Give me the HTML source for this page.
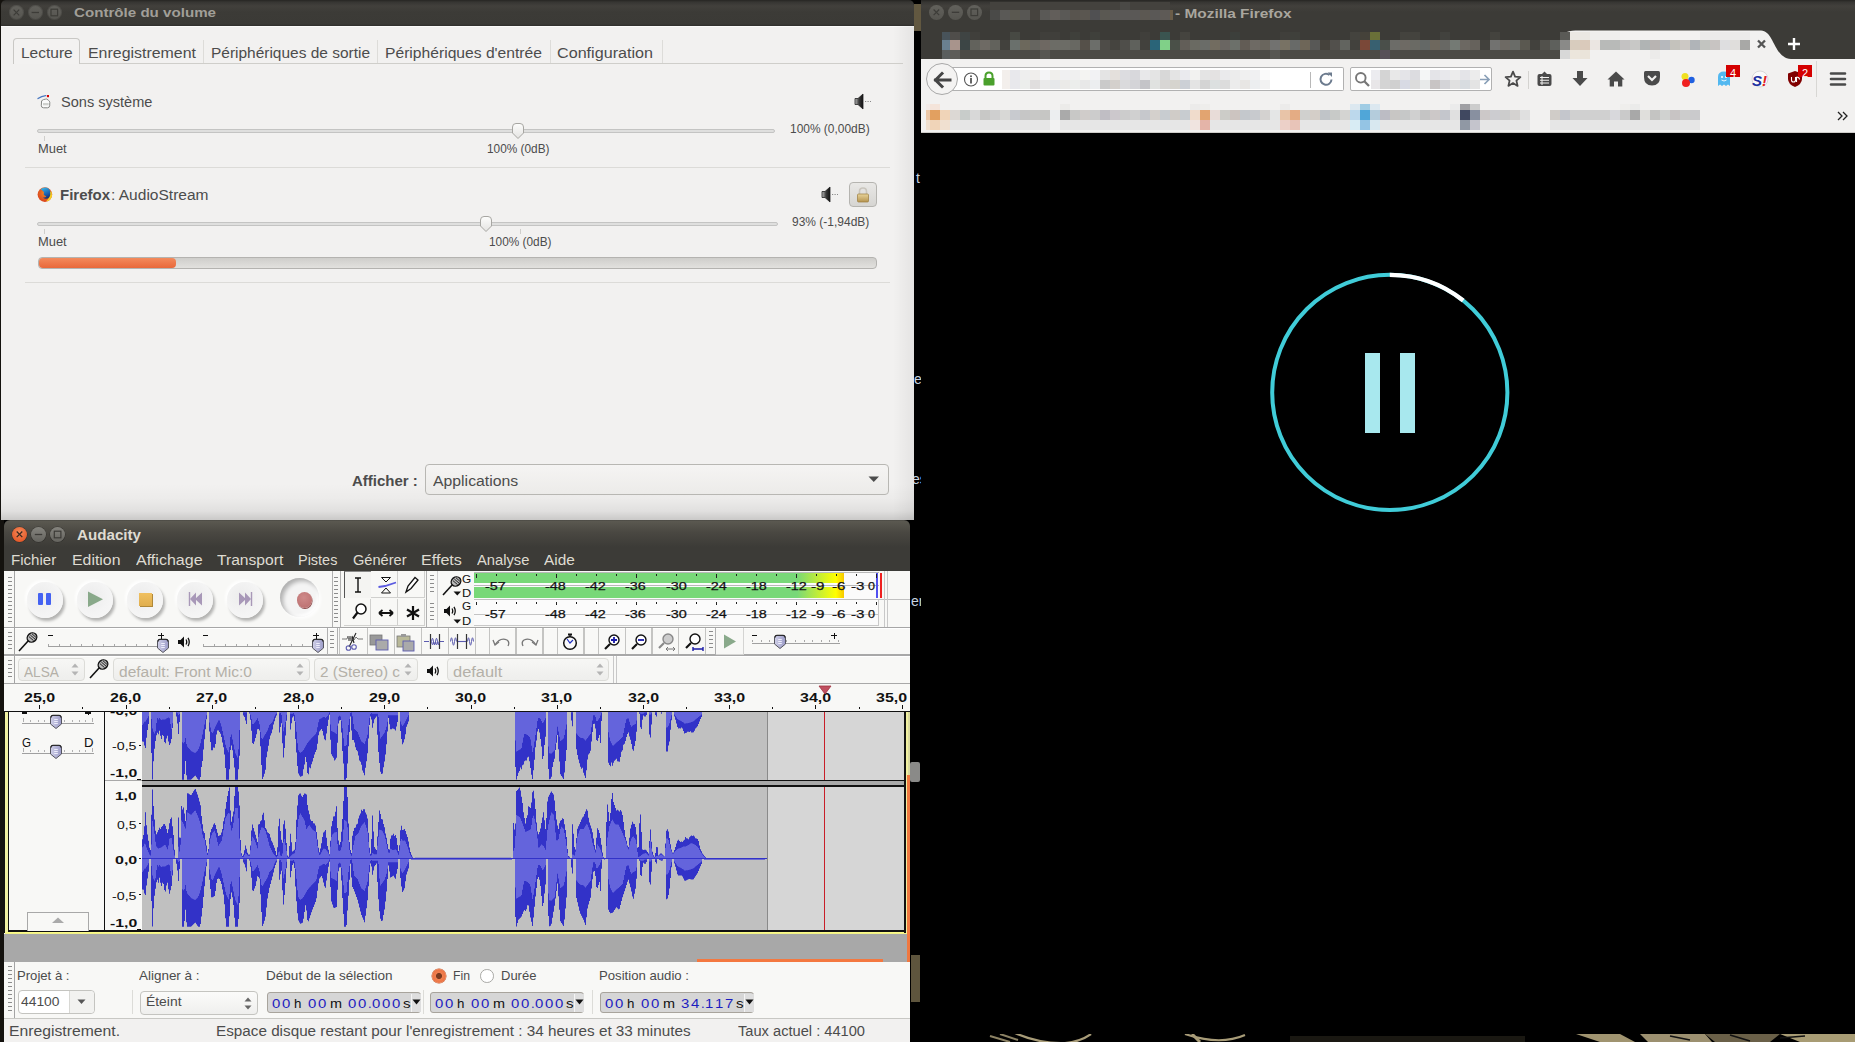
<!DOCTYPE html><html><head><meta charset="utf-8"><style>html,body{margin:0;padding:0;width:1855px;height:1042px;overflow:hidden;background:#000}.r{position:absolute}.t{position:absolute;white-space:pre}#root{position:relative;width:1855px;height:1042px;overflow:hidden;font-family:"Liberation Sans",sans-serif}</style></head><body><div id="root">
<div class="r" style="left:0px;top:0px;width:1855px;height:1042px;background:#000"></div>
<svg class="r" style="left:900px;top:1034px" width="955" height="8" viewBox="0 1034 955 8"><path d="M115,1033 Q140,1044 165,1043 Q180,1042 191,1034" stroke="#a89c78" stroke-width="2.2" fill="none"/><path d="M90,1036 L110,1042 M100,1034 L118,1040" stroke="#8c8264" stroke-width="2" fill="none"/><path d="M285,1034 Q320,1046 345,1035" stroke="#a89c78" stroke-width="2.2" fill="none"/><path d="M292,1034 L300,1042" stroke="#a89c78" stroke-width="3" fill="none"/><rect x="390" y="1036" width="235" height="6" fill="#1a1812"/><path d="M676,1034 L720,1034 L735,1042 L700,1042Z" fill="#a09470"/><path d="M740,1034 L805,1034 L812,1042 L748,1042Z" fill="#9c9070"/><path d="M805,1034 L880,1034 L870,1042 L815,1042Z" fill="#6a6048"/><path d="M880,1034 L955,1034 L955,1042 L900,1042Z" fill="#a89c74"/><path d="M770,1036 L790,1040 M830,1035 L850,1041 M880,1038 L905,1036" stroke="#111" stroke-width="1.6"/></svg>
<div class="r" style="left:914px;top:4px;width:7px;height:27px;background:#7a6e50;opacity:0.8"></div>
<div class="r" style="left:911px;top:955px;width:9px;height:47px;background:#6e6448;opacity:0.85"></div>
<div class="t" style="left:916.0px;top:171.33px;font-size:14px;line-height:15.64px;color:#c8d4e0;font-weight:400;font-family:'Liberation Sans', sans-serif;">t</div>
<div class="t" style="left:914.0px;top:372.33px;font-size:14px;line-height:15.64px;color:#c8d4e0;font-weight:400;font-family:'Liberation Sans', sans-serif;">e</div>
<div class="t" style="left:912.0px;top:472.33px;font-size:14px;line-height:15.64px;color:#c8d4e0;font-weight:400;font-family:'Liberation Sans', sans-serif;">es</div>
<div class="t" style="left:911.0px;top:594.33px;font-size:14px;line-height:15.64px;color:#c8d4e0;font-weight:400;font-family:'Liberation Sans', sans-serif;">er</div>
<div class="r" style="left:0px;top:0px;width:4px;height:1042px;background:#14120e"></div>
<div class="r" style="left:921px;top:0px;width:934px;height:59px;background:linear-gradient(#262523 0,#363532 2px,#42403c 6px,#3c3b37 12px,#3c3b37 100%)"></div>
<div class="r" style="left:928.9px;top:5px;width:15px;height:15px;border-radius:50%;background:linear-gradient(#62615c,#55544f)"></div>
<div class="r" style="left:948.0px;top:5px;width:15px;height:15px;border-radius:50%;background:linear-gradient(#62615c,#55544f)"></div>
<div class="r" style="left:966.9px;top:5px;width:15px;height:15px;border-radius:50%;background:linear-gradient(#62615c,#55544f)"></div>
<svg class="r" style="left:921px;top:0" width="70" height="26"><path d="M12.6,9.5 L18.2,15.1 M18.2,9.5 L12.6,15.1" stroke="#3d3c38" stroke-width="1.2"/><line x1="30.8" y1="12.3" x2="38.2" y2="12.3" stroke="#3d3c38" stroke-width="1.3"/><rect x="50" y="9" width="6.6" height="6.6" fill="none" stroke="#3d3c38" stroke-width="1.2"/></svg>
<div class="r" style="left:990px;top:2px;width:10px;height:8px;background:#44423e"></div><div class="r" style="left:1000px;top:2px;width:10px;height:8px;background:#44423e"></div><div class="r" style="left:1010px;top:2px;width:10px;height:8px;background:#44423e"></div><div class="r" style="left:1020px;top:2px;width:10px;height:8px;background:#44423e"></div><div class="r" style="left:1030px;top:2px;width:10px;height:8px;background:#44423e"></div><div class="r" style="left:1040px;top:2px;width:10px;height:8px;background:#44423e"></div><div class="r" style="left:1050px;top:2px;width:10px;height:8px;background:#44423e"></div><div class="r" style="left:1060px;top:2px;width:10px;height:8px;background:#44423e"></div><div class="r" style="left:1070px;top:2px;width:10px;height:8px;background:#44423e"></div><div class="r" style="left:1080px;top:2px;width:10px;height:8px;background:#44423e"></div><div class="r" style="left:1090px;top:2px;width:10px;height:8px;background:#44423e"></div><div class="r" style="left:1100px;top:2px;width:10px;height:8px;background:#44423e"></div><div class="r" style="left:1110px;top:2px;width:10px;height:8px;background:#44423e"></div><div class="r" style="left:1120px;top:2px;width:10px;height:8px;background:#4a4946"></div><div class="r" style="left:1130px;top:2px;width:10px;height:8px;background:#44423e"></div><div class="r" style="left:1140px;top:2px;width:10px;height:8px;background:#44423e"></div><div class="r" style="left:1150px;top:2px;width:10px;height:8px;background:#44423e"></div><div class="r" style="left:1160px;top:2px;width:10px;height:8px;background:#44423e"></div><div class="r" style="left:990px;top:10px;width:10px;height:10px;background:#4a4a48"></div><div class="r" style="left:1000px;top:10px;width:10px;height:10px;background:#5a5956"></div><div class="r" style="left:1010px;top:10px;width:10px;height:10px;background:#5a5850"></div><div class="r" style="left:1020px;top:10px;width:10px;height:10px;background:#585754"></div><div class="r" style="left:1030px;top:10px;width:10px;height:10px;background:#46433e"></div><div class="r" style="left:1040px;top:10px;width:10px;height:10px;background:#5a5956"></div><div class="r" style="left:1050px;top:10px;width:10px;height:10px;background:#625e5a"></div><div class="r" style="left:1060px;top:10px;width:10px;height:10px;background:#5a5956"></div><div class="r" style="left:1070px;top:10px;width:10px;height:10px;background:#58544e"></div><div class="r" style="left:1080px;top:10px;width:10px;height:10px;background:#5a5650"></div><div class="r" style="left:1090px;top:10px;width:10px;height:10px;background:#505052"></div><div class="r" style="left:1100px;top:10px;width:10px;height:10px;background:#5a5852"></div><div class="r" style="left:1110px;top:10px;width:10px;height:10px;background:#5a5856"></div><div class="r" style="left:1120px;top:10px;width:10px;height:10px;background:#5a5856"></div><div class="r" style="left:1130px;top:10px;width:10px;height:10px;background:#5a5856"></div><div class="r" style="left:1140px;top:10px;width:10px;height:10px;background:#5c5852"></div><div class="r" style="left:1150px;top:10px;width:10px;height:10px;background:#5a5856"></div><div class="r" style="left:1160px;top:10px;width:10px;height:10px;background:#5e5a56"></div><div class="r" style="left:1170px;top:10px;width:3px;height:10px;background:#6a5c48"></div>
<div class="t" style="left:1175.0px;top:6.73px;font-size:13px;line-height:14.52px;color:#a9a69e;font-weight:700;font-family:'Liberation Sans', sans-serif;transform:scaleX(1.1860);transform-origin:0 0;">- Mozilla Firefox</div>
<div class="r" style="left:942px;top:32px;width:8px;height:8px;background:#48535a"></div><div class="r" style="left:950px;top:32px;width:10px;height:8px;background:#4f4d4a"></div><div class="r" style="left:960px;top:32px;width:10px;height:8px;background:#3f4443"></div><div class="r" style="left:970px;top:32px;width:10px;height:8px;background:#403f3b"></div><div class="r" style="left:1010px;top:32px;width:10px;height:8px;background:#474943"></div><div class="r" style="left:1040px;top:32px;width:10px;height:8px;background:#403f3b"></div><div class="r" style="left:1050px;top:32px;width:10px;height:8px;background:#403f3b"></div><div class="r" style="left:1070px;top:32px;width:10px;height:8px;background:#3f403b"></div><div class="r" style="left:1090px;top:32px;width:10px;height:8px;background:#3f403b"></div><div class="r" style="left:1140px;top:32px;width:10px;height:8px;background:#403f3b"></div><div class="r" style="left:1160px;top:32px;width:10px;height:8px;background:#3a5450"></div><div class="r" style="left:1180px;top:32px;width:10px;height:8px;background:#45443f"></div><div class="r" style="left:1230px;top:32px;width:10px;height:8px;background:#3c3f3b"></div><div class="r" style="left:1280px;top:32px;width:10px;height:8px;background:#403f3b"></div><div class="r" style="left:1290px;top:32px;width:10px;height:8px;background:#3f403b"></div><div class="r" style="left:1350px;top:32px;width:10px;height:8px;background:#44433e"></div><div class="r" style="left:1360px;top:32px;width:10px;height:8px;background:#45423a"></div><div class="r" style="left:1370px;top:32px;width:10px;height:8px;background:#6a7038"></div><div class="r" style="left:1400px;top:32px;width:10px;height:8px;background:#44433e"></div><div class="r" style="left:1410px;top:32px;width:10px;height:8px;background:#44433e"></div><div class="r" style="left:1440px;top:32px;width:10px;height:8px;background:#42423e"></div><div class="r" style="left:1490px;top:32px;width:10px;height:8px;background:#44433e"></div><div class="r" style="left:1560px;top:32px;width:10px;height:8px;background:#5a5a56"></div><div class="r" style="left:942px;top:40px;width:8px;height:10px;background:#6a8090"></div><div class="r" style="left:950px;top:40px;width:10px;height:10px;background:#a8948c"></div><div class="r" style="left:960px;top:40px;width:10px;height:10px;background:#3c4545"></div><div class="r" style="left:970px;top:40px;width:10px;height:10px;background:#62625c"></div><div class="r" style="left:980px;top:40px;width:10px;height:10px;background:#6e6a64"></div><div class="r" style="left:990px;top:40px;width:10px;height:10px;background:#62625c"></div><div class="r" style="left:1000px;top:40px;width:10px;height:10px;background:#42413d"></div><div class="r" style="left:1010px;top:40px;width:10px;height:10px;background:#6a706c"></div><div class="r" style="left:1020px;top:40px;width:10px;height:10px;background:#6c685c"></div><div class="r" style="left:1030px;top:40px;width:10px;height:10px;background:#666560"></div><div class="r" style="left:1040px;top:40px;width:10px;height:10px;background:#6e6862"></div><div class="r" style="left:1050px;top:40px;width:10px;height:10px;background:#6c6c66"></div><div class="r" style="left:1060px;top:40px;width:10px;height:10px;background:#6c6c66"></div><div class="r" style="left:1070px;top:40px;width:10px;height:10px;background:#686862"></div><div class="r" style="left:1080px;top:40px;width:10px;height:10px;background:#555049"></div><div class="r" style="left:1090px;top:40px;width:10px;height:10px;background:#6c6e6a"></div><div class="r" style="left:1100px;top:40px;width:10px;height:10px;background:#4e4c48"></div><div class="r" style="left:1110px;top:40px;width:10px;height:10px;background:#45443f"></div><div class="r" style="left:1120px;top:40px;width:10px;height:10px;background:#4f4e4a"></div><div class="r" style="left:1130px;top:40px;width:10px;height:10px;background:#5f615c"></div><div class="r" style="left:1140px;top:40px;width:10px;height:10px;background:#42413d"></div><div class="r" style="left:1150px;top:40px;width:10px;height:10px;background:#2a6478"></div><div class="r" style="left:1160px;top:40px;width:10px;height:10px;background:#80d088"></div><div class="r" style="left:1170px;top:40px;width:10px;height:10px;background:#4a5048"></div><div class="r" style="left:1180px;top:40px;width:10px;height:10px;background:#625e58"></div><div class="r" style="left:1190px;top:40px;width:10px;height:10px;background:#6a6a62"></div><div class="r" style="left:1200px;top:40px;width:10px;height:10px;background:#6a6c68"></div><div class="r" style="left:1210px;top:40px;width:10px;height:10px;background:#726c60"></div><div class="r" style="left:1220px;top:40px;width:10px;height:10px;background:#6a6662"></div><div class="r" style="left:1230px;top:40px;width:10px;height:10px;background:#6c706a"></div><div class="r" style="left:1240px;top:40px;width:10px;height:10px;background:#625c55"></div><div class="r" style="left:1250px;top:40px;width:10px;height:10px;background:#6e6a64"></div><div class="r" style="left:1260px;top:40px;width:10px;height:10px;background:#6a665e"></div><div class="r" style="left:1270px;top:40px;width:10px;height:10px;background:#727270"></div><div class="r" style="left:1280px;top:40px;width:10px;height:10px;background:#787264"></div><div class="r" style="left:1290px;top:40px;width:10px;height:10px;background:#686a68"></div><div class="r" style="left:1300px;top:40px;width:10px;height:10px;background:#6e6658"></div><div class="r" style="left:1310px;top:40px;width:10px;height:10px;background:#585856"></div><div class="r" style="left:1320px;top:40px;width:10px;height:10px;background:#45423c"></div><div class="r" style="left:1330px;top:40px;width:10px;height:10px;background:#52504c"></div><div class="r" style="left:1340px;top:40px;width:10px;height:10px;background:#62645f"></div><div class="r" style="left:1350px;top:40px;width:10px;height:10px;background:#42413d"></div><div class="r" style="left:1360px;top:40px;width:10px;height:10px;background:#7a4838"></div><div class="r" style="left:1370px;top:40px;width:10px;height:10px;background:#386070"></div><div class="r" style="left:1380px;top:40px;width:10px;height:10px;background:#4a4f4a"></div><div class="r" style="left:1390px;top:40px;width:10px;height:10px;background:#6c6c68"></div><div class="r" style="left:1400px;top:40px;width:10px;height:10px;background:#6e6a64"></div><div class="r" style="left:1410px;top:40px;width:10px;height:10px;background:#6a6a64"></div><div class="r" style="left:1420px;top:40px;width:10px;height:10px;background:#646866"></div><div class="r" style="left:1430px;top:40px;width:10px;height:10px;background:#6e685e"></div><div class="r" style="left:1440px;top:40px;width:10px;height:10px;background:#686864"></div><div class="r" style="left:1450px;top:40px;width:10px;height:10px;background:#747a74"></div><div class="r" style="left:1460px;top:40px;width:10px;height:10px;background:#6c6862"></div><div class="r" style="left:1470px;top:40px;width:10px;height:10px;background:#66625c"></div><div class="r" style="left:1480px;top:40px;width:10px;height:10px;background:#42413d"></div><div class="r" style="left:1490px;top:40px;width:10px;height:10px;background:#727270"></div><div class="r" style="left:1500px;top:40px;width:10px;height:10px;background:#6e6a64"></div><div class="r" style="left:1510px;top:40px;width:10px;height:10px;background:#6a6c68"></div><div class="r" style="left:1520px;top:40px;width:10px;height:10px;background:#5a5850"></div><div class="r" style="left:1530px;top:40px;width:10px;height:10px;background:#42413d"></div><div class="r" style="left:1540px;top:40px;width:10px;height:10px;background:#52514c"></div><div class="r" style="left:1550px;top:40px;width:10px;height:10px;background:#5e605c"></div><div class="r" style="left:1560px;top:40px;width:10px;height:10px;background:#8a8a88"></div><div class="r" style="left:942px;top:50px;width:8px;height:9px;background:#5a5e5e"></div><div class="r" style="left:950px;top:50px;width:10px;height:9px;background:#5e5c58"></div><div class="r" style="left:960px;top:50px;width:10px;height:9px;background:#4c4b46"></div><div class="r" style="left:970px;top:50px;width:10px;height:9px;background:#4c4b46"></div><div class="r" style="left:980px;top:50px;width:10px;height:9px;background:#4c4b46"></div><div class="r" style="left:990px;top:50px;width:10px;height:9px;background:#4c4b46"></div><div class="r" style="left:1000px;top:50px;width:10px;height:9px;background:#4c4b46"></div><div class="r" style="left:1010px;top:50px;width:10px;height:9px;background:#4c4b46"></div><div class="r" style="left:1020px;top:50px;width:10px;height:9px;background:#4c4b46"></div><div class="r" style="left:1030px;top:50px;width:10px;height:9px;background:#4c4b46"></div><div class="r" style="left:1040px;top:50px;width:10px;height:9px;background:#585752"></div><div class="r" style="left:1050px;top:50px;width:10px;height:9px;background:#4c4b46"></div><div class="r" style="left:1060px;top:50px;width:10px;height:9px;background:#4c4b46"></div><div class="r" style="left:1070px;top:50px;width:10px;height:9px;background:#4c4b46"></div><div class="r" style="left:1080px;top:50px;width:10px;height:9px;background:#4c4b46"></div><div class="r" style="left:1090px;top:50px;width:10px;height:9px;background:#4c4b46"></div><div class="r" style="left:1100px;top:50px;width:10px;height:9px;background:#4c4b46"></div><div class="r" style="left:1110px;top:50px;width:10px;height:9px;background:#4c4b46"></div><div class="r" style="left:1120px;top:50px;width:10px;height:9px;background:#4c4b46"></div><div class="r" style="left:1130px;top:50px;width:10px;height:9px;background:#4c4b46"></div><div class="r" style="left:1140px;top:50px;width:10px;height:9px;background:#4c4b46"></div><div class="r" style="left:1150px;top:50px;width:10px;height:9px;background:#4c4b46"></div><div class="r" style="left:1160px;top:50px;width:10px;height:9px;background:#4c4b46"></div><div class="r" style="left:1170px;top:50px;width:10px;height:9px;background:#4c4b46"></div><div class="r" style="left:1180px;top:50px;width:10px;height:9px;background:#4c4b46"></div><div class="r" style="left:1190px;top:50px;width:10px;height:9px;background:#4c4b46"></div><div class="r" style="left:1200px;top:50px;width:10px;height:9px;background:#4c4b46"></div><div class="r" style="left:1210px;top:50px;width:10px;height:9px;background:#4c4b46"></div><div class="r" style="left:1220px;top:50px;width:10px;height:9px;background:#4c4b46"></div><div class="r" style="left:1230px;top:50px;width:10px;height:9px;background:#4c4b46"></div><div class="r" style="left:1240px;top:50px;width:10px;height:9px;background:#4c4b46"></div><div class="r" style="left:1250px;top:50px;width:10px;height:9px;background:#4c4b46"></div><div class="r" style="left:1260px;top:50px;width:10px;height:9px;background:#4c4b46"></div><div class="r" style="left:1270px;top:50px;width:10px;height:9px;background:#585752"></div><div class="r" style="left:1280px;top:50px;width:10px;height:9px;background:#4c4b46"></div><div class="r" style="left:1290px;top:50px;width:10px;height:9px;background:#4c4b46"></div><div class="r" style="left:1300px;top:50px;width:10px;height:9px;background:#4c4b46"></div><div class="r" style="left:1310px;top:50px;width:10px;height:9px;background:#4c4b46"></div><div class="r" style="left:1320px;top:50px;width:10px;height:9px;background:#4c4b46"></div><div class="r" style="left:1330px;top:50px;width:10px;height:9px;background:#4c4b46"></div><div class="r" style="left:1340px;top:50px;width:10px;height:9px;background:#4c4b46"></div><div class="r" style="left:1350px;top:50px;width:10px;height:9px;background:#4c4b46"></div><div class="r" style="left:1360px;top:50px;width:10px;height:9px;background:#4c4b46"></div><div class="r" style="left:1370px;top:50px;width:10px;height:9px;background:#4c4b46"></div><div class="r" style="left:1380px;top:50px;width:10px;height:9px;background:#585058"></div><div class="r" style="left:1390px;top:50px;width:10px;height:9px;background:#4c4b46"></div><div class="r" style="left:1400px;top:50px;width:10px;height:9px;background:#4c4b46"></div><div class="r" style="left:1410px;top:50px;width:10px;height:9px;background:#4c4b46"></div><div class="r" style="left:1420px;top:50px;width:10px;height:9px;background:#4c4b46"></div><div class="r" style="left:1430px;top:50px;width:10px;height:9px;background:#4c4b46"></div><div class="r" style="left:1440px;top:50px;width:10px;height:9px;background:#4c4b46"></div><div class="r" style="left:1450px;top:50px;width:10px;height:9px;background:#4c4b46"></div><div class="r" style="left:1460px;top:50px;width:10px;height:9px;background:#4c4b46"></div><div class="r" style="left:1470px;top:50px;width:10px;height:9px;background:#4c4b46"></div><div class="r" style="left:1480px;top:50px;width:10px;height:9px;background:#4c4b46"></div><div class="r" style="left:1490px;top:50px;width:10px;height:9px;background:#4c4b46"></div><div class="r" style="left:1500px;top:50px;width:10px;height:9px;background:#4c4b46"></div><div class="r" style="left:1510px;top:50px;width:10px;height:9px;background:#4c4b46"></div><div class="r" style="left:1520px;top:50px;width:10px;height:9px;background:#4c4b46"></div><div class="r" style="left:1530px;top:50px;width:10px;height:9px;background:#4c4b46"></div><div class="r" style="left:1540px;top:50px;width:10px;height:9px;background:#4c4b46"></div><div class="r" style="left:1550px;top:50px;width:10px;height:9px;background:#4c4b46"></div><div class="r" style="left:1560px;top:50px;width:10px;height:9px;background:#4c4b46"></div><div class="r" style="left:1570px;top:50px;width:10px;height:9px;background:#d8d8d8"></div>
<svg class="r" style="left:1555px;top:28px" width="240" height="32"><path d="M5,32 L5,12 C8,3 14,2.5 24,2.5 L206,2.5 C219,2.5 219,30.5 236,31 L236,32 Z" fill="#f2f1f0"/></svg>
<div class="r" style="left:1560px;top:32px;width:10px;height:8px;background:#5a5a56"></div><div class="r" style="left:1570px;top:32px;width:20px;height:8px;background:#ebe8e3"></div><div class="r" style="left:1590px;top:32px;width:30px;height:8px;background:#efeeed"></div><div class="r" style="left:1700px;top:32px;width:50px;height:8px;background:#ecebea"></div><div class="r" style="left:1560px;top:40px;width:10px;height:10px;background:#8a8a88"></div><div class="r" style="left:1570px;top:40px;width:10px;height:10px;background:#d8ccbe"></div><div class="r" style="left:1580px;top:40px;width:10px;height:10px;background:#dacabb"></div><div class="r" style="left:1590px;top:40px;width:10px;height:10px;background:#ebe6e2"></div><div class="r" style="left:1600px;top:40px;width:20px;height:10px;background:#b8bab8"></div><div class="r" style="left:1620px;top:40px;width:10px;height:10px;background:#c4c2c2"></div><div class="r" style="left:1630px;top:40px;width:10px;height:10px;background:#c8c8c6"></div><div class="r" style="left:1640px;top:40px;width:10px;height:10px;background:#b0b4b4"></div><div class="r" style="left:1650px;top:40px;width:10px;height:10px;background:#b8b4b2"></div><div class="r" style="left:1660px;top:40px;width:10px;height:10px;background:#b6b8bc"></div><div class="r" style="left:1670px;top:40px;width:10px;height:10px;background:#c4c2bc"></div><div class="r" style="left:1680px;top:40px;width:10px;height:10px;background:#ccc8c4"></div><div class="r" style="left:1690px;top:40px;width:10px;height:10px;background:#b0b4b8"></div><div class="r" style="left:1700px;top:40px;width:10px;height:10px;background:#c2c4c0"></div><div class="r" style="left:1710px;top:40px;width:10px;height:10px;background:#c8c4c2"></div><div class="r" style="left:1720px;top:40px;width:10px;height:10px;background:#dedee0"></div><div class="r" style="left:1730px;top:40px;width:10px;height:10px;background:#e0dedc"></div><div class="r" style="left:1740px;top:40px;width:10px;height:10px;background:#a8a8a6"></div><div class="r" style="left:1560px;top:50px;width:10px;height:9px;background:#d8d8d8"></div><div class="r" style="left:1570px;top:50px;width:10px;height:9px;background:#ece6dc"></div><div class="r" style="left:1580px;top:50px;width:10px;height:9px;background:#eae4da"></div><div class="r" style="left:1650px;top:50px;width:10px;height:9px;background:#ecebea"></div>
<svg class="r" style="left:1756px;top:39px" width="11" height="10"><path d="M2,1.5 L9,8.5 M9,1.5 L2,8.5" stroke="#555" stroke-width="2.3"/></svg>
<svg class="r" style="left:1787px;top:37px" width="14" height="14"><path d="M7,1 V13 M1,7 H13" stroke="#fff" stroke-width="2.4"/></svg>
<div class="r" style="left:921px;top:59px;width:934px;height:74px;background:#f2f1f0"></div>
<div class="r" style="left:921px;top:132px;width:934px;height:1px;background:#cfcdca"></div>
<div class="r" style="left:945px;top:67px;width:399px;height:24px;box-sizing:border-box;border:1px solid #b1b1b1;border-left:none;border-radius:0 2px 2px 0;background:#fff"></div>
<div class="r" style="left:926px;top:63px;width:32px;height:32px;box-sizing:border-box;border-radius:50%;border:1px solid #a8a8a8;background:#f4f3f2"></div>
<svg class="r" style="left:932px;top:69px" width="22" height="22"><path d="M3.5,11 L10,4.5 M3.5,11 L10,17.5 M3.5,11 H18" stroke="#454545" stroke-width="3" fill="none" stroke-linecap="square" stroke-linejoin="miter"/></svg>
<svg class="r" style="left:963px;top:72px" width="16" height="16"><circle cx="8" cy="7.5" r="6.5" fill="none" stroke="#555" stroke-width="1.1"/><rect x="7.1" y="6" width="1.8" height="5.5" fill="#555"/><circle cx="8" cy="4.2" r="1" fill="#555"/></svg>
<svg class="r" style="left:982px;top:71px" width="14" height="16"><path d="M3.5,7 V5 Q3.5,1.5 7,1.5 Q10.5,1.5 10.5,5 V7" fill="none" stroke="#4aa02c" stroke-width="2"/><rect x="1.5" y="7" width="11" height="7.5" rx="1" fill="#4aa02c"/></svg>
<div class="r" style="left:1002px;top:70px;width:8px;height:10px;background:#f3efec"></div><div class="r" style="left:1010px;top:70px;width:10px;height:10px;background:#e8e8ec"></div><div class="r" style="left:1020px;top:70px;width:10px;height:10px;background:#eeeeee"></div><div class="r" style="left:1030px;top:70px;width:10px;height:10px;background:#f0eeec"></div><div class="r" style="left:1040px;top:70px;width:10px;height:10px;background:#f4f4f6"></div><div class="r" style="left:1050px;top:70px;width:10px;height:10px;background:#f0efec"></div><div class="r" style="left:1060px;top:70px;width:10px;height:10px;background:#f0f0f2"></div><div class="r" style="left:1070px;top:70px;width:10px;height:10px;background:#f0f0f0"></div><div class="r" style="left:1080px;top:70px;width:10px;height:10px;background:#f4f4f2"></div><div class="r" style="left:1090px;top:70px;width:10px;height:10px;background:#f2f2f4"></div><div class="r" style="left:1100px;top:70px;width:10px;height:10px;background:#e4e4e4"></div><div class="r" style="left:1110px;top:70px;width:10px;height:10px;background:#e4e0dc"></div><div class="r" style="left:1120px;top:70px;width:10px;height:10px;background:#dcdce0"></div><div class="r" style="left:1130px;top:70px;width:10px;height:10px;background:#d8d8dc"></div><div class="r" style="left:1140px;top:70px;width:10px;height:10px;background:#e8e8ea"></div><div class="r" style="left:1150px;top:70px;width:10px;height:10px;background:#e4e4e4"></div><div class="r" style="left:1160px;top:70px;width:10px;height:10px;background:#d8d8d8"></div><div class="r" style="left:1170px;top:70px;width:10px;height:10px;background:#e4e4e4"></div><div class="r" style="left:1180px;top:70px;width:10px;height:10px;background:#eaeaee"></div><div class="r" style="left:1190px;top:70px;width:10px;height:10px;background:#f2f2f0"></div><div class="r" style="left:1200px;top:70px;width:10px;height:10px;background:#e4e4e4"></div><div class="r" style="left:1210px;top:70px;width:10px;height:10px;background:#e4e2e2"></div><div class="r" style="left:1220px;top:70px;width:10px;height:10px;background:#eaeaec"></div><div class="r" style="left:1230px;top:70px;width:10px;height:10px;background:#ececec"></div><div class="r" style="left:1240px;top:70px;width:10px;height:10px;background:#f0f0f0"></div><div class="r" style="left:1250px;top:70px;width:10px;height:10px;background:#f0f0f2"></div><div class="r" style="left:1260px;top:70px;width:10px;height:10px;background:#fafafa"></div><div class="r" style="left:1002px;top:80px;width:8px;height:9px;background:#f3efec"></div><div class="r" style="left:1010px;top:80px;width:10px;height:9px;background:#e8e8ec"></div><div class="r" style="left:1020px;top:80px;width:10px;height:9px;background:#eceeec"></div><div class="r" style="left:1030px;top:80px;width:10px;height:9px;background:#e0dede"></div><div class="r" style="left:1040px;top:80px;width:10px;height:9px;background:#eaeaea"></div><div class="r" style="left:1050px;top:80px;width:10px;height:9px;background:#e6e8ea"></div><div class="r" style="left:1060px;top:80px;width:10px;height:9px;background:#ebeae8"></div><div class="r" style="left:1070px;top:80px;width:10px;height:9px;background:#eceeec"></div><div class="r" style="left:1080px;top:80px;width:10px;height:9px;background:#e8e8e8"></div><div class="r" style="left:1090px;top:80px;width:10px;height:9px;background:#eceef0"></div><div class="r" style="left:1100px;top:80px;width:10px;height:9px;background:#cacaca"></div><div class="r" style="left:1110px;top:80px;width:10px;height:9px;background:#d4d0cc"></div><div class="r" style="left:1120px;top:80px;width:10px;height:9px;background:#dadadc"></div><div class="r" style="left:1130px;top:80px;width:10px;height:9px;background:#d4d4d8"></div><div class="r" style="left:1140px;top:80px;width:10px;height:9px;background:#c4c4c8"></div><div class="r" style="left:1150px;top:80px;width:10px;height:9px;background:#e0e2e0"></div><div class="r" style="left:1160px;top:80px;width:10px;height:9px;background:#d8d6d4"></div><div class="r" style="left:1170px;top:80px;width:10px;height:9px;background:#d6d4ce"></div><div class="r" style="left:1180px;top:80px;width:10px;height:9px;background:#ccd0d6"></div><div class="r" style="left:1190px;top:80px;width:10px;height:9px;background:#e4e4e4"></div><div class="r" style="left:1200px;top:80px;width:10px;height:9px;background:#d4d4d4"></div><div class="r" style="left:1210px;top:80px;width:10px;height:9px;background:#dce0e0"></div><div class="r" style="left:1220px;top:80px;width:10px;height:9px;background:#dcdcdc"></div><div class="r" style="left:1230px;top:80px;width:10px;height:9px;background:#ececec"></div><div class="r" style="left:1240px;top:80px;width:10px;height:9px;background:#e8e6e4"></div><div class="r" style="left:1250px;top:80px;width:10px;height:9px;background:#eceef0"></div><div class="r" style="left:1260px;top:80px;width:10px;height:9px;background:#f2f2f2"></div>
<div class="r" style="left:1310px;top:72px;width:1px;height:16px;background:#b8b8b8"></div>
<svg class="r" style="left:1318px;top:71px" width="17" height="17"><path d="M13.5,8.5 A5.5,5.5 0 1 1 11.5,4" fill="none" stroke="#6c7b8e" stroke-width="2"/><path d="M9.5,1.5 L14,1.5 L14,6 Z" fill="#6c7b8e"/></svg>
<div class="r" style="left:1350px;top:67px;width:142px;height:24px;box-sizing:border-box;border:1px solid #b1b1b1;border-radius:2px;background:#fff"></div>
<svg class="r" style="left:1354px;top:71px" width="17" height="17"><circle cx="6.8" cy="6.8" r="4.8" fill="none" stroke="#777" stroke-width="1.9"/><line x1="10.3" y1="10.3" x2="15" y2="15" stroke="#777" stroke-width="2.3"/></svg>
<div class="r" style="left:1371px;top:70px;width:9px;height:10px;background:#ececf0"></div><div class="r" style="left:1380px;top:70px;width:10px;height:10px;background:#d4d4d4"></div><div class="r" style="left:1390px;top:70px;width:10px;height:10px;background:#e8e8e8"></div><div class="r" style="left:1400px;top:70px;width:10px;height:10px;background:#e4e4e8"></div><div class="r" style="left:1410px;top:70px;width:10px;height:10px;background:#dcdce0"></div><div class="r" style="left:1420px;top:70px;width:10px;height:10px;background:#f4f6f6"></div><div class="r" style="left:1430px;top:70px;width:10px;height:10px;background:#e4e4e8"></div><div class="r" style="left:1440px;top:70px;width:10px;height:10px;background:#e8e8ec"></div><div class="r" style="left:1450px;top:70px;width:10px;height:10px;background:#ececec"></div><div class="r" style="left:1460px;top:70px;width:10px;height:10px;background:#e4e4e8"></div><div class="r" style="left:1470px;top:70px;width:10px;height:10px;background:#ececec"></div><div class="r" style="left:1371px;top:80px;width:9px;height:9px;background:#e8e6e8"></div><div class="r" style="left:1380px;top:80px;width:10px;height:9px;background:#d4d4d4"></div><div class="r" style="left:1390px;top:80px;width:10px;height:9px;background:#d0d0d0"></div><div class="r" style="left:1400px;top:80px;width:10px;height:9px;background:#d8dae4"></div><div class="r" style="left:1410px;top:80px;width:10px;height:9px;background:#dcdcdc"></div><div class="r" style="left:1420px;top:80px;width:10px;height:9px;background:#e8eaea"></div><div class="r" style="left:1430px;top:80px;width:10px;height:9px;background:#c8c4c4"></div><div class="r" style="left:1440px;top:80px;width:10px;height:9px;background:#d4d4d8"></div><div class="r" style="left:1450px;top:80px;width:10px;height:9px;background:#e0e0e0"></div><div class="r" style="left:1460px;top:80px;width:10px;height:9px;background:#d8dce0"></div><div class="r" style="left:1470px;top:80px;width:10px;height:9px;background:#e4e4e4"></div>
<svg class="r" style="left:1479px;top:73px" width="12" height="13"><path d="M1,6.5 H10 M5.5,2 L10,6.5 L5.5,11" fill="none" stroke="#8aa0b8" stroke-width="1.7"/></svg>
<svg class="r" style="left:1504px;top:70px" width="18" height="18" viewBox="0 0 18 18"><path d="M9,1.6 L11.1,6.6 L16.4,7.1 L12.4,10.6 L13.6,15.9 L9,13.1 L4.4,15.9 L5.6,10.6 L1.6,7.1 L6.9,6.6 Z" fill="none" stroke="#4a4a4a" stroke-width="1.8" stroke-linejoin="round"/></svg>
<div class="r" style="left:1528px;top:71px;width:1px;height:18px;background:#d4d3d0"></div>
<svg class="r" style="left:1536px;top:70px" width="18" height="18"><rect x="1.5" y="4" width="14" height="12" rx="2" fill="#4a4a4a"/><path d="M6,4 L8.5,1.5 L11,4" fill="#4a4a4a"/><path d="M4,7.5 H13 M4,10.3 H13 M4,13 H13" stroke="#f2f1f0" stroke-width="1.1"/><path d="M6,6 V15" stroke="#f2f1f0" stroke-width="1"/></svg>
<svg class="r" style="left:1571px;top:70px" width="18" height="18"><path d="M6,1 H12 V8 H16.5 L9,16 L1.5,8 H6 Z" fill="#4a4a4a"/></svg>
<svg class="r" style="left:1606px;top:70px" width="20" height="18"><path d="M10,1.5 L18.5,9.5 L16.3,9.5 L16.3,16.5 L12,16.5 L12,11.5 L8,11.5 L8,16.5 L3.7,16.5 L3.7,9.5 L1.5,9.5 Z" fill="#4a4a4a"/></svg>
<svg class="r" style="left:1643px;top:70px" width="18" height="17"><path d="M1,2.5 Q1,1 2.5,1 H15.5 Q17,1 17,2.5 V7 Q17,15.5 9,15.5 Q1,15.5 1,7 Z" fill="#4a4a4a"/><path d="M5,6 L9,10 L13,6" fill="none" stroke="#f2f1f0" stroke-width="2.2"/></svg>
<svg class="r" style="left:1679px;top:72px" width="19" height="16"><circle cx="6" cy="4.5" r="3.5" fill="#f0e020"/><circle cx="12.5" cy="8" r="3.2" fill="#2060e0"/><circle cx="7" cy="11" r="4" fill="#f02020"/></svg>
<svg class="r" style="left:1716px;top:70px" width="16" height="18"><path d="M2,16 V7 Q2,1.5 8,1.5 Q14,1.5 14,7 V16 L12,14.5 L10,16 L8,14.5 L6,16 L4,14.5 Z" fill="#52b8f0"/><circle cx="6" cy="7" r="1" fill="#fff"/><circle cx="10" cy="7" r="1" fill="#fff"/><path d="M5.5,10 Q8,12 10.5,10" stroke="#fff" stroke-width="0.9" fill="none"/></svg>
<div class="r" style="left:1726px;top:65px;width:14px;height:12px;background:#d40000"></div>
<div class="t" style="left:1729.9px;top:67.05px;font-size:11px;line-height:12.29px;color:#fff;font-weight:400;font-family:'Liberation Sans', sans-serif;">4</div>
<svg class="r" style="left:1751px;top:70px" width="18" height="18"><circle cx="9" cy="9" r="8" fill="#fafafa" stroke="#ccc" stroke-width="0.7"/></svg>
<div class="t" style="left:1752.0px;top:73.42px;font-size:15px;line-height:16.75px;color:#2030a0;font-weight:700;font-family:'Liberation Sans', sans-serif;font-style:italic;">S</div>
<div class="t" style="left:1762.0px;top:74.33px;font-size:14px;line-height:15.64px;color:#e02020;font-weight:700;font-family:'Liberation Sans', sans-serif;transform:scaleX(1.0724);transform-origin:0 0;font-style:italic;">!</div>
<svg class="r" style="left:1786px;top:70px" width="18" height="18"><path d="M9,1 L16,3.5 V9 Q16,14 9,17 Q2,14 2,9 V3.5 Z" fill="#800000"/><path d="M5.5,7 V10 Q5.5,12 7.5,12 Q9.5,12 9.5,10 V7 M10.5,12 V7 M10.5,7 Q13.5,7 13.5,9.5" stroke="#fff" stroke-width="1.1" fill="none"/></svg>
<div class="r" style="left:1798px;top:65px;width:14px;height:12px;background:#d40000"></div>
<div class="t" style="left:1801.9px;top:67.05px;font-size:11px;line-height:12.29px;color:#fff;font-weight:400;font-family:'Liberation Sans', sans-serif;">2</div>
<div class="r" style="left:1816px;top:61px;width:1px;height:36px;background:#d8d7d4"></div>
<svg class="r" style="left:1829px;top:71px" width="18" height="16"><path d="M2,2.5 H16 M2,8 H16 M2,13.5 H16" stroke="#4a4a4a" stroke-width="2.6" stroke-linecap="round"/></svg>
<div class="r" style="left:926px;top:104px;width:4px;height:6px;background:#f3ebe8"></div><div class="r" style="left:930px;top:104px;width:10px;height:6px;background:#f4e4da"></div><div class="r" style="left:1060px;top:104px;width:10px;height:6px;background:#ecebe9"></div><div class="r" style="left:1190px;top:104px;width:10px;height:6px;background:#ecebea"></div><div class="r" style="left:1200px;top:104px;width:10px;height:6px;background:#eeedeb"></div><div class="r" style="left:1280px;top:104px;width:10px;height:6px;background:#ecebea"></div><div class="r" style="left:1350px;top:104px;width:10px;height:6px;background:#dce8f0"></div><div class="r" style="left:1360px;top:104px;width:10px;height:6px;background:#a0cce4"></div><div class="r" style="left:1370px;top:104px;width:10px;height:6px;background:#dce8f0"></div><div class="r" style="left:1450px;top:104px;width:10px;height:6px;background:#ebebeb"></div><div class="r" style="left:1460px;top:104px;width:10px;height:6px;background:#a0a0a4"></div><div class="r" style="left:1470px;top:104px;width:10px;height:6px;background:#cccccc"></div><div class="r" style="left:1620px;top:104px;width:10px;height:6px;background:#efeeec"></div><div class="r" style="left:1630px;top:104px;width:10px;height:6px;background:#ebebea"></div><div class="r" style="left:926px;top:110px;width:4px;height:10px;background:#ecc8a8"></div><div class="r" style="left:930px;top:110px;width:10px;height:10px;background:#e2a060"></div><div class="r" style="left:940px;top:110px;width:10px;height:10px;background:#f0d4b8"></div><div class="r" style="left:950px;top:110px;width:10px;height:10px;background:#dcd8d4"></div><div class="r" style="left:960px;top:110px;width:10px;height:10px;background:#c8ccca"></div><div class="r" style="left:970px;top:110px;width:10px;height:10px;background:#d8d8d8"></div><div class="r" style="left:980px;top:110px;width:10px;height:10px;background:#c8c8c6"></div><div class="r" style="left:990px;top:110px;width:10px;height:10px;background:#cfcfcf"></div><div class="r" style="left:1000px;top:110px;width:10px;height:10px;background:#d8d8d6"></div><div class="r" style="left:1010px;top:110px;width:10px;height:10px;background:#c8cacf"></div><div class="r" style="left:1020px;top:110px;width:10px;height:10px;background:#c6c6c6"></div><div class="r" style="left:1030px;top:110px;width:10px;height:10px;background:#c8c8c6"></div><div class="r" style="left:1040px;top:110px;width:10px;height:10px;background:#c6c6c4"></div><div class="r" style="left:1050px;top:110px;width:10px;height:10px;background:#eceef0"></div><div class="r" style="left:1060px;top:110px;width:10px;height:10px;background:#aaaaaa"></div><div class="r" style="left:1070px;top:110px;width:10px;height:10px;background:#c8c8c6"></div><div class="r" style="left:1080px;top:110px;width:10px;height:10px;background:#d0ccca"></div><div class="r" style="left:1090px;top:110px;width:10px;height:10px;background:#cccccc"></div><div class="r" style="left:1100px;top:110px;width:10px;height:10px;background:#c0bec4"></div><div class="r" style="left:1110px;top:110px;width:10px;height:10px;background:#ccc8cc"></div><div class="r" style="left:1120px;top:110px;width:10px;height:10px;background:#cccccc"></div><div class="r" style="left:1130px;top:110px;width:10px;height:10px;background:#d0d0d0"></div><div class="r" style="left:1140px;top:110px;width:10px;height:10px;background:#c6c8cc"></div><div class="r" style="left:1150px;top:110px;width:10px;height:10px;background:#d4d0cc"></div><div class="r" style="left:1160px;top:110px;width:10px;height:10px;background:#c8ccd0"></div><div class="r" style="left:1170px;top:110px;width:10px;height:10px;background:#d0ccc8"></div><div class="r" style="left:1180px;top:110px;width:10px;height:10px;background:#c8ccd0"></div><div class="r" style="left:1190px;top:110px;width:10px;height:10px;background:#f0dccc"></div><div class="r" style="left:1200px;top:110px;width:10px;height:10px;background:#e2a470"></div><div class="r" style="left:1210px;top:110px;width:10px;height:10px;background:#e8dcd8"></div><div class="r" style="left:1220px;top:110px;width:10px;height:10px;background:#ccccc8"></div><div class="r" style="left:1230px;top:110px;width:10px;height:10px;background:#ccc4c0"></div><div class="r" style="left:1240px;top:110px;width:10px;height:10px;background:#c4c8cc"></div><div class="r" style="left:1250px;top:110px;width:10px;height:10px;background:#c8cace"></div><div class="r" style="left:1260px;top:110px;width:10px;height:10px;background:#d4d2d0"></div><div class="r" style="left:1270px;top:110px;width:10px;height:10px;background:#e4e6e6"></div><div class="r" style="left:1280px;top:110px;width:10px;height:10px;background:#e8c4a8"></div><div class="r" style="left:1290px;top:110px;width:10px;height:10px;background:#e4ac84"></div><div class="r" style="left:1300px;top:110px;width:10px;height:10px;background:#d0d0ce"></div><div class="r" style="left:1310px;top:110px;width:10px;height:10px;background:#d4cec8"></div><div class="r" style="left:1320px;top:110px;width:10px;height:10px;background:#c0c4c8"></div><div class="r" style="left:1330px;top:110px;width:10px;height:10px;background:#c8cac8"></div><div class="r" style="left:1340px;top:110px;width:10px;height:10px;background:#d4d4d2"></div><div class="r" style="left:1350px;top:110px;width:10px;height:10px;background:#bcd8ec"></div><div class="r" style="left:1360px;top:110px;width:10px;height:10px;background:#50a6d8"></div><div class="r" style="left:1370px;top:110px;width:10px;height:10px;background:#b4ccdc"></div><div class="r" style="left:1380px;top:110px;width:10px;height:10px;background:#bcbcc4"></div><div class="r" style="left:1390px;top:110px;width:10px;height:10px;background:#c8c6c4"></div><div class="r" style="left:1400px;top:110px;width:10px;height:10px;background:#c6c8c8"></div><div class="r" style="left:1410px;top:110px;width:10px;height:10px;background:#d0d0d0"></div><div class="r" style="left:1420px;top:110px;width:10px;height:10px;background:#c4c4c4"></div><div class="r" style="left:1430px;top:110px;width:10px;height:10px;background:#ccc8c8"></div><div class="r" style="left:1440px;top:110px;width:10px;height:10px;background:#c4c6cc"></div><div class="r" style="left:1450px;top:110px;width:10px;height:10px;background:#e0e0e0"></div><div class="r" style="left:1460px;top:110px;width:10px;height:10px;background:#404860"></div><div class="r" style="left:1470px;top:110px;width:10px;height:10px;background:#8890a0"></div><div class="r" style="left:1480px;top:110px;width:10px;height:10px;background:#ccc8c8"></div><div class="r" style="left:1490px;top:110px;width:10px;height:10px;background:#ccccd0"></div><div class="r" style="left:1500px;top:110px;width:10px;height:10px;background:#cccccc"></div><div class="r" style="left:1510px;top:110px;width:10px;height:10px;background:#d4d2d0"></div><div class="r" style="left:1520px;top:110px;width:10px;height:10px;background:#e0e0e0"></div><div class="r" style="left:1550px;top:110px;width:10px;height:10px;background:#d0ccc8"></div><div class="r" style="left:1560px;top:110px;width:10px;height:10px;background:#c4c6cc"></div><div class="r" style="left:1570px;top:110px;width:10px;height:10px;background:#d0d0d0"></div><div class="r" style="left:1580px;top:110px;width:10px;height:10px;background:#d0d0d0"></div><div class="r" style="left:1590px;top:110px;width:10px;height:10px;background:#d0d0d0"></div><div class="r" style="left:1600px;top:110px;width:10px;height:10px;background:#d0d0d0"></div><div class="r" style="left:1610px;top:110px;width:10px;height:10px;background:#d8d8dc"></div><div class="r" style="left:1620px;top:110px;width:10px;height:10px;background:#cacaca"></div><div class="r" style="left:1630px;top:110px;width:10px;height:10px;background:#a8a8a8"></div><div class="r" style="left:1640px;top:110px;width:10px;height:10px;background:#e0dfdc"></div><div class="r" style="left:1650px;top:110px;width:10px;height:10px;background:#c4c4c2"></div><div class="r" style="left:1660px;top:110px;width:10px;height:10px;background:#d0d2d0"></div><div class="r" style="left:1670px;top:110px;width:10px;height:10px;background:#c8c4c4"></div><div class="r" style="left:1680px;top:110px;width:10px;height:10px;background:#cccccc"></div><div class="r" style="left:1690px;top:110px;width:10px;height:10px;background:#cacacc"></div><div class="r" style="left:926px;top:120px;width:4px;height:10px;background:#f0e0d0"></div><div class="r" style="left:930px;top:120px;width:10px;height:10px;background:#f0d4b8"></div><div class="r" style="left:940px;top:120px;width:10px;height:10px;background:#f0e0d0"></div><div class="r" style="left:950px;top:120px;width:10px;height:10px;background:#e6e6e6"></div><div class="r" style="left:960px;top:120px;width:10px;height:10px;background:#e6e6e6"></div><div class="r" style="left:970px;top:120px;width:10px;height:10px;background:#e6e6e6"></div><div class="r" style="left:980px;top:120px;width:10px;height:10px;background:#e6e6e6"></div><div class="r" style="left:990px;top:120px;width:10px;height:10px;background:#e6e6e6"></div><div class="r" style="left:1000px;top:120px;width:10px;height:10px;background:#e6e6e6"></div><div class="r" style="left:1010px;top:120px;width:10px;height:10px;background:#e6e6e6"></div><div class="r" style="left:1020px;top:120px;width:10px;height:10px;background:#e6e6e6"></div><div class="r" style="left:1030px;top:120px;width:10px;height:10px;background:#e6e6e6"></div><div class="r" style="left:1040px;top:120px;width:10px;height:10px;background:#e6e6e6"></div><div class="r" style="left:1050px;top:120px;width:10px;height:10px;background:#f2f2f2"></div><div class="r" style="left:1060px;top:120px;width:10px;height:10px;background:#e6e6e6"></div><div class="r" style="left:1070px;top:120px;width:10px;height:10px;background:#e6e6e6"></div><div class="r" style="left:1080px;top:120px;width:10px;height:10px;background:#e6e6e6"></div><div class="r" style="left:1090px;top:120px;width:10px;height:10px;background:#e6e6e6"></div><div class="r" style="left:1100px;top:120px;width:10px;height:10px;background:#e6e6e6"></div><div class="r" style="left:1110px;top:120px;width:10px;height:10px;background:#e6e6e6"></div><div class="r" style="left:1120px;top:120px;width:10px;height:10px;background:#e6e6e6"></div><div class="r" style="left:1130px;top:120px;width:10px;height:10px;background:#e6e6e6"></div><div class="r" style="left:1140px;top:120px;width:10px;height:10px;background:#e6e6e6"></div><div class="r" style="left:1150px;top:120px;width:10px;height:10px;background:#e6e6e6"></div><div class="r" style="left:1160px;top:120px;width:10px;height:10px;background:#e6e6e6"></div><div class="r" style="left:1170px;top:120px;width:10px;height:10px;background:#e6e6e6"></div><div class="r" style="left:1180px;top:120px;width:10px;height:10px;background:#e6e6e6"></div><div class="r" style="left:1190px;top:120px;width:10px;height:10px;background:#f0e4e0"></div><div class="r" style="left:1200px;top:120px;width:10px;height:10px;background:#e4b4a8"></div><div class="r" style="left:1210px;top:120px;width:10px;height:10px;background:#e6e6e6"></div><div class="r" style="left:1220px;top:120px;width:10px;height:10px;background:#e6e6e6"></div><div class="r" style="left:1230px;top:120px;width:10px;height:10px;background:#e6e6e6"></div><div class="r" style="left:1240px;top:120px;width:10px;height:10px;background:#e6e6e6"></div><div class="r" style="left:1250px;top:120px;width:10px;height:10px;background:#e6e6e6"></div><div class="r" style="left:1260px;top:120px;width:10px;height:10px;background:#e6e6e6"></div><div class="r" style="left:1270px;top:120px;width:10px;height:10px;background:#e6e6e6"></div><div class="r" style="left:1280px;top:120px;width:10px;height:10px;background:#ecd0c8"></div><div class="r" style="left:1290px;top:120px;width:10px;height:10px;background:#e8c4b8"></div><div class="r" style="left:1300px;top:120px;width:10px;height:10px;background:#e6e6e6"></div><div class="r" style="left:1310px;top:120px;width:10px;height:10px;background:#e6e6e6"></div><div class="r" style="left:1320px;top:120px;width:10px;height:10px;background:#e6e6e6"></div><div class="r" style="left:1330px;top:120px;width:10px;height:10px;background:#e6e6e6"></div><div class="r" style="left:1340px;top:120px;width:10px;height:10px;background:#e6e6e6"></div><div class="r" style="left:1350px;top:120px;width:10px;height:10px;background:#d8ecf4"></div><div class="r" style="left:1360px;top:120px;width:10px;height:10px;background:#94c4e4"></div><div class="r" style="left:1370px;top:120px;width:10px;height:10px;background:#d8e8f0"></div><div class="r" style="left:1380px;top:120px;width:10px;height:10px;background:#e6e6e6"></div><div class="r" style="left:1390px;top:120px;width:10px;height:10px;background:#e6e6e6"></div><div class="r" style="left:1400px;top:120px;width:10px;height:10px;background:#e6e6e6"></div><div class="r" style="left:1410px;top:120px;width:10px;height:10px;background:#e6e6e6"></div><div class="r" style="left:1420px;top:120px;width:10px;height:10px;background:#e6e6e6"></div><div class="r" style="left:1430px;top:120px;width:10px;height:10px;background:#e6e6e6"></div><div class="r" style="left:1440px;top:120px;width:10px;height:10px;background:#e6e6e6"></div><div class="r" style="left:1450px;top:120px;width:10px;height:10px;background:#e6e6e6"></div><div class="r" style="left:1460px;top:120px;width:10px;height:10px;background:#9098a4"></div><div class="r" style="left:1470px;top:120px;width:10px;height:10px;background:#c4c4cc"></div><div class="r" style="left:1480px;top:120px;width:10px;height:10px;background:#e6e6e6"></div><div class="r" style="left:1490px;top:120px;width:10px;height:10px;background:#e6e6e6"></div><div class="r" style="left:1500px;top:120px;width:10px;height:10px;background:#e6e6e6"></div><div class="r" style="left:1510px;top:120px;width:10px;height:10px;background:#e6e6e6"></div><div class="r" style="left:1520px;top:120px;width:10px;height:10px;background:#e6e6e6"></div><div class="r" style="left:1550px;top:120px;width:10px;height:10px;background:#e6e6e6"></div><div class="r" style="left:1560px;top:120px;width:10px;height:10px;background:#e6e6e6"></div><div class="r" style="left:1570px;top:120px;width:10px;height:10px;background:#e6e6e6"></div><div class="r" style="left:1580px;top:120px;width:10px;height:10px;background:#e6e6e6"></div><div class="r" style="left:1590px;top:120px;width:10px;height:10px;background:#e6e6e6"></div><div class="r" style="left:1600px;top:120px;width:10px;height:10px;background:#e6e6e6"></div><div class="r" style="left:1610px;top:120px;width:10px;height:10px;background:#e6e6e6"></div><div class="r" style="left:1620px;top:120px;width:10px;height:10px;background:#e6e6e6"></div><div class="r" style="left:1630px;top:120px;width:10px;height:10px;background:#e6e6e6"></div><div class="r" style="left:1640px;top:120px;width:10px;height:10px;background:#e6e6e6"></div><div class="r" style="left:1650px;top:120px;width:10px;height:10px;background:#e6e6e6"></div><div class="r" style="left:1660px;top:120px;width:10px;height:10px;background:#e6e6e6"></div><div class="r" style="left:1670px;top:120px;width:10px;height:10px;background:#e6e6e6"></div><div class="r" style="left:1680px;top:120px;width:10px;height:10px;background:#e6e6e6"></div><div class="r" style="left:1690px;top:120px;width:10px;height:10px;background:#e6e6e6"></div>
<svg class="r" style="left:1837px;top:111px" width="12" height="10"><path d="M1,1 L5,5 L1,9 M6,1 L10,5 L6,9" fill="none" stroke="#222" stroke-width="1.3"/></svg>
<div class="r" style="left:921px;top:133px;width:934px;height:899px;background:#000"></div>
<svg class="r" style="left:1260px;top:262px" width="260" height="260" viewBox="0 0 260 260"><circle cx="129.8" cy="130.4" r="117.6" fill="none" stroke="#40ccd8" stroke-width="4"/><path d="M129.8,12.8 A117.6,117.6 0 0 1 203.2,38.5" fill="none" stroke="#ffffff" stroke-width="4.2"/><rect x="105" y="91" width="15" height="80" fill="#a8e8ee"/><rect x="140" y="91" width="15" height="80" fill="#a8e8ee"/></svg>
<div class="r" style="left:1px;top:0px;width:913px;height:26px;background:linear-gradient(#262523 0px,#363532 2px,#42403c 6px,#3c3b37 12px,#3b3a36 24px,#2f2e2b 26px);border-radius:5px 5px 0 0"></div>
<div class="r" style="left:8.9px;top:5px;width:15px;height:15px;border-radius:50%;background:linear-gradient(#62615c,#55544f);box-shadow:inset 0 0 0 1px rgba(0,0,0,0.15)"></div>
<div class="r" style="left:27.8px;top:5px;width:15px;height:15px;border-radius:50%;background:linear-gradient(#62615c,#55544f);box-shadow:inset 0 0 0 1px rgba(0,0,0,0.15)"></div>
<div class="r" style="left:46.8px;top:5px;width:15px;height:15px;border-radius:50%;background:linear-gradient(#62615c,#55544f);box-shadow:inset 0 0 0 1px rgba(0,0,0,0.15)"></div>
<svg class="r" style="left:0;top:0" width="70" height="26"><path d="M13.6,9.7 L19.2,15.3 M19.2,9.7 L13.6,15.3" stroke="#3d3c38" stroke-width="1.2"/><line x1="31.6" y1="12.5" x2="39" y2="12.5" stroke="#3d3c38" stroke-width="1.3"/><rect x="51" y="9.2" width="6.6" height="6.6" fill="none" stroke="#3d3c38" stroke-width="1.2"/></svg>
<div class="t" style="left:74.4px;top:6.23px;font-size:13px;line-height:14.52px;color:#a19f98;font-weight:700;font-family:'Liberation Sans', sans-serif;transform:scaleX(1.1634);transform-origin:0 0;">Contrôle du volume</div>
<div class="r" style="left:1px;top:26px;width:913px;height:494px;background:#f2f1f0"></div>
<div class="r" style="left:1px;top:26px;width:913px;height:1px;background:#fbfbfa"></div>
<div class="r" style="left:893px;top:26px;width:21px;height:494px;background:linear-gradient(90deg,rgba(0,0,0,0) 0,rgba(0,0,0,0.055) 100%)"></div>
<div class="r" style="left:1px;top:484px;width:913px;height:36px;background:linear-gradient(rgba(0,0,0,0) 0,rgba(0,0,0,0.025) 40%,rgba(0,0,0,0.07) 75%,rgba(0,0,0,0.17) 100%)"></div>
<div class="r" style="left:13px;top:38px;width:67px;height:26px;box-sizing:border-box;border:1px solid #c9c8c5;border-bottom:none;border-radius:4px 4px 0 0;background:#f3f2f1"></div>
<div class="r" style="left:80px;top:63px;width:823px;height:1px;background:#cfceca"></div>
<div class="r" style="left:203px;top:40px;width:1px;height:23px;background:#dddcd9"></div>
<div class="r" style="left:377px;top:40px;width:1px;height:23px;background:#dddcd9"></div>
<div class="r" style="left:550px;top:40px;width:1px;height:23px;background:#dddcd9"></div>
<div class="r" style="left:662px;top:40px;width:1px;height:23px;background:#dddcd9"></div>
<div class="t" style="left:21.3px;top:45.53px;font-size:14px;line-height:15.64px;color:#4c4c4c;font-weight:400;font-family:'Liberation Sans', sans-serif;transform:scaleX(1.1071);transform-origin:0 0;">Lecture</div>
<div class="t" style="left:87.8px;top:45.53px;font-size:14px;line-height:15.64px;color:#4c4c4c;font-weight:400;font-family:'Liberation Sans', sans-serif;transform:scaleX(1.1376);transform-origin:0 0;">Enregistrement</div>
<div class="t" style="left:210.8px;top:45.53px;font-size:14px;line-height:15.64px;color:#4c4c4c;font-weight:400;font-family:'Liberation Sans', sans-serif;transform:scaleX(1.1043);transform-origin:0 0;">Périphériques de sortie</div>
<div class="t" style="left:384.9px;top:45.53px;font-size:14px;line-height:15.64px;color:#4c4c4c;font-weight:400;font-family:'Liberation Sans', sans-serif;transform:scaleX(1.1179);transform-origin:0 0;">Périphériques d&#x27;entrée</div>
<div class="t" style="left:557.3px;top:45.53px;font-size:14px;line-height:15.64px;color:#4c4c4c;font-weight:400;font-family:'Liberation Sans', sans-serif;transform:scaleX(1.1528);transform-origin:0 0;">Configuration</div>
<svg class="r" style="left:33px;top:88px" width="25" height="25" viewBox="0 0 25 25"><path d="M5,10.6 Q8.5,8 12.7,7.6" stroke="#4a78c0" stroke-width="1.3" fill="none" stroke-linecap="round"/><rect x="13.9" y="7" width="2.1" height="2.2" fill="#d40000"/><path d="M8.6,12.8 Q10.5,11.2 12.3,11.2 Q13.7,10.3 15.3,12.2 Q16.8,13 16.8,14.5 L16.7,17.8 Q16.6,19.6 14.5,19.8 L10.5,19.8 Q8.3,19.6 8.3,17.8 Z" fill="#fafafa" stroke="#858784" stroke-width="1"/><rect x="10" y="15" width="5.6" height="2.3" fill="#cfd1ce"/></svg>
<div class="t" style="left:61.2px;top:95.33px;font-size:14px;line-height:15.64px;color:#4c4c4c;font-weight:400;font-family:'Liberation Sans', sans-serif;transform:scaleX(1.0395);transform-origin:0 0;">Sons système</div>
<svg class="r" style="left:854px;top:93px" width="18" height="17" viewBox="0 0 18 17"><defs><linearGradient id="sp" x1="0" x2="1"><stop offset="0" stop-color="#bdbdbd"/><stop offset="0.5" stop-color="#3a3a3a"/><stop offset="1" stop-color="#111"/></linearGradient></defs><path d="M1,5.5 L4,5.5 L9,1 L9,16 L4,11.5 L1,11.5 Z" fill="url(#sp)" stroke="#222" stroke-width="0.8"/><line x1="11" y1="8.5" x2="17" y2="8.5" stroke="#888" stroke-width="1" stroke-dasharray="1.2,1.3"/></svg>
<div class="r" style="left:37px;top:129px;width:738px;height:4px;box-sizing:border-box;border-radius:3px;background:#dfdfde;border:1px solid #c4c4c3"></div>
<div class="r" style="left:44px;top:136px;width:1px;height:5px;background:#cfcecb"></div>
<svg class="r" style="left:511.0px;top:122px" width="14" height="18" viewBox="-1 -1 14 18"><defs><linearGradient id="tg" x1="0" y1="0" x2="0" y2="1"><stop offset="0" stop-color="#fdfdfc"/><stop offset="1" stop-color="#e4e3e1"/></linearGradient></defs><path d="M0.5,4 Q0.5,0.5 4,0.5 L8,0.5 Q11.5,0.5 11.5,4 L11.5,10 L6.0,15.5 L0.5,10 Z" fill="url(#tg)" stroke="#a7a6a2" stroke-width="1"/></svg>
<div class="t" style="left:37.5px;top:142.44px;font-size:13px;line-height:14.52px;color:#4c4c4c;font-weight:400;font-family:'Liberation Sans', sans-serif;transform:scaleX(0.9930);transform-origin:0 0;">Muet</div>
<div class="t" style="left:486.8px;top:142.24px;font-size:13px;line-height:14.52px;color:#4c4c4c;font-weight:400;font-family:'Liberation Sans', sans-serif;transform:scaleX(0.9104);transform-origin:0 0;">100% (0dB)</div>
<div class="t" style="left:789.7px;top:122.04px;font-size:13px;line-height:14.52px;color:#4c4c4c;font-weight:400;font-family:'Liberation Sans', sans-serif;transform:scaleX(0.9179);transform-origin:0 0;">100% (0,00dB)</div>
<div class="r" style="left:25px;top:167px;width:865px;height:1px;background:#dcdbd8"></div>
<svg class="r" style="left:33px;top:182px" width="25" height="25" viewBox="0 0 25 25"><defs><radialGradient id="ffo" cx="0.5" cy="0.4" r="0.6"><stop offset="0" stop-color="#f08a28"/><stop offset="1" stop-color="#d8401c"/></radialGradient><linearGradient id="ffb" x1="0.3" y1="0" x2="0.7" y2="1"><stop offset="0" stop-color="#38b4e8"/><stop offset="0.6" stop-color="#1a60b0"/><stop offset="1" stop-color="#1a2a68"/></linearGradient></defs><circle cx="11.9" cy="12.6" r="7.3" fill="url(#ffo)"/><path d="M18.6,10 Q19.8,14 17.8,17 Q16,19 13,19.6 L15.5,16.5 Q17.6,13.5 17,9.5Z" fill="#f8d020"/><path d="M7.5,7.2 Q10,5.3 13,5.5 Q16.5,6 17.2,9.5 Q17.8,13 16.3,15.2 Q14.5,17.2 12.3,16.8 Q10.5,16.6 10,15.5 Q12.5,15.8 13.3,14.3 Q11.3,13.5 10.6,12.2 Q11.6,10.8 10.4,9.5 Q9.2,8.3 7.5,7.2Z" fill="url(#ffb)"/></svg>
<div class="t" style="left:59.6px;top:188.03px;font-size:14px;line-height:15.64px;color:#4c4c4c;font-weight:700;font-family:'Liberation Sans', sans-serif;transform:scaleX(1.0712);transform-origin:0 0;">Firefox</div>
<div class="t" style="left:111.0px;top:188.03px;font-size:14px;line-height:15.64px;color:#4c4c4c;font-weight:400;font-family:'Liberation Sans', sans-serif;transform:scaleX(1.1087);transform-origin:0 0;">: AudioStream</div>
<svg class="r" style="left:821px;top:186px" width="18" height="17" viewBox="0 0 18 17"><defs><linearGradient id="sp" x1="0" x2="1"><stop offset="0" stop-color="#bdbdbd"/><stop offset="0.5" stop-color="#3a3a3a"/><stop offset="1" stop-color="#111"/></linearGradient></defs><path d="M1,5.5 L4,5.5 L9,1 L9,16 L4,11.5 L1,11.5 Z" fill="url(#sp)" stroke="#222" stroke-width="0.8"/><line x1="11" y1="8.5" x2="17" y2="8.5" stroke="#888" stroke-width="1" stroke-dasharray="1.2,1.3"/></svg>
<div class="r" style="left:849px;top:182px;width:28px;height:25px;box-sizing:border-box;border:1px solid #b5b4b0;border-radius:4px;background:linear-gradient(#e9e8e6,#d6d5d2)"></div>
<svg class="r" style="left:855px;top:186px" width="16" height="17" viewBox="0 0 16 17"><path d="M4.5,8 L4.5,5.5 Q4.5,2 8,2 Q11.5,2 11.5,5.5 L11.5,8" fill="none" stroke="#c9c5bd" stroke-width="1.6"/><defs><linearGradient id="lk" x1="0" y1="0" x2="0" y2="1"><stop offset="0" stop-color="#e8d39a"/><stop offset="1" stop-color="#b59450"/></linearGradient></defs><rect x="2.5" y="8" width="11" height="8" rx="1" fill="url(#lk)" stroke="#9b7d3e" stroke-width="0.7"/></svg>
<div class="r" style="left:37px;top:222px;width:741px;height:4px;box-sizing:border-box;border-radius:3px;background:#dfdfde;border:1px solid #c4c4c3"></div>
<div class="r" style="left:44px;top:229px;width:1px;height:5px;background:#cfcecb"></div>
<div class="r" style="left:520px;top:229px;width:1px;height:5px;background:#cfcecb"></div>
<svg class="r" style="left:479.0px;top:215px" width="14" height="18" viewBox="-1 -1 14 18"><defs><linearGradient id="tg" x1="0" y1="0" x2="0" y2="1"><stop offset="0" stop-color="#fdfdfc"/><stop offset="1" stop-color="#e4e3e1"/></linearGradient></defs><path d="M0.5,4 Q0.5,0.5 4,0.5 L8,0.5 Q11.5,0.5 11.5,4 L11.5,10 L6.0,15.5 L0.5,10 Z" fill="url(#tg)" stroke="#a7a6a2" stroke-width="1"/></svg>
<div class="t" style="left:37.5px;top:235.24px;font-size:13px;line-height:14.52px;color:#4c4c4c;font-weight:400;font-family:'Liberation Sans', sans-serif;transform:scaleX(0.9930);transform-origin:0 0;">Muet</div>
<div class="t" style="left:488.8px;top:234.74px;font-size:13px;line-height:14.52px;color:#4c4c4c;font-weight:400;font-family:'Liberation Sans', sans-serif;transform:scaleX(0.9104);transform-origin:0 0;">100% (0dB)</div>
<div class="t" style="left:792.0px;top:215.04px;font-size:13px;line-height:14.52px;color:#4c4c4c;font-weight:400;font-family:'Liberation Sans', sans-serif;transform:scaleX(0.9222);transform-origin:0 0;">93% (-1,94dB)</div>
<div class="r" style="left:38px;top:257px;width:839px;height:12px;box-sizing:border-box;border:1px solid #b4b3b0;border-radius:4px;background:linear-gradient(#cfcecb,#e2e1de)"></div>
<div class="r" style="left:39px;top:258px;width:137px;height:10px;border-radius:4px;background:linear-gradient(#f38a5c,#e9683a)"></div>
<div class="r" style="left:25px;top:282px;width:865px;height:1px;background:#dcdbd8"></div>
<div class="t" style="left:351.5px;top:473.83px;font-size:14px;line-height:15.64px;color:#4c4c4c;font-weight:700;font-family:'Liberation Sans', sans-serif;transform:scaleX(1.0708);transform-origin:0 0;">Afficher :</div>
<div class="r" style="left:425px;top:464px;width:464px;height:31px;box-sizing:border-box;border:1px solid #b8b7b3;border-radius:4px;background:linear-gradient(#f5f4f3,#ecebe9)"></div>
<div class="t" style="left:433.3px;top:473.83px;font-size:14px;line-height:15.64px;color:#4c4c4c;font-weight:400;font-family:'Liberation Sans', sans-serif;transform:scaleX(1.1286);transform-origin:0 0;">Applications</div>
<svg class="r" style="left:868px;top:476px" width="12" height="7"><path d="M0.5,0.5 L11,0.5 L5.75,6Z" fill="#4c4c4c"/></svg>
<div class="r" style="left:4px;top:520px;width:906px;height:51px;background:linear-gradient(#4a4943 0,#5a5850 1.5px,#4a4842 12px,#3c3b37 27px,#3c3b37 100%);border-radius:6px 6px 0 0"></div>
<div class="r" style="left:12px;top:527px;width:15px;height:15px;border-radius:50%;background:radial-gradient(circle at 50% 35%,#f58a5a,#df4a1a);box-shadow:0 0 0 0.5px rgba(0,0,0,0.3)"></div>
<div class="r" style="left:31.0px;top:527px;width:15px;height:15px;border-radius:50%;background:linear-gradient(#85847e,#64635e);box-shadow:0 0 0 0.5px rgba(0,0,0,0.3)"></div>
<div class="r" style="left:50.0px;top:527px;width:15px;height:15px;border-radius:50%;background:linear-gradient(#85847e,#64635e);box-shadow:0 0 0 0.5px rgba(0,0,0,0.3)"></div>
<svg class="r" style="left:0;top:520px" width="70" height="27"><path d="M16.7,11.5 L22.3,17.1 M22.3,11.5 L16.7,17.1" stroke="#3c2a20" stroke-width="1.3"/><line x1="34.8" y1="14.5" x2="42.2" y2="14.5" stroke="#3c3b37" stroke-width="1.3"/><rect x="54.3" y="11.2" width="6.6" height="6.6" fill="none" stroke="#3c3b37" stroke-width="1.2"/></svg>
<div class="t" style="left:77.2px;top:527.83px;font-size:14px;line-height:15.64px;color:#dfdbd2;font-weight:700;font-family:'Liberation Sans', sans-serif;transform:scaleX(1.0824);transform-origin:0 0;">Audacity</div>
<div class="t" style="left:11.3px;top:553.03px;font-size:14px;line-height:15.64px;color:#dfdbd2;font-weight:400;font-family:'Liberation Sans', sans-serif;transform:scaleX(1.0783);transform-origin:0 0;">Fichier</div>
<div class="t" style="left:71.5px;top:553.03px;font-size:14px;line-height:15.64px;color:#dfdbd2;font-weight:400;font-family:'Liberation Sans', sans-serif;transform:scaleX(1.1330);transform-origin:0 0;">Edition</div>
<div class="t" style="left:135.5px;top:553.03px;font-size:14px;line-height:15.64px;color:#dfdbd2;font-weight:400;font-family:'Liberation Sans', sans-serif;transform:scaleX(1.1459);transform-origin:0 0;">Affichage</div>
<div class="t" style="left:216.7px;top:553.03px;font-size:14px;line-height:15.64px;color:#dfdbd2;font-weight:400;font-family:'Liberation Sans', sans-serif;transform:scaleX(1.1163);transform-origin:0 0;">Transport</div>
<div class="t" style="left:297.8px;top:553.03px;font-size:14px;line-height:15.64px;color:#dfdbd2;font-weight:400;font-family:'Liberation Sans', sans-serif;transform:scaleX(1.0334);transform-origin:0 0;">Pistes</div>
<div class="t" style="left:352.8px;top:553.03px;font-size:14px;line-height:15.64px;color:#dfdbd2;font-weight:400;font-family:'Liberation Sans', sans-serif;transform:scaleX(1.0436);transform-origin:0 0;">Générer</div>
<div class="t" style="left:421.3px;top:553.03px;font-size:14px;line-height:15.64px;color:#dfdbd2;font-weight:400;font-family:'Liberation Sans', sans-serif;transform:scaleX(1.1508);transform-origin:0 0;">Effets</div>
<div class="t" style="left:477.3px;top:553.03px;font-size:14px;line-height:15.64px;color:#dfdbd2;font-weight:400;font-family:'Liberation Sans', sans-serif;transform:scaleX(1.0520);transform-origin:0 0;">Analyse</div>
<div class="t" style="left:544.2px;top:553.03px;font-size:14px;line-height:15.64px;color:#dfdbd2;font-weight:400;font-family:'Liberation Sans', sans-serif;transform:scaleX(1.0991);transform-origin:0 0;">Aide</div>
<div class="r" style="left:4px;top:571px;width:906px;height:391px;background:#f8f8f6"></div>
<div class="r" style="left:4px;top:627px;width:906px;height:1.2px;background:#a6a6a6"></div>
<div class="r" style="left:4px;top:628.2px;width:906px;height:1px;background:#ffffff"></div>
<div class="r" style="left:4px;top:654.3px;width:906px;height:1.6px;background:#a8a8a8"></div>
<div class="r" style="left:4px;top:655.9px;width:906px;height:1px;background:#ffffff"></div>
<div class="r" style="left:4px;top:682.6px;width:906px;height:1.4px;background:#a8a8a8"></div>
<div class="r" style="left:4px;top:684px;width:906px;height:1px;background:#ffffff"></div>
<div class="r" style="left:8px;top:577px;width:4px;height:1px;background:#8c8c8c"></div><div class="r" style="left:8px;top:581px;width:4px;height:1px;background:#8c8c8c"></div><div class="r" style="left:8px;top:585px;width:4px;height:1px;background:#8c8c8c"></div><div class="r" style="left:8px;top:589px;width:4px;height:1px;background:#8c8c8c"></div><div class="r" style="left:8px;top:593px;width:4px;height:1px;background:#8c8c8c"></div><div class="r" style="left:8px;top:597px;width:4px;height:1px;background:#8c8c8c"></div><div class="r" style="left:8px;top:601px;width:4px;height:1px;background:#8c8c8c"></div><div class="r" style="left:8px;top:605px;width:4px;height:1px;background:#8c8c8c"></div><div class="r" style="left:8px;top:609px;width:4px;height:1px;background:#8c8c8c"></div><div class="r" style="left:8px;top:613px;width:4px;height:1px;background:#8c8c8c"></div><div class="r" style="left:8px;top:617px;width:4px;height:1px;background:#8c8c8c"></div><div class="r" style="left:8px;top:621px;width:4px;height:1px;background:#8c8c8c"></div>
<div class="r" style="left:14px;top:571px;width:1px;height:56px;background:#a4a4a4"></div>
<div class="r" style="left:27.299999999999997px;top:582px;width:36px;height:36px;border-radius:50%;background:radial-gradient(circle at 40% 40%,#ececec 0,#f4f4f4 55%,#f8f8f8 100%);box-shadow:2px 3px 3px rgba(0,0,0,0.28),-2px -2px 3px rgba(255,255,255,0.9)"></div>
<div class="r" style="left:77.3px;top:582px;width:36px;height:36px;border-radius:50%;background:radial-gradient(circle at 40% 40%,#ececec 0,#f4f4f4 55%,#f8f8f8 100%);box-shadow:2px 3px 3px rgba(0,0,0,0.28),-2px -2px 3px rgba(255,255,255,0.9)"></div>
<div class="r" style="left:127.30000000000001px;top:582px;width:36px;height:36px;border-radius:50%;background:radial-gradient(circle at 40% 40%,#ececec 0,#f4f4f4 55%,#f8f8f8 100%);box-shadow:2px 3px 3px rgba(0,0,0,0.28),-2px -2px 3px rgba(255,255,255,0.9)"></div>
<div class="r" style="left:177.3px;top:582px;width:36px;height:36px;border-radius:50%;background:radial-gradient(circle at 40% 40%,#ececec 0,#f4f4f4 55%,#f8f8f8 100%);box-shadow:2px 3px 3px rgba(0,0,0,0.28),-2px -2px 3px rgba(255,255,255,0.9)"></div>
<div class="r" style="left:227.3px;top:582px;width:36px;height:36px;border-radius:50%;background:radial-gradient(circle at 40% 40%,#ececec 0,#f4f4f4 55%,#f8f8f8 100%);box-shadow:2px 3px 3px rgba(0,0,0,0.28),-2px -2px 3px rgba(255,255,255,0.9)"></div>
<div class="r" style="left:280.0px;top:577.5px;width:39px;height:39px;border-radius:50%;background:#f4f4f4;box-shadow:inset 3px 3px 4px rgba(0,0,0,0.28),inset -2px -2px 3px rgba(255,255,255,0.9),2px 2px 3px rgba(255,255,255,0.8)"></div>
<div class="r" style="left:38px;top:593px;width:5px;height:12px;background:#4462f2;border-radius:1px"></div>
<div class="r" style="left:46px;top:593px;width:5px;height:12px;background:#4462f2;border-radius:1px"></div>
<svg class="r" style="left:86px;top:590px" width="20" height="19"><path d="M2,1.5 L17,9.25 L2,17Z" fill="#89a98a"/></svg>
<div class="r" style="left:139px;top:593px;width:13px;height:13px;background:linear-gradient(#f0c060,#e0ae4e);box-shadow:1px 1px 0 #b08838"></div>
<svg class="r" style="left:186px;top:590px" width="20" height="19"><rect x="2.8" y="2" width="1.4" height="14" fill="#a898b8"/><path d="M4,9 L10,2.5 L10,15.5Z M9,9 L16,2.5 L16,15.5Z" fill="#a898b8"/></svg>
<svg class="r" style="left:237px;top:590px" width="20" height="19"><rect x="13.8" y="2" width="1.4" height="14" fill="#a898b8"/><path d="M2,2.5 L9,9 L2,15.5Z M8,2.5 L14,9 L8,15.5Z" fill="#a898b8"/></svg>
<div class="r" style="left:296.5px;top:592px;width:15.5px;height:15.5px;border-radius:50%;background:radial-gradient(circle at 45% 35%,#cf8a8a,#b86c6c);box-shadow:0.5px 1px 0 #8c4c4c"></div>
<div class="r" style="left:332px;top:571px;width:1px;height:56px;background:#b0b0b0"></div>
<div class="r" style="left:334px;top:577px;width:4px;height:1px;background:#8c8c8c"></div><div class="r" style="left:334px;top:581px;width:4px;height:1px;background:#8c8c8c"></div><div class="r" style="left:334px;top:585px;width:4px;height:1px;background:#8c8c8c"></div><div class="r" style="left:334px;top:589px;width:4px;height:1px;background:#8c8c8c"></div><div class="r" style="left:334px;top:593px;width:4px;height:1px;background:#8c8c8c"></div><div class="r" style="left:334px;top:597px;width:4px;height:1px;background:#8c8c8c"></div><div class="r" style="left:334px;top:601px;width:4px;height:1px;background:#8c8c8c"></div><div class="r" style="left:334px;top:605px;width:4px;height:1px;background:#8c8c8c"></div><div class="r" style="left:334px;top:609px;width:4px;height:1px;background:#8c8c8c"></div><div class="r" style="left:334px;top:613px;width:4px;height:1px;background:#8c8c8c"></div><div class="r" style="left:334px;top:617px;width:4px;height:1px;background:#8c8c8c"></div><div class="r" style="left:334px;top:621px;width:4px;height:1px;background:#8c8c8c"></div>
<div class="r" style="left:340px;top:571px;width:1px;height:56px;background:#b0b0b0"></div>
<div class="r" style="left:344px;top:571px;width:27px;height:27px;box-sizing:border-box;border-right:1px solid #d0d0ce;border-bottom:1px solid #d0d0ce"></div>
<div class="r" style="left:371px;top:571px;width:27px;height:27px;box-sizing:border-box;border-right:1px solid #d0d0ce;border-bottom:1px solid #d0d0ce"></div>
<div class="r" style="left:398px;top:571px;width:27px;height:27px;box-sizing:border-box;border-right:1px solid #d0d0ce;border-bottom:1px solid #d0d0ce"></div>
<div class="r" style="left:344px;top:599px;width:27px;height:27px;box-sizing:border-box;border-right:1px solid #d0d0ce;border-bottom:1px solid #d0d0ce"></div>
<div class="r" style="left:371px;top:599px;width:27px;height:27px;box-sizing:border-box;border-right:1px solid #d0d0ce;border-bottom:1px solid #d0d0ce"></div>
<div class="r" style="left:398px;top:599px;width:27px;height:27px;box-sizing:border-box;border-right:1px solid #d0d0ce;border-bottom:1px solid #d0d0ce"></div>
<div class="r" style="left:344px;top:571px;width:27px;height:27px;box-sizing:border-box;border-left:1.5px solid #555;border-top:1px solid #888;background:#f4f4f2"></div>
<svg class="r" style="left:344px;top:571px" width="84" height="56"><path d="M11,7 H17 M14,7 V21 M11,21 H17" stroke="#111" stroke-width="1.4" fill="none"/><path d="M37.5,6.5 H46.5 L42,11Z M37.5,22 H46.5 L42,17Z" fill="none" stroke="#111" stroke-width="1"/><path d="M34.5,16 L41,15 L52,11.5" stroke="#5a5ae0" stroke-width="1.8" fill="none"/><path d="M62,21 L64,15 L71,6.5 L74,9 L67,17.5 Z" fill="#fff" stroke="#111" stroke-width="1.3"/><circle cx="17" cy="38" r="5" fill="#fff" stroke="#111" stroke-width="1.5"/><line x1="13.5" y1="41.5" x2="9" y2="47.5" stroke="#111" stroke-width="2.2"/><path d="M35,42 H49 M35,42 L38.5,39 M35,42 L38.5,45 M49,42 L45.5,39 M49,42 L45.5,45" stroke="#111" stroke-width="1.8" fill="none"/><path d="M69,35 V49 M63,38.5 L75,45.5 M75,38.5 L63,45.5" stroke="#111" stroke-width="2.2"/></svg>
<div class="r" style="left:426px;top:571px;width:1px;height:56px;background:#b0b0b0"></div>
<div class="r" style="left:430px;top:575px;width:4px;height:1px;background:#8c8c8c"></div><div class="r" style="left:430px;top:579px;width:4px;height:1px;background:#8c8c8c"></div><div class="r" style="left:430px;top:583px;width:4px;height:1px;background:#8c8c8c"></div><div class="r" style="left:430px;top:587px;width:4px;height:1px;background:#8c8c8c"></div><div class="r" style="left:430px;top:591px;width:4px;height:1px;background:#8c8c8c"></div>
<div class="r" style="left:430px;top:603px;width:4px;height:1px;background:#8c8c8c"></div><div class="r" style="left:430px;top:607px;width:4px;height:1px;background:#8c8c8c"></div><div class="r" style="left:430px;top:611px;width:4px;height:1px;background:#8c8c8c"></div><div class="r" style="left:430px;top:615px;width:4px;height:1px;background:#8c8c8c"></div><div class="r" style="left:430px;top:619px;width:4px;height:1px;background:#8c8c8c"></div>
<div class="r" style="left:437px;top:571px;width:1px;height:56px;background:#d0d0d0"></div>
<svg class="r" style="left:441.5px;top:575.5px" width="20" height="20" viewBox="0 0 20 20"><line x1="1" y1="19" x2="11" y2="8" stroke="#111" stroke-width="1.6"/><ellipse cx="14" cy="5.5" rx="5" ry="4.4" transform="rotate(-40 14 5.5)" fill="#bbb" stroke="#111" stroke-width="1.4"/><path d="M10.8,4.5 L15.5,8.6 M12.3,3 L17,7.1 M14,1.8 L18,5.4" stroke="#222" stroke-width="1"/></svg>
<svg class="r" style="left:452.5px;top:591px" width="9" height="5"><path d="M0.5,0.5 H8 L4.25,4.5Z" fill="#111"/></svg>
<svg class="r" style="left:443px;top:603.5px" width="14" height="14" viewBox="0 0 14 14"><path d="M1,5 L3.5,5 L7,1.5 L7,12.5 L3.5,9 L1,9Z" fill="#111"/><path d="M9,4.5 Q10.5,7 9,9.5 M11,2.8 Q13.5,7 11,11.2" stroke="#111" stroke-width="1.3" fill="none"/></svg>
<svg class="r" style="left:452.5px;top:619px" width="9" height="5"><path d="M0.5,0.5 H8 L4.25,4.5Z" fill="#111"/></svg>
<div class="t" style="left:462.3px;top:573.80px;font-size:10.5px;line-height:11.73px;color:#111;font-weight:400;font-family:'Liberation Sans', sans-serif;transform:scaleX(1.1265);transform-origin:0 0;">G</div>
<div class="t" style="left:462.3px;top:588.30px;font-size:10.5px;line-height:11.73px;color:#111;font-weight:400;font-family:'Liberation Sans', sans-serif;transform:scaleX(1.2132);transform-origin:0 0;">D</div>
<div class="t" style="left:462.3px;top:601.30px;font-size:10.5px;line-height:11.73px;color:#111;font-weight:400;font-family:'Liberation Sans', sans-serif;transform:scaleX(1.1265);transform-origin:0 0;">G</div>
<div class="t" style="left:462.3px;top:615.80px;font-size:10.5px;line-height:11.73px;color:#111;font-weight:400;font-family:'Liberation Sans', sans-serif;transform:scaleX(1.2132);transform-origin:0 0;">D</div>
<div class="r" style="left:474px;top:572px;width:405px;height:27px;background:#fbfbfb"></div>
<div class="r" style="left:474px;top:572px;width:405px;height:1px;background:#b8b8b8"></div>
<div class="r" style="left:474px;top:573px;width:370px;height:10.3px;background:linear-gradient(90deg,#78d878 0,#78d878 87.3%,#ffff00 97.8%,#f8c800 100%)"></div>
<div class="r" style="left:474px;top:586.8px;width:370px;height:10.8px;background:linear-gradient(90deg,#78d878 0,#78d878 87.3%,#ffff00 97.8%,#f8c800 100%)"></div>
<div class="r" style="left:474px;top:585.3px;width:405px;height:1.2px;background:#b8b8b8"></div>
<div class="r" style="left:474px;top:598.5px;width:436px;height:1.6px;background:#c0c0c0"></div>
<div class="r" style="left:876px;top:573px;width:1.5px;height:25px;background:#5050f0"></div>
<div class="r" style="left:880px;top:573px;width:2px;height:25px;background:#ee2020"></div>
<div class="r" style="left:474px;top:600px;width:405px;height:26px;background:#fbfbfb"></div>
<div class="r" style="left:474px;top:614px;width:405px;height:1.3px;background:#c4c4c4"></div>
<div class="r" style="left:474px;top:625px;width:405px;height:1px;background:#c8c8c8"></div>
<div class="r" style="left:878px;top:600px;width:1px;height:26px;background:#c8c8c8"></div>
<div class="r" style="left:884px;top:571px;width:1px;height:56px;background:#c8c8c8"></div>
<div class="r" style="left:887px;top:571px;width:1px;height:56px;background:#c8c8c8"></div>
<div class="t" style="left:484.6px;top:580.02px;font-size:11.8px;line-height:13.18px;color:#111;font-weight:400;font-family:'Liberation Sans', sans-serif;transform:scaleX(1.2195);transform-origin:0 0;-webkit-text-stroke:0.25px #111;">-57</div>
<div class="t" style="left:484.6px;top:608.02px;font-size:11.8px;line-height:13.18px;color:#111;font-weight:400;font-family:'Liberation Sans', sans-serif;transform:scaleX(1.2195);transform-origin:0 0;-webkit-text-stroke:0.25px #111;">-57</div>
<div class="t" style="left:544.8px;top:580.02px;font-size:11.8px;line-height:13.18px;color:#111;font-weight:400;font-family:'Liberation Sans', sans-serif;transform:scaleX(1.2195);transform-origin:0 0;-webkit-text-stroke:0.25px #111;">-48</div>
<div class="t" style="left:544.8px;top:608.02px;font-size:11.8px;line-height:13.18px;color:#111;font-weight:400;font-family:'Liberation Sans', sans-serif;transform:scaleX(1.2195);transform-origin:0 0;-webkit-text-stroke:0.25px #111;">-48</div>
<div class="t" style="left:584.6px;top:580.02px;font-size:11.8px;line-height:13.18px;color:#111;font-weight:400;font-family:'Liberation Sans', sans-serif;transform:scaleX(1.2195);transform-origin:0 0;-webkit-text-stroke:0.25px #111;">-42</div>
<div class="t" style="left:584.6px;top:608.02px;font-size:11.8px;line-height:13.18px;color:#111;font-weight:400;font-family:'Liberation Sans', sans-serif;transform:scaleX(1.2195);transform-origin:0 0;-webkit-text-stroke:0.25px #111;">-42</div>
<div class="t" style="left:625.1px;top:580.02px;font-size:11.8px;line-height:13.18px;color:#111;font-weight:400;font-family:'Liberation Sans', sans-serif;transform:scaleX(1.2195);transform-origin:0 0;-webkit-text-stroke:0.25px #111;">-36</div>
<div class="t" style="left:625.1px;top:608.02px;font-size:11.8px;line-height:13.18px;color:#111;font-weight:400;font-family:'Liberation Sans', sans-serif;transform:scaleX(1.2195);transform-origin:0 0;-webkit-text-stroke:0.25px #111;">-36</div>
<div class="t" style="left:665.6px;top:580.02px;font-size:11.8px;line-height:13.18px;color:#111;font-weight:400;font-family:'Liberation Sans', sans-serif;transform:scaleX(1.2195);transform-origin:0 0;-webkit-text-stroke:0.25px #111;">-30</div>
<div class="t" style="left:665.6px;top:608.02px;font-size:11.8px;line-height:13.18px;color:#111;font-weight:400;font-family:'Liberation Sans', sans-serif;transform:scaleX(1.2195);transform-origin:0 0;-webkit-text-stroke:0.25px #111;">-30</div>
<div class="t" style="left:705.6px;top:580.02px;font-size:11.8px;line-height:13.18px;color:#111;font-weight:400;font-family:'Liberation Sans', sans-serif;transform:scaleX(1.2195);transform-origin:0 0;-webkit-text-stroke:0.25px #111;">-24</div>
<div class="t" style="left:705.6px;top:608.02px;font-size:11.8px;line-height:13.18px;color:#111;font-weight:400;font-family:'Liberation Sans', sans-serif;transform:scaleX(1.2195);transform-origin:0 0;-webkit-text-stroke:0.25px #111;">-24</div>
<div class="t" style="left:745.6px;top:580.02px;font-size:11.8px;line-height:13.18px;color:#111;font-weight:400;font-family:'Liberation Sans', sans-serif;transform:scaleX(1.2195);transform-origin:0 0;-webkit-text-stroke:0.25px #111;">-18</div>
<div class="t" style="left:745.6px;top:608.02px;font-size:11.8px;line-height:13.18px;color:#111;font-weight:400;font-family:'Liberation Sans', sans-serif;transform:scaleX(1.2195);transform-origin:0 0;-webkit-text-stroke:0.25px #111;">-18</div>
<div class="t" style="left:785.6px;top:580.02px;font-size:11.8px;line-height:13.18px;color:#111;font-weight:400;font-family:'Liberation Sans', sans-serif;transform:scaleX(1.2195);transform-origin:0 0;-webkit-text-stroke:0.25px #111;">-12</div>
<div class="t" style="left:785.6px;top:608.02px;font-size:11.8px;line-height:13.18px;color:#111;font-weight:400;font-family:'Liberation Sans', sans-serif;transform:scaleX(1.2195);transform-origin:0 0;-webkit-text-stroke:0.25px #111;">-12</div>
<div class="t" style="left:811.2px;top:580.02px;font-size:11.8px;line-height:13.18px;color:#111;font-weight:400;font-family:'Liberation Sans', sans-serif;transform:scaleX(1.2866);transform-origin:0 0;-webkit-text-stroke:0.25px #111;">-9</div>
<div class="t" style="left:811.2px;top:608.02px;font-size:11.8px;line-height:13.18px;color:#111;font-weight:400;font-family:'Liberation Sans', sans-serif;transform:scaleX(1.2866);transform-origin:0 0;-webkit-text-stroke:0.25px #111;">-9</div>
<div class="t" style="left:831.8px;top:580.02px;font-size:11.8px;line-height:13.18px;color:#111;font-weight:400;font-family:'Liberation Sans', sans-serif;transform:scaleX(1.2866);transform-origin:0 0;-webkit-text-stroke:0.25px #111;">-6</div>
<div class="t" style="left:831.8px;top:608.02px;font-size:11.8px;line-height:13.18px;color:#111;font-weight:400;font-family:'Liberation Sans', sans-serif;transform:scaleX(1.2866);transform-origin:0 0;-webkit-text-stroke:0.25px #111;">-6</div>
<div class="t" style="left:851.2px;top:580.02px;font-size:11.8px;line-height:13.18px;color:#111;font-weight:400;font-family:'Liberation Sans', sans-serif;transform:scaleX(1.2866);transform-origin:0 0;-webkit-text-stroke:0.25px #111;">-3</div>
<div class="t" style="left:851.2px;top:608.02px;font-size:11.8px;line-height:13.18px;color:#111;font-weight:400;font-family:'Liberation Sans', sans-serif;transform:scaleX(1.2866);transform-origin:0 0;-webkit-text-stroke:0.25px #111;">-3</div>
<div class="t" style="left:868.1px;top:580.02px;font-size:11.8px;line-height:13.18px;color:#111;font-weight:400;font-family:'Liberation Sans', sans-serif;transform:scaleX(1.0666);transform-origin:0 0;-webkit-text-stroke:0.25px #111;">0</div>
<div class="t" style="left:868.1px;top:608.02px;font-size:11.8px;line-height:13.18px;color:#111;font-weight:400;font-family:'Liberation Sans', sans-serif;transform:scaleX(1.0666);transform-origin:0 0;-webkit-text-stroke:0.25px #111;">0</div>
<div class="r" style="left:476px;top:574px;width:1px;height:3.5px;background:#222"></div>
<div class="r" style="left:476px;top:601.5px;width:1px;height:3.5px;background:#222"></div>
<div class="r" style="left:496px;top:574px;width:1px;height:2px;background:#222"></div>
<div class="r" style="left:496px;top:601.5px;width:1px;height:2px;background:#222"></div>
<div class="r" style="left:516px;top:574px;width:1px;height:2px;background:#222"></div>
<div class="r" style="left:516px;top:601.5px;width:1px;height:2px;background:#222"></div>
<div class="r" style="left:536px;top:574px;width:1px;height:2px;background:#222"></div>
<div class="r" style="left:536px;top:601.5px;width:1px;height:2px;background:#222"></div>
<div class="r" style="left:556px;top:574px;width:1px;height:3.5px;background:#222"></div>
<div class="r" style="left:556px;top:601.5px;width:1px;height:3.5px;background:#222"></div>
<div class="r" style="left:576px;top:574px;width:1px;height:2px;background:#222"></div>
<div class="r" style="left:576px;top:601.5px;width:1px;height:2px;background:#222"></div>
<div class="r" style="left:596px;top:574px;width:1px;height:2px;background:#222"></div>
<div class="r" style="left:596px;top:601.5px;width:1px;height:2px;background:#222"></div>
<div class="r" style="left:616px;top:574px;width:1px;height:2px;background:#222"></div>
<div class="r" style="left:616px;top:601.5px;width:1px;height:2px;background:#222"></div>
<div class="r" style="left:636px;top:574px;width:1px;height:3.5px;background:#222"></div>
<div class="r" style="left:636px;top:601.5px;width:1px;height:3.5px;background:#222"></div>
<div class="r" style="left:656px;top:574px;width:1px;height:2px;background:#222"></div>
<div class="r" style="left:656px;top:601.5px;width:1px;height:2px;background:#222"></div>
<div class="r" style="left:676px;top:574px;width:1px;height:2px;background:#222"></div>
<div class="r" style="left:676px;top:601.5px;width:1px;height:2px;background:#222"></div>
<div class="r" style="left:696px;top:574px;width:1px;height:2px;background:#222"></div>
<div class="r" style="left:696px;top:601.5px;width:1px;height:2px;background:#222"></div>
<div class="r" style="left:716px;top:574px;width:1px;height:3.5px;background:#222"></div>
<div class="r" style="left:716px;top:601.5px;width:1px;height:3.5px;background:#222"></div>
<div class="r" style="left:736px;top:574px;width:1px;height:2px;background:#222"></div>
<div class="r" style="left:736px;top:601.5px;width:1px;height:2px;background:#222"></div>
<div class="r" style="left:756px;top:574px;width:1px;height:2px;background:#222"></div>
<div class="r" style="left:756px;top:601.5px;width:1px;height:2px;background:#222"></div>
<div class="r" style="left:776px;top:574px;width:1px;height:2px;background:#222"></div>
<div class="r" style="left:776px;top:601.5px;width:1px;height:2px;background:#222"></div>
<div class="r" style="left:796px;top:574px;width:1px;height:3.5px;background:#222"></div>
<div class="r" style="left:796px;top:601.5px;width:1px;height:3.5px;background:#222"></div>
<div class="r" style="left:816px;top:574px;width:1px;height:2px;background:#222"></div>
<div class="r" style="left:816px;top:601.5px;width:1px;height:2px;background:#222"></div>
<div class="r" style="left:836px;top:574px;width:1px;height:2px;background:#222"></div>
<div class="r" style="left:836px;top:601.5px;width:1px;height:2px;background:#222"></div>
<div class="r" style="left:856px;top:574px;width:1px;height:2px;background:#222"></div>
<div class="r" style="left:856px;top:601.5px;width:1px;height:2px;background:#222"></div>
<div class="r" style="left:876px;top:574px;width:1px;height:3.5px;background:#222"></div>
<div class="r" style="left:876px;top:601.5px;width:1px;height:3.5px;background:#222"></div>
<div class="r" style="left:8px;top:632px;width:4px;height:1px;background:#8c8c8c"></div><div class="r" style="left:8px;top:636px;width:4px;height:1px;background:#8c8c8c"></div><div class="r" style="left:8px;top:640px;width:4px;height:1px;background:#8c8c8c"></div><div class="r" style="left:8px;top:644px;width:4px;height:1px;background:#8c8c8c"></div><div class="r" style="left:8px;top:648px;width:4px;height:1px;background:#8c8c8c"></div>
<div class="r" style="left:14px;top:628px;width:1px;height:27px;background:#a4a4a4"></div>
<svg class="r" style="left:18px;top:632px" width="20" height="20" viewBox="0 0 20 20"><line x1="1" y1="19" x2="11" y2="8" stroke="#111" stroke-width="1.6"/><ellipse cx="14" cy="5.5" rx="5" ry="4.4" transform="rotate(-40 14 5.5)" fill="#bbb" stroke="#111" stroke-width="1.4"/><path d="M10.8,4.5 L15.5,8.6 M12.3,3 L17,7.1 M14,1.8 L18,5.4" stroke="#222" stroke-width="1"/></svg>
<div class="r" style="left:48px;top:646px;width:115px;height:1px;background:#a0a0a0"></div>
<div class="r" style="left:48px;top:635px;width:5px;height:1px;background:#111"></div>
<div class="r" style="left:158px;top:635px;width:6px;height:1px;background:#111"></div>
<div class="r" style="left:160.5px;top:632.5px;width:1px;height:6px;background:#111"></div>
<div class="r" style="left:48px;top:643.5px;width:1px;height:2px;background:#a8a8a8"></div>
<div class="r" style="left:59px;top:643.5px;width:1px;height:2px;background:#a8a8a8"></div>
<div class="r" style="left:70px;top:643.5px;width:1px;height:2px;background:#a8a8a8"></div>
<div class="r" style="left:81px;top:643.5px;width:1px;height:2px;background:#a8a8a8"></div>
<div class="r" style="left:92px;top:643.5px;width:1px;height:2px;background:#a8a8a8"></div>
<div class="r" style="left:103px;top:643.5px;width:1px;height:2px;background:#a8a8a8"></div>
<div class="r" style="left:114px;top:643.5px;width:1px;height:2px;background:#a8a8a8"></div>
<div class="r" style="left:125px;top:643.5px;width:1px;height:2px;background:#a8a8a8"></div>
<div class="r" style="left:136px;top:643.5px;width:1px;height:2px;background:#a8a8a8"></div>
<div class="r" style="left:147px;top:643.5px;width:1px;height:2px;background:#a8a8a8"></div>
<div class="r" style="left:158px;top:643.5px;width:1px;height:2px;background:#a8a8a8"></div>
<svg class="r" style="left:156px;top:637.5px" width="14" height="16" viewBox="0 0 14 16"><defs><linearGradient id="stg" x1="0" x2="1"><stop offset="0" stop-color="#d0d0e8"/><stop offset="1" stop-color="#9c9cc8"/></linearGradient></defs><path d="M1.5,4 Q1.5,1.5 4,1.5 L10,1.5 Q12.5,1.5 12.5,4 L12.5,10 L7,14.5 L1.5,10 Z" fill="url(#stg)" stroke="#55555e" stroke-width="1"/><path d="M1.8,3.6 Q2,1.3 4,1.2 L10,1.2 Q12,1.3 12.2,3.6" fill="none" stroke="#222" stroke-width="1.1"/><path d="M5.2,5.5 H8.8 M5.2,7.5 H8.8 M5.2,9.5 H8.8" stroke="#f4f4ff" stroke-width="0.9"/></svg>
<svg class="r" style="left:177px;top:634.5px" width="14" height="14" viewBox="0 0 14 14"><path d="M1,5 L3.5,5 L7,1.5 L7,12.5 L3.5,9 L1,9Z" fill="#111"/><path d="M9,4.5 Q10.5,7 9,9.5 M11,2.8 Q13.5,7 11,11.2" stroke="#111" stroke-width="1.3" fill="none"/></svg>
<div class="r" style="left:203px;top:646px;width:115px;height:1px;background:#a0a0a0"></div>
<div class="r" style="left:203px;top:635px;width:5px;height:1px;background:#111"></div>
<div class="r" style="left:313px;top:635px;width:6px;height:1px;background:#111"></div>
<div class="r" style="left:315.5px;top:632.5px;width:1px;height:6px;background:#111"></div>
<div class="r" style="left:203px;top:643.5px;width:1px;height:2px;background:#a8a8a8"></div>
<div class="r" style="left:214px;top:643.5px;width:1px;height:2px;background:#a8a8a8"></div>
<div class="r" style="left:225px;top:643.5px;width:1px;height:2px;background:#a8a8a8"></div>
<div class="r" style="left:236px;top:643.5px;width:1px;height:2px;background:#a8a8a8"></div>
<div class="r" style="left:247px;top:643.5px;width:1px;height:2px;background:#a8a8a8"></div>
<div class="r" style="left:258px;top:643.5px;width:1px;height:2px;background:#a8a8a8"></div>
<div class="r" style="left:269px;top:643.5px;width:1px;height:2px;background:#a8a8a8"></div>
<div class="r" style="left:280px;top:643.5px;width:1px;height:2px;background:#a8a8a8"></div>
<div class="r" style="left:291px;top:643.5px;width:1px;height:2px;background:#a8a8a8"></div>
<div class="r" style="left:302px;top:643.5px;width:1px;height:2px;background:#a8a8a8"></div>
<div class="r" style="left:313px;top:643.5px;width:1px;height:2px;background:#a8a8a8"></div>
<svg class="r" style="left:310.5px;top:637.5px" width="14" height="16" viewBox="0 0 14 16"><defs><linearGradient id="stg" x1="0" x2="1"><stop offset="0" stop-color="#d0d0e8"/><stop offset="1" stop-color="#9c9cc8"/></linearGradient></defs><path d="M1.5,4 Q1.5,1.5 4,1.5 L10,1.5 Q12.5,1.5 12.5,4 L12.5,10 L7,14.5 L1.5,10 Z" fill="url(#stg)" stroke="#55555e" stroke-width="1"/><path d="M1.8,3.6 Q2,1.3 4,1.2 L10,1.2 Q12,1.3 12.2,3.6" fill="none" stroke="#222" stroke-width="1.1"/><path d="M5.2,5.5 H8.8 M5.2,7.5 H8.8 M5.2,9.5 H8.8" stroke="#f4f4ff" stroke-width="0.9"/></svg>
<div class="r" style="left:327px;top:628px;width:1px;height:27px;background:#b0b0b0"></div>
<div class="r" style="left:330px;top:631px;width:4px;height:1px;background:#8c8c8c"></div><div class="r" style="left:330px;top:635px;width:4px;height:1px;background:#8c8c8c"></div><div class="r" style="left:330px;top:639px;width:4px;height:1px;background:#8c8c8c"></div><div class="r" style="left:330px;top:643px;width:4px;height:1px;background:#8c8c8c"></div><div class="r" style="left:330px;top:647px;width:4px;height:1px;background:#8c8c8c"></div>
<div class="r" style="left:337px;top:628px;width:1px;height:27px;background:#b0b0b0"></div>
<div class="r" style="left:339.2px;top:628px;width:1.3px;height:26px;background:#c4c4c2"></div>
<div class="r" style="left:366.7px;top:628px;width:1.3px;height:26px;background:#c4c4c2"></div>
<div class="r" style="left:393.6px;top:628px;width:1.3px;height:26px;background:#c4c4c2"></div>
<div class="r" style="left:420.6px;top:628px;width:1.3px;height:26px;background:#c4c4c2"></div>
<div class="r" style="left:447.5px;top:628px;width:1.3px;height:26px;background:#c4c4c2"></div>
<div class="r" style="left:474.5px;top:628px;width:1.3px;height:26px;background:#c4c4c2"></div>
<div class="r" style="left:489px;top:628px;width:1.3px;height:26px;background:#c4c4c2"></div>
<div class="r" style="left:515.3px;top:628px;width:1.3px;height:26px;background:#c4c4c2"></div>
<div class="r" style="left:542.3px;top:628px;width:1.3px;height:26px;background:#c4c4c2"></div>
<div class="r" style="left:556.6px;top:628px;width:1.3px;height:26px;background:#c4c4c2"></div>
<div class="r" style="left:583.3px;top:628px;width:1.3px;height:26px;background:#c4c4c2"></div>
<div class="r" style="left:597.8px;top:628px;width:1.3px;height:26px;background:#c4c4c2"></div>
<div class="r" style="left:624.5px;top:628px;width:1.3px;height:26px;background:#c4c4c2"></div>
<div class="r" style="left:651.3px;top:628px;width:1.3px;height:26px;background:#c4c4c2"></div>
<div class="r" style="left:678.2px;top:628px;width:1.3px;height:26px;background:#c4c4c2"></div>
<div class="r" style="left:705px;top:628px;width:1.3px;height:26px;background:#c4c4c2"></div>
<svg class="r" style="left:339px;top:628px" width="380" height="27"><path d="M3,11 H8 L9,8 L10,13 L11,8 L12,13 L13,9 L15,12 L17,9 L19,11 H24" stroke="#555" stroke-width="0.8" fill="none"/><path d="M17,5 L10,19 M13,8 L15,15" stroke="#222" stroke-width="1.1"/><circle cx="9.5" cy="20" r="2.3" fill="none" stroke="#5c5cb0" stroke-width="1.1"/><circle cx="15" cy="19" r="2.3" fill="none" stroke="#5c5cb0" stroke-width="1.1"/><rect x="31" y="7" width="12" height="10" fill="#999" stroke="#777" stroke-width="0.8"/><rect x="37" y="12" width="12" height="10" fill="#aaa" stroke="#5c5cb0" stroke-width="0.9"/><rect x="58" y="8" width="13" height="11" fill="#b8b898" stroke="#777" stroke-width="0.8"/><rect x="62" y="6" width="5" height="3" fill="#999"/><rect x="64" y="13" width="11" height="10" fill="#aaa" stroke="#5c5cb0" stroke-width="0.9"/><path d="M85,13.5 H90 M100,13.5 H105" stroke="#5c5cb0" stroke-width="1.1"/><path d="M91.5,6 V21 M100.5,6 V21" stroke="#333" stroke-width="1.2"/><path d="M92.5,13.5 Q93.5,7 94.5,13.5 T96.5,13.5 T98.5,13.5 T100,13.5" stroke="#5c5cb0" stroke-width="1" fill="none"/><path d="M92.5,13.5 Q93.5,20 94.5,13.5 M94.5,13.5 Q95.5,20 96.5,13.5 M96.5,13.5 Q97.5,20 98.5,13.5" stroke="#5c5cb0" stroke-width="1" fill="none"/><path d="M111.5,13.5 Q112.5,6 113.5,13.5 Q114.5,21 115.5,13.5 Q116.5,6 117.5,13.5 M128.5,13.5 Q129.5,6 130.5,13.5 Q131.5,21 132.5,13.5 Q133.5,6 134.5,13.5" stroke="#5c5cb0" stroke-width="1" fill="none"/><path d="M118,13.5 H127" stroke="#5c5cb0" stroke-width="1.1"/><path d="M118.5,6 V21 M127.5,6 V21" stroke="#333" stroke-width="1.2"/><path d="M156,17 Q161,9 168,12 Q171,14 169,18" stroke="#777" stroke-width="1.3" fill="none"/><path d="M154,12 L156,17 L160,14" stroke="#777" stroke-width="1.3" fill="none"/><path d="M197,17 Q192,9 185,12 Q182,14 184,18" stroke="#777" stroke-width="1.3" fill="none"/><path d="M199,12 L197,17 L193,14" stroke="#777" stroke-width="1.3" fill="none"/><circle cx="231" cy="15" r="6.3" fill="#fafafa" stroke="#111" stroke-width="1.5"/><rect x="229" y="5.5" width="4" height="2" fill="#111"/><line x1="231" y1="7" x2="231" y2="9" stroke="#111" stroke-width="1.3"/><path d="M228,11 L231,15 L234,12" stroke="#2030c0" stroke-width="1.2" fill="none"/><circle cx="275" cy="12" r="5" fill="#fff" stroke="#111" stroke-width="1.4"/><path d="M272,12 H278 M275,9 V15" stroke="#1a1aa8" stroke-width="1.8"/><line x1="271" y1="16" x2="266" y2="21" stroke="#111" stroke-width="2.2"/><circle cx="302" cy="12" r="5" fill="#fff" stroke="#111" stroke-width="1.4"/><path d="M299,12 H305" stroke="#1a1aa8" stroke-width="1.8"/><line x1="298" y1="16" x2="293" y2="21" stroke="#111" stroke-width="2.2"/><circle cx="329" cy="11" r="5" fill="#ccc" stroke="#888" stroke-width="1.4"/><line x1="325" y1="15" x2="320" y2="20" stroke="#888" stroke-width="2.2"/><path d="M327,21 H336 M327,21 L329,19 M327,21 L329,23 M336,21 L334,19 M336,21 L334,23" stroke="#777" stroke-width="1"/><circle cx="356" cy="11" r="5" fill="#fff" stroke="#111" stroke-width="1.4"/><line x1="352" y1="15" x2="347" y2="20" stroke="#111" stroke-width="2.2"/><path d="M354,21 H364 M354,19 V23 M364,19 V23" stroke="#1a1aa8" stroke-width="1.4"/></svg>
<div class="r" style="left:709px;top:631px;width:4px;height:1px;background:#8c8c8c"></div><div class="r" style="left:709px;top:635px;width:4px;height:1px;background:#8c8c8c"></div><div class="r" style="left:709px;top:639px;width:4px;height:1px;background:#8c8c8c"></div><div class="r" style="left:709px;top:643px;width:4px;height:1px;background:#8c8c8c"></div><div class="r" style="left:709px;top:647px;width:4px;height:1px;background:#8c8c8c"></div>
<div class="r" style="left:715px;top:628px;width:1px;height:27px;background:#b0b0b0"></div>
<div class="r" style="left:716px;top:628px;width:28px;height:27px;box-sizing:border-box;border-right:1px solid #d4d4d2;border-bottom:1px solid #d4d4d2"></div>
<svg class="r" style="left:722px;top:633px" width="16" height="17"><path d="M2,1.5 L14,8.5 L2,15.5Z" fill="#89a98a"/></svg>
<div class="r" style="left:752px;top:643px;width:88px;height:1px;background:#a0a0a0"></div>
<div class="r" style="left:752px;top:635px;width:5px;height:1px;background:#111"></div>
<div class="r" style="left:831px;top:635px;width:6px;height:1px;background:#111"></div>
<div class="r" style="left:833.5px;top:632.5px;width:1px;height:6px;background:#111"></div>
<div class="r" style="left:752.0px;top:640px;width:1px;height:2px;background:#a8a8a8"></div>
<div class="r" style="left:760.6px;top:640px;width:1px;height:2px;background:#a8a8a8"></div>
<div class="r" style="left:769.2px;top:640px;width:1px;height:2px;background:#a8a8a8"></div>
<div class="r" style="left:777.8px;top:640px;width:1px;height:2px;background:#a8a8a8"></div>
<div class="r" style="left:786.4px;top:640px;width:1px;height:2px;background:#a8a8a8"></div>
<div class="r" style="left:795.0px;top:640px;width:1px;height:2px;background:#a8a8a8"></div>
<div class="r" style="left:803.6px;top:640px;width:1px;height:2px;background:#a8a8a8"></div>
<div class="r" style="left:812.2px;top:640px;width:1px;height:2px;background:#a8a8a8"></div>
<div class="r" style="left:820.8px;top:640px;width:1px;height:2px;background:#a8a8a8"></div>
<div class="r" style="left:829.4px;top:640px;width:1px;height:2px;background:#a8a8a8"></div>
<div class="r" style="left:838.0px;top:640px;width:1px;height:2px;background:#a8a8a8"></div>
<svg class="r" style="left:773px;top:634px" width="14" height="16" viewBox="0 0 14 16"><defs><linearGradient id="stg" x1="0" x2="1"><stop offset="0" stop-color="#d0d0e8"/><stop offset="1" stop-color="#9c9cc8"/></linearGradient></defs><path d="M1.5,4 Q1.5,1.5 4,1.5 L10,1.5 Q12.5,1.5 12.5,4 L12.5,10 L7,14.5 L1.5,10 Z" fill="url(#stg)" stroke="#55555e" stroke-width="1"/><path d="M1.8,3.6 Q2,1.3 4,1.2 L10,1.2 Q12,1.3 12.2,3.6" fill="none" stroke="#222" stroke-width="1.1"/><path d="M5.2,5.5 H8.8 M5.2,7.5 H8.8 M5.2,9.5 H8.8" stroke="#f4f4ff" stroke-width="0.9"/></svg>
<div class="r" style="left:8px;top:660px;width:4px;height:1px;background:#8c8c8c"></div><div class="r" style="left:8px;top:664px;width:4px;height:1px;background:#8c8c8c"></div><div class="r" style="left:8px;top:668px;width:4px;height:1px;background:#8c8c8c"></div><div class="r" style="left:8px;top:672px;width:4px;height:1px;background:#8c8c8c"></div><div class="r" style="left:8px;top:676px;width:4px;height:1px;background:#8c8c8c"></div>
<div class="r" style="left:14px;top:656px;width:1px;height:27px;background:#a4a4a4"></div>
<div class="r" style="left:17.5px;top:657.5px;width:67.0px;height:23.5px;box-sizing:border-box;border:1px solid #dcdcd8;border-radius:4px;background:linear-gradient(#f7f7f5,#eeeeec)"></div><div class="t" style="left:23.5px;top:664.63px;font-size:14px;line-height:15.64px;color:#b4b0a8;font-weight:400;font-family:'Liberation Sans', sans-serif;transform:scaleX(0.9748);transform-origin:0 0;">ALSA</div><svg class="r" style="left:69.5px;top:662px" width="10" height="15"><path d="M1.5,5.5 L5,1.5 L8.5,5.5Z M1.5,9.5 L5,13.5 L8.5,9.5Z" fill="#b4b4b4"/></svg>
<svg class="r" style="left:89px;top:659px" width="20" height="20" viewBox="0 0 20 20"><line x1="1" y1="19" x2="11" y2="8" stroke="#111" stroke-width="1.6"/><ellipse cx="14" cy="5.5" rx="5" ry="4.4" transform="rotate(-40 14 5.5)" fill="#bbb" stroke="#111" stroke-width="1.4"/><path d="M10.8,4.5 L15.5,8.6 M12.3,3 L17,7.1 M14,1.8 L18,5.4" stroke="#222" stroke-width="1"/></svg>
<div class="r" style="left:112.8px;top:657.5px;width:197.39999999999998px;height:23.5px;box-sizing:border-box;border:1px solid #dcdcd8;border-radius:4px;background:linear-gradient(#f7f7f5,#eeeeec)"></div><div class="t" style="left:118.8px;top:664.63px;font-size:14px;line-height:15.64px;color:#b4b0a8;font-weight:400;font-family:'Liberation Sans', sans-serif;transform:scaleX(1.1091);transform-origin:0 0;">default: Front Mic:0</div><svg class="r" style="left:295.2px;top:662px" width="10" height="15"><path d="M1.5,5.5 L5,1.5 L8.5,5.5Z M1.5,9.5 L5,13.5 L8.5,9.5Z" fill="#b4b4b4"/></svg>
<div class="r" style="left:313.8px;top:657.5px;width:104.5px;height:23.5px;box-sizing:border-box;border:1px solid #dcdcd8;border-radius:4px;background:linear-gradient(#f7f7f5,#eeeeec)"></div><div class="t" style="left:319.8px;top:664.63px;font-size:14px;line-height:15.64px;color:#b4b0a8;font-weight:400;font-family:'Liberation Sans', sans-serif;transform:scaleX(1.0938);transform-origin:0 0;">2 (Stereo) c</div><svg class="r" style="left:403.3px;top:662px" width="10" height="15"><path d="M1.5,5.5 L5,1.5 L8.5,5.5Z M1.5,9.5 L5,13.5 L8.5,9.5Z" fill="#b4b4b4"/></svg>
<svg class="r" style="left:426px;top:664px" width="14" height="14" viewBox="0 0 14 14"><path d="M1,5 L3.5,5 L7,1.5 L7,12.5 L3.5,9 L1,9Z" fill="#111"/><path d="M9,4.5 Q10.5,7 9,9.5 M11,2.8 Q13.5,7 11,11.2" stroke="#111" stroke-width="1.3" fill="none"/></svg>
<div class="r" style="left:446.6px;top:657.5px;width:162.89999999999998px;height:23.5px;box-sizing:border-box;border:1px solid #dcdcd8;border-radius:4px;background:linear-gradient(#f7f7f5,#eeeeec)"></div><div class="t" style="left:452.6px;top:664.63px;font-size:14px;line-height:15.64px;color:#b4b0a8;font-weight:400;font-family:'Liberation Sans', sans-serif;transform:scaleX(1.1728);transform-origin:0 0;">default</div><svg class="r" style="left:594.5px;top:662px" width="10" height="15"><path d="M1.5,5.5 L5,1.5 L8.5,5.5Z M1.5,9.5 L5,13.5 L8.5,9.5Z" fill="#b4b4b4"/></svg>
<div class="r" style="left:613px;top:656px;width:1px;height:27px;background:#c8c8c8"></div>
<div class="r" style="left:616px;top:656px;width:1px;height:27px;background:#c8c8c8"></div>
<div class="r" style="left:4px;top:684px;width:906px;height:27px;background:#f8f8f6"></div>
<div class="r" style="left:4px;top:711px;width:906px;height:1.5px;background:#111"></div>
<div class="r" style="left:39px;top:705px;width:1px;height:4px;background:#111"></div>
<div class="t" style="left:23.8px;top:692.04px;font-size:12px;line-height:13.40px;color:#111;font-weight:700;font-family:'Liberation Sans', sans-serif;transform:scaleX(1.3316);transform-origin:0 0;">25,0</div>
<div class="r" style="left:82px;top:707px;width:1px;height:2px;background:#111"></div>
<div class="r" style="left:126px;top:705px;width:1px;height:4px;background:#111"></div>
<div class="t" style="left:110.1px;top:692.04px;font-size:12px;line-height:13.40px;color:#111;font-weight:700;font-family:'Liberation Sans', sans-serif;transform:scaleX(1.3316);transform-origin:0 0;">26,0</div>
<div class="r" style="left:169px;top:707px;width:1px;height:2px;background:#111"></div>
<div class="r" style="left:212px;top:705px;width:1px;height:4px;background:#111"></div>
<div class="t" style="left:196.3px;top:692.04px;font-size:12px;line-height:13.40px;color:#111;font-weight:700;font-family:'Liberation Sans', sans-serif;transform:scaleX(1.3316);transform-origin:0 0;">27,0</div>
<div class="r" style="left:255px;top:707px;width:1px;height:2px;background:#111"></div>
<div class="r" style="left:298px;top:705px;width:1px;height:4px;background:#111"></div>
<div class="t" style="left:282.5px;top:692.04px;font-size:12px;line-height:13.40px;color:#111;font-weight:700;font-family:'Liberation Sans', sans-serif;transform:scaleX(1.3316);transform-origin:0 0;">28,0</div>
<div class="r" style="left:341px;top:707px;width:1px;height:2px;background:#111"></div>
<div class="r" style="left:384px;top:705px;width:1px;height:4px;background:#111"></div>
<div class="t" style="left:368.8px;top:692.04px;font-size:12px;line-height:13.40px;color:#111;font-weight:700;font-family:'Liberation Sans', sans-serif;transform:scaleX(1.3316);transform-origin:0 0;">29,0</div>
<div class="r" style="left:427px;top:707px;width:1px;height:2px;background:#111"></div>
<div class="r" style="left:471px;top:705px;width:1px;height:4px;background:#111"></div>
<div class="t" style="left:455.0px;top:692.04px;font-size:12px;line-height:13.40px;color:#111;font-weight:700;font-family:'Liberation Sans', sans-serif;transform:scaleX(1.3316);transform-origin:0 0;">30,0</div>
<div class="r" style="left:514px;top:707px;width:1px;height:2px;background:#111"></div>
<div class="r" style="left:557px;top:705px;width:1px;height:4px;background:#111"></div>
<div class="t" style="left:541.2px;top:692.04px;font-size:12px;line-height:13.40px;color:#111;font-weight:700;font-family:'Liberation Sans', sans-serif;transform:scaleX(1.3316);transform-origin:0 0;">31,0</div>
<div class="r" style="left:600px;top:707px;width:1px;height:2px;background:#111"></div>
<div class="r" style="left:643px;top:705px;width:1px;height:4px;background:#111"></div>
<div class="t" style="left:627.5px;top:692.04px;font-size:12px;line-height:13.40px;color:#111;font-weight:700;font-family:'Liberation Sans', sans-serif;transform:scaleX(1.3316);transform-origin:0 0;">32,0</div>
<div class="r" style="left:686px;top:707px;width:1px;height:2px;background:#111"></div>
<div class="r" style="left:729px;top:705px;width:1px;height:4px;background:#111"></div>
<div class="t" style="left:713.7px;top:692.04px;font-size:12px;line-height:13.40px;color:#111;font-weight:700;font-family:'Liberation Sans', sans-serif;transform:scaleX(1.3316);transform-origin:0 0;">33,0</div>
<div class="r" style="left:772px;top:707px;width:1px;height:2px;background:#111"></div>
<div class="r" style="left:815px;top:705px;width:1px;height:4px;background:#111"></div>
<div class="t" style="left:799.9px;top:692.04px;font-size:12px;line-height:13.40px;color:#111;font-weight:700;font-family:'Liberation Sans', sans-serif;transform:scaleX(1.3316);transform-origin:0 0;">34,0</div>
<div class="r" style="left:859px;top:707px;width:1px;height:2px;background:#111"></div>
<div class="r" style="left:902px;top:705px;width:1px;height:4px;background:#111"></div>
<div class="t" style="left:876.4px;top:692.04px;font-size:12px;line-height:13.40px;color:#111;font-weight:700;font-family:'Liberation Sans', sans-serif;transform:scaleX(1.3316);transform-origin:0 0;">35,0</div>
<svg class="r" style="left:818px;top:685px" width="14" height="10"><path d="M1,1 H13 L7,9Z" fill="#c05060" stroke="#a03040" stroke-width="0.8"/></svg>
<div class="r" style="left:4px;top:712px;width:906px;height:221px;background:#f8f8f6"></div>
<div class="r" style="left:4px;top:712px;width:1px;height:221px;background:#111"></div>
<div class="r" style="left:5px;top:712px;width:3.5px;height:221px;background:#f0f0a0"></div>
<div class="r" style="left:8.3px;top:712px;width:1px;height:219px;background:#111"></div>
<div class="r" style="left:104px;top:712px;width:1.3px;height:219px;background:#111"></div>
<div class="r" style="left:105px;top:780px;width:37px;height:1px;background:#a8a8a8"></div>
<div class="r" style="left:142px;top:780px;width:766px;height:1.3px;background:#111"></div>
<div class="r" style="left:142px;top:781.3px;width:766px;height:4px;background:#a9a9a9"></div>
<div class="r" style="left:142px;top:785.3px;width:766px;height:1.7px;background:#111"></div>
<div class="r" style="left:8px;top:929.7px;width:900px;height:2.2px;background:#111"></div>
<div class="r" style="left:5px;top:931.9px;width:904px;height:2.8px;background:linear-gradient(#ffff88,#f0f088 60%,#c8c8a0)"></div>
<div class="r" style="left:22px;top:722.9px;width:72px;height:1.2px;background:#a0a0a0"></div>
<div class="r" style="left:23px;top:717.9px;width:1px;height:4px;background:#b0b0b0"></div>
<div class="r" style="left:30px;top:719.9px;width:1px;height:2px;background:#b0b0b0"></div>
<div class="r" style="left:38px;top:719.9px;width:1px;height:2px;background:#b0b0b0"></div>
<div class="r" style="left:44px;top:719.9px;width:1px;height:2px;background:#b0b0b0"></div>
<div class="r" style="left:64px;top:719.9px;width:1px;height:2px;background:#b0b0b0"></div>
<div class="r" style="left:72px;top:719.9px;width:1px;height:2px;background:#b0b0b0"></div>
<div class="r" style="left:79px;top:719.9px;width:1px;height:2px;background:#b0b0b0"></div>
<div class="r" style="left:85px;top:719.9px;width:1px;height:2px;background:#b0b0b0"></div>
<div class="r" style="left:92px;top:717.9px;width:1px;height:4px;background:#b0b0b0"></div>
<svg class="r" style="left:48.8px;top:714.1px" width="14" height="16" viewBox="0 0 14 16"><defs><linearGradient id="stg" x1="0" x2="1"><stop offset="0" stop-color="#d0d0e8"/><stop offset="1" stop-color="#9c9cc8"/></linearGradient></defs><path d="M1.5,4 Q1.5,1.5 4,1.5 L10,1.5 Q12.5,1.5 12.5,4 L12.5,10 L7,14.5 L1.5,10 Z" fill="url(#stg)" stroke="#55555e" stroke-width="1"/><path d="M1.8,3.6 Q2,1.3 4,1.2 L10,1.2 Q12,1.3 12.2,3.6" fill="none" stroke="#222" stroke-width="1.1"/><path d="M5.2,5.5 H8.8 M5.2,7.5 H8.8 M5.2,9.5 H8.8" stroke="#f4f4ff" stroke-width="0.9"/></svg>
<div class="r" style="left:22px;top:753.1px;width:72px;height:1.2px;background:#a0a0a0"></div>
<div class="r" style="left:23px;top:748.1px;width:1px;height:4px;background:#b0b0b0"></div>
<div class="r" style="left:30px;top:750.1px;width:1px;height:2px;background:#b0b0b0"></div>
<div class="r" style="left:38px;top:750.1px;width:1px;height:2px;background:#b0b0b0"></div>
<div class="r" style="left:44px;top:750.1px;width:1px;height:2px;background:#b0b0b0"></div>
<div class="r" style="left:64px;top:750.1px;width:1px;height:2px;background:#b0b0b0"></div>
<div class="r" style="left:72px;top:750.1px;width:1px;height:2px;background:#b0b0b0"></div>
<div class="r" style="left:79px;top:750.1px;width:1px;height:2px;background:#b0b0b0"></div>
<div class="r" style="left:85px;top:750.1px;width:1px;height:2px;background:#b0b0b0"></div>
<div class="r" style="left:92px;top:748.1px;width:1px;height:4px;background:#b0b0b0"></div>
<svg class="r" style="left:48.8px;top:744.3000000000001px" width="14" height="16" viewBox="0 0 14 16"><defs><linearGradient id="stg" x1="0" x2="1"><stop offset="0" stop-color="#d0d0e8"/><stop offset="1" stop-color="#9c9cc8"/></linearGradient></defs><path d="M1.5,4 Q1.5,1.5 4,1.5 L10,1.5 Q12.5,1.5 12.5,4 L12.5,10 L7,14.5 L1.5,10 Z" fill="url(#stg)" stroke="#55555e" stroke-width="1"/><path d="M1.8,3.6 Q2,1.3 4,1.2 L10,1.2 Q12,1.3 12.2,3.6" fill="none" stroke="#222" stroke-width="1.1"/><path d="M5.2,5.5 H8.8 M5.2,7.5 H8.8 M5.2,9.5 H8.8" stroke="#f4f4ff" stroke-width="0.9"/></svg>
<div class="r" style="left:22px;top:712px;width:5px;height:1.6px;background:#111"></div>
<div class="r" style="left:85px;top:712px;width:6px;height:1.6px;background:#111"></div>
<div class="r" style="left:88px;top:712px;width:1px;height:3px;background:#111"></div>
<div class="t" style="left:21.9px;top:737.14px;font-size:12px;line-height:13.40px;color:#111;font-weight:400;font-family:'Liberation Sans', sans-serif;transform:scaleX(0.9642);transform-origin:0 0;">G</div>
<div class="t" style="left:84.3px;top:737.14px;font-size:12px;line-height:13.40px;color:#111;font-weight:400;font-family:'Liberation Sans', sans-serif;transform:scaleX(1.0962);transform-origin:0 0;">D</div>
<div class="r" style="left:27px;top:912px;width:62px;height:19px;box-sizing:border-box;border:1px solid #a8a8a8;border-bottom:none;background:#f8f8f6"></div>
<svg class="r" style="left:51px;top:916px" width="14" height="8"><path d="M1,7 L7,1.5 L13,7Z" fill="#aaa"/></svg>
<div class="r" style="left:105px;top:712px;width:37px;height:6px;overflow:hidden"><div class="t" style="left:4.5px;top:-6.64px;font-size:11.2px;line-height:12.51px;color:#111;font-weight:700;font-family:'Liberation Sans', sans-serif;transform:scaleX(1.4145);transform-origin:0 0;">-0,0</div></div>
<div class="t" style="left:112.3px;top:740.06px;font-size:11.2px;line-height:12.51px;color:#111;font-weight:400;font-family:'Liberation Sans', sans-serif;transform:scaleX(1.2694);transform-origin:0 0;">-0,5</div>
<div class="t" style="left:109.5px;top:766.86px;font-size:11.2px;line-height:12.51px;color:#111;font-weight:700;font-family:'Liberation Sans', sans-serif;transform:scaleX(1.4145);transform-origin:0 0;">-1,0</div>
<div class="r" style="left:138.5px;top:745px;width:2.5px;height:1px;background:#111"></div>
<div class="r" style="left:137px;top:779px;width:4px;height:1px;background:#111"></div>
<div class="t" style="left:115.2px;top:789.56px;font-size:11.2px;line-height:12.51px;color:#111;font-weight:700;font-family:'Liberation Sans', sans-serif;transform:scaleX(1.3873);transform-origin:0 0;">1,0</div>
<div class="t" style="left:117.4px;top:818.86px;font-size:11.2px;line-height:12.51px;color:#111;font-weight:400;font-family:'Liberation Sans', sans-serif;transform:scaleX(1.2460);transform-origin:0 0;">0,5</div>
<div class="t" style="left:114.5px;top:853.66px;font-size:11.2px;line-height:12.51px;color:#111;font-weight:700;font-family:'Liberation Sans', sans-serif;transform:scaleX(1.4323);transform-origin:0 0;">0,0</div>
<div class="t" style="left:112.3px;top:889.66px;font-size:11.2px;line-height:12.51px;color:#111;font-weight:400;font-family:'Liberation Sans', sans-serif;transform:scaleX(1.2694);transform-origin:0 0;">-0,5</div>
<div class="t" style="left:109.5px;top:916.76px;font-size:11.2px;line-height:12.51px;color:#111;font-weight:700;font-family:'Liberation Sans', sans-serif;transform:scaleX(1.4145);transform-origin:0 0;">-1,0</div>
<div class="r" style="left:138.5px;top:823.2px;width:2.5px;height:1px;background:#111"></div>
<div class="r" style="left:138.5px;top:858.4px;width:2.5px;height:1px;background:#111"></div>
<div class="r" style="left:138.5px;top:894px;width:2.5px;height:1px;background:#111"></div>
<div class="r" style="left:137px;top:929px;width:4px;height:1px;background:#111"></div>
<div class="r" style="left:142px;top:712px;width:625px;height:68px;background:#c0c0c0"></div>
<div class="r" style="left:142px;top:787px;width:625px;height:142.7px;background:#c0c0c0"></div>
<div class="r" style="left:767px;top:712px;width:137px;height:68px;background:#d6d6d6"></div>
<div class="r" style="left:767px;top:787px;width:137px;height:142.7px;background:#d6d6d6"></div>
<div class="r" style="left:767px;top:712px;width:1px;height:68px;background:#8a8a8a"></div>
<div class="r" style="left:767px;top:787px;width:1px;height:142.7px;background:#8a8a8a"></div>
<svg class="r" style="left:0;top:0" width="910" height="1042"><defs><clipPath id="c1"><rect x="142" y="712" width="625" height="68"/></clipPath><clipPath id="c2"><rect x="142" y="787" width="625" height="142.7"/></clipPath></defs><g clip-path="url(#c1)"><path d="M142,712h1V741.6h-1ZM143,712h1V741.7h-1ZM144,712h1V745.4h-1ZM145,712h1V748.0h-1ZM146,712h1V737.7h-1ZM147,712h1V730.1h-1ZM148,712h1V724.0h-1ZM151,712h1V753.0h-1ZM152,712h1V779.4h-1ZM153,712h1V761.2h-1ZM154,712h1V748.7h-1ZM155,712h1V741.0h-1ZM156,712h1V735.3h-1ZM157,712h1V732.7h-1ZM158,712h1V734.2h-1ZM159,712h1V730.7h-1ZM160,712h1V735.7h-1ZM161,712h1V739.0h-1ZM162,712h1V734.9h-1ZM163,712h1V736.1h-1ZM164,712h1V741.9h-1ZM165,712h1V743.3h-1ZM166,712h1V738.5h-1ZM167,712h1V735.8h-1ZM168,712h1V741.6h-1ZM169,712h1V744.9h-1ZM170,712h1V743.2h-1ZM171,712h1V739.0h-1ZM172,712h1V727.9h-1ZM176,712h1V716.6h-1ZM177,712h1V723.4h-1ZM178,712h1V734.1h-1ZM179,712h1V722.1h-1ZM182,712h1V779.7h-1ZM183,712h1V779.7h-1ZM184,712h1V774.0h-1ZM185,712h1V760.9h-1ZM186,712h1V775.3h-1ZM187,712h1V779.7h-1ZM188,712h1V779.7h-1ZM189,712h1V779.7h-1ZM190,712h1V779.7h-1ZM191,712h1V779.2h-1ZM192,712h1V778.2h-1ZM193,712h1V777.2h-1ZM194,712h1V776.2h-1ZM195,712h1V775.8h-1ZM196,712h1V777.3h-1ZM197,712h1V778.8h-1ZM198,712h1V779.7h-1ZM199,712h1V779.7h-1ZM200,712h1V777.1h-1ZM201,712h1V767.0h-1ZM202,712h1V761.0h-1ZM203,712h1V749.4h-1ZM204,712h1V739.2h-1ZM205,712h1V729.2h-1ZM206,712h1V719.3h-1ZM209,712h1V731.4h-1ZM210,712h1V742.0h-1ZM211,712h1V750.2h-1ZM212,712h1V750.2h-1ZM213,712h1V747.6h-1ZM214,712h1V747.7h-1ZM215,712h1V743.9h-1ZM216,712h1V734.5h-1ZM217,712h1V730.6h-1ZM218,712h1V730.4h-1ZM219,712h1V732.1h-1ZM220,712h1V733.8h-1ZM221,712h1V736.9h-1ZM222,712h1V742.4h-1ZM223,712h1V747.3h-1ZM224,712h1V754.5h-1ZM225,712h1V768.1h-1ZM226,712h1V779.7h-1ZM227,712h1V779.7h-1ZM228,712h1V779.7h-1ZM229,712h1V769.3h-1ZM230,712h1V750.1h-1ZM231,712h1V745.6h-1ZM232,712h1V750.2h-1ZM233,712h1V758.1h-1ZM234,712h1V767.6h-1ZM235,712h1V779.7h-1ZM236,712h1V779.7h-1ZM237,712h1V779.7h-1ZM238,712h1V769.2h-1ZM239,712h1V755.7h-1ZM243,712h1V715.5h-1ZM244,712h1V716.9h-1ZM245,712h1V720.4h-1ZM246,712h1V724.1h-1ZM249,712h1V713.5h-1ZM250,712h1V719.8h-1ZM251,712h1V730.7h-1ZM252,712h1V743.1h-1ZM253,712h1V744.1h-1ZM254,712h1V741.4h-1ZM255,712h1V738.0h-1ZM256,712h1V734.2h-1ZM257,712h1V729.2h-1ZM258,712h1V729.0h-1ZM259,712h1V730.6h-1ZM260,712h1V746.3h-1ZM261,712h1V765.1h-1ZM262,712h1V779.1h-1ZM263,712h1V776.8h-1ZM264,712h1V773.8h-1ZM265,712h1V769.8h-1ZM266,712h1V757.3h-1ZM267,712h1V751.4h-1ZM268,712h1V745.7h-1ZM269,712h1V739.2h-1ZM270,712h1V735.6h-1ZM271,712h1V733.3h-1ZM272,712h1V729.6h-1ZM273,712h1V724.6h-1ZM274,712h1V721.2h-1ZM275,712h1V717.7h-1ZM276,712h1V715.4h-1ZM279,712h1V732.5h-1ZM280,712h1V726.9h-1ZM281,712h1V723.3h-1ZM282,712h1V743.3h-1ZM283,712h1V757.6h-1ZM284,712h1V748.0h-1ZM285,712h1V735.6h-1ZM286,712h1V720.7h-1ZM290,712h1V729.5h-1ZM291,712h1V723.3h-1ZM292,712h1V717.5h-1ZM293,712h1V716.2h-1ZM294,712h1V721.0h-1ZM295,712h1V739.1h-1ZM296,712h1V752.4h-1ZM297,712h1V765.9h-1ZM298,712h1V773.6h-1ZM299,712h1V775.6h-1ZM300,712h1V776.7h-1ZM301,712h1V776.2h-1ZM302,712h1V775.7h-1ZM303,712h1V769.2h-1ZM304,712h1V764.4h-1ZM305,712h1V757.0h-1ZM306,712h1V762.1h-1ZM307,712h1V773.0h-1ZM308,712h1V774.2h-1ZM309,712h1V767.4h-1ZM310,712h1V768.2h-1ZM311,712h1V764.2h-1ZM312,712h1V761.5h-1ZM313,712h1V758.1h-1ZM314,712h1V754.5h-1ZM315,712h1V752.0h-1ZM316,712h1V749.8h-1ZM317,712h1V743.7h-1ZM318,712h1V735.3h-1ZM319,712h1V731.4h-1ZM320,712h1V730.2h-1ZM321,712h1V729.0h-1ZM322,712h1V730.9h-1ZM323,712h1V735.6h-1ZM324,712h1V739.2h-1ZM325,712h1V740.2h-1ZM326,712h1V733.4h-1ZM327,712h1V726.0h-1ZM328,712h1V719.8h-1ZM329,712h1V714.8h-1ZM330,712h1V739.7h-1ZM331,712h1V754.3h-1ZM332,712h1V756.3h-1ZM333,712h1V757.7h-1ZM334,712h1V760.5h-1ZM335,712h1V759.6h-1ZM336,712h1V757.7h-1ZM337,712h1V742.8h-1ZM338,712h1V723.5h-1ZM339,712h1V720.5h-1ZM340,712h1V720.0h-1ZM341,712h1V732.4h-1ZM342,712h1V751.1h-1ZM343,712h1V763.5h-1ZM344,712h1V779.7h-1ZM345,712h1V779.7h-1ZM346,712h1V778.0h-1ZM347,712h1V763.4h-1ZM348,712h1V746.2h-1ZM349,712h1V732.1h-1ZM350,712h1V716.6h-1ZM351,712h1V730.6h-1ZM352,712h1V740.0h-1ZM353,712h1V740.0h-1ZM354,712h1V742.6h-1ZM355,712h1V747.2h-1ZM356,712h1V750.0h-1ZM357,712h1V751.2h-1ZM358,712h1V755.6h-1ZM359,712h1V760.5h-1ZM360,712h1V761.7h-1ZM361,712h1V764.8h-1ZM362,712h1V770.4h-1ZM363,712h1V772.8h-1ZM364,712h1V775.2h-1ZM365,712h1V767.7h-1ZM366,712h1V761.3h-1ZM367,712h1V753.2h-1ZM368,712h1V738.6h-1ZM369,712h1V724.9h-1ZM370,712h1V716.4h-1ZM371,712h1V719.5h-1ZM372,712h1V727.7h-1ZM373,712h1V723.2h-1ZM374,712h1V719.3h-1ZM375,712h1V717.8h-1ZM376,712h1V716.4h-1ZM377,712h1V734.8h-1ZM378,712h1V752.1h-1ZM379,712h1V763.0h-1ZM380,712h1V771.7h-1ZM381,712h1V774.0h-1ZM382,712h1V773.4h-1ZM383,712h1V767.2h-1ZM384,712h1V761.4h-1ZM385,712h1V754.4h-1ZM386,712h1V744.3h-1ZM387,712h1V731.4h-1ZM388,712h1V718.1h-1ZM389,712h1V724.3h-1ZM390,712h1V729.2h-1ZM391,712h1V729.3h-1ZM392,712h1V728.5h-1ZM393,712h1V728.8h-1ZM394,712h1V729.2h-1ZM395,712h1V730.6h-1ZM396,712h1V726.6h-1ZM397,712h1V721.9h-1ZM400,712h1V731.0h-1ZM401,712h1V738.9h-1ZM402,712h1V744.2h-1ZM403,712h1V742.5h-1ZM404,712h1V739.3h-1ZM405,712h1V734.2h-1ZM406,712h1V726.8h-1ZM407,712h1V724.2h-1ZM408,712h1V721.4h-1ZM515,712h1V767.1h-1ZM516,712h1V779.5h-1ZM517,712h1V776.1h-1ZM518,712h1V772.8h-1ZM519,712h1V771.1h-1ZM520,712h1V767.5h-1ZM521,712h1V769.3h-1ZM522,712h1V765.3h-1ZM523,712h1V764.5h-1ZM524,712h1V761.3h-1ZM525,712h1V760.4h-1ZM526,712h1V760.6h-1ZM527,712h1V757.6h-1ZM528,712h1V756.7h-1ZM529,712h1V761.3h-1ZM530,712h1V768.0h-1ZM531,712h1V774.7h-1ZM532,712h1V779.0h-1ZM533,712h1V770.2h-1ZM534,712h1V759.7h-1ZM535,712h1V747.3h-1ZM536,712h1V740.5h-1ZM537,712h1V731.4h-1ZM538,712h1V729.1h-1ZM539,712h1V732.6h-1ZM540,712h1V739.0h-1ZM541,712h1V746.4h-1ZM542,712h1V759.0h-1ZM543,712h1V755.9h-1ZM544,712h1V745.0h-1ZM545,712h1V736.7h-1ZM548,712h1V769.1h-1ZM549,712h1V779.3h-1ZM550,712h1V778.7h-1ZM551,712h1V776.7h-1ZM552,712h1V767.1h-1ZM553,712h1V761.9h-1ZM554,712h1V758.7h-1ZM555,712h1V749.9h-1ZM556,712h1V742.7h-1ZM557,712h1V735.1h-1ZM558,712h1V749.2h-1ZM559,712h1V761.5h-1ZM560,712h1V774.3h-1ZM561,712h1V775.9h-1ZM562,712h1V777.5h-1ZM563,712h1V779.1h-1ZM564,712h1V772.5h-1ZM565,712h1V760.9h-1ZM566,712h1V750.1h-1ZM571,712h1V720.5h-1ZM572,712h1V726.3h-1ZM576,712h1V749.2h-1ZM577,712h1V755.1h-1ZM578,712h1V759.5h-1ZM579,712h1V763.3h-1ZM580,712h1V766.7h-1ZM581,712h1V768.7h-1ZM582,712h1V767.7h-1ZM583,712h1V772.8h-1ZM584,712h1V775.4h-1ZM585,712h1V778.1h-1ZM586,712h1V770.2h-1ZM587,712h1V759.5h-1ZM588,712h1V754.6h-1ZM589,712h1V753.2h-1ZM590,712h1V750.7h-1ZM591,712h1V741.5h-1ZM592,712h1V732.1h-1ZM593,712h1V724.0h-1ZM594,712h1V723.8h-1ZM595,712h1V728.5h-1ZM596,712h1V740.1h-1ZM597,712h1V741.1h-1ZM598,712h1V738.1h-1ZM599,712h1V735.1h-1ZM600,712h1V742.9h-1ZM601,712h1V721.1h-1ZM608,712h1V762.7h-1ZM609,712h1V765.0h-1ZM610,712h1V766.2h-1ZM611,712h1V762.6h-1ZM612,712h1V765.8h-1ZM613,712h1V762.7h-1ZM614,712h1V760.7h-1ZM615,712h1V759.8h-1ZM616,712h1V758.8h-1ZM617,712h1V761.2h-1ZM618,712h1V761.6h-1ZM619,712h1V761.7h-1ZM620,712h1V757.1h-1ZM621,712h1V751.8h-1ZM622,712h1V750.3h-1ZM623,712h1V744.8h-1ZM624,712h1V743.7h-1ZM625,712h1V740.9h-1ZM626,712h1V737.0h-1ZM627,712h1V734.0h-1ZM628,712h1V732.4h-1ZM629,712h1V736.5h-1ZM630,712h1V739.7h-1ZM631,712h1V744.0h-1ZM632,712h1V749.2h-1ZM633,712h1V750.8h-1ZM634,712h1V746.1h-1ZM635,712h1V741.1h-1ZM636,712h1V731.8h-1ZM639,712h1V713.8h-1ZM640,712h1V727.3h-1ZM641,712h1V729.0h-1ZM642,712h1V719.8h-1ZM643,712h1V715.5h-1ZM644,712h1V716.6h-1ZM645,712h1V716.6h-1ZM646,712h1V714.9h-1ZM649,712h1V734.5h-1ZM650,712h1V737.4h-1ZM651,712h1V724.5h-1ZM655,712h1V715.1h-1ZM656,712h1V716.4h-1ZM661,712h1V713.7h-1ZM666,712h1V751.4h-1ZM667,712h1V751.4h-1ZM668,712h1V745.6h-1ZM669,712h1V741.5h-1ZM670,712h1V729.7h-1ZM671,712h1V720.3h-1ZM674,712h1V716.5h-1ZM675,712h1V719.8h-1ZM676,712h1V723.5h-1ZM677,712h1V727.1h-1ZM678,712h1V728.5h-1ZM679,712h1V728.2h-1ZM680,712h1V728.5h-1ZM681,712h1V727.5h-1ZM682,712h1V728.4h-1ZM683,712h1V730.9h-1ZM684,712h1V733.5h-1ZM685,712h1V732.9h-1ZM686,712h1V732.7h-1ZM687,712h1V731.8h-1ZM688,712h1V731.7h-1ZM689,712h1V732.1h-1ZM690,712h1V731.3h-1ZM691,712h1V732.4h-1ZM692,712h1V732.6h-1ZM693,712h1V732.3h-1ZM694,712h1V730.8h-1ZM695,712h1V728.6h-1ZM696,712h1V727.6h-1ZM697,712h1V726.3h-1ZM698,712h1V723.9h-1ZM699,712h1V721.6h-1ZM700,712h1V719.0h-1ZM701,712h1V717.0h-1Z" fill="#3232c8"/><path d="M142,712h1V725.0h-1ZM143,712h1V723.5h-1ZM144,712h1V721.8h-1ZM145,712h1V721.5h-1ZM146,712h1V719.7h-1ZM147,712h1V718.2h-1ZM148,712h1V716.2h-1ZM151,712h1V718.9h-1ZM152,712h1V728.4h-1ZM153,712h1V731.8h-1ZM154,712h1V733.4h-1ZM155,712h1V731.3h-1ZM156,712h1V723.0h-1ZM157,712h1V718.0h-1ZM158,712h1V719.5h-1ZM159,712h1V718.0h-1ZM160,712h1V719.2h-1ZM161,712h1V720.0h-1ZM162,712h1V719.6h-1ZM163,712h1V719.4h-1ZM164,712h1V719.4h-1ZM165,712h1V719.2h-1ZM166,712h1V718.5h-1ZM167,712h1V717.9h-1ZM168,712h1V717.6h-1ZM169,712h1V718.3h-1ZM170,712h1V723.9h-1ZM171,712h1V728.9h-1ZM172,712h1V723.3h-1ZM176,712h1V712.4h-1ZM177,712h1V713.3h-1ZM178,712h1V715.1h-1ZM179,712h1V714.1h-1ZM182,712h1V742.2h-1ZM183,712h1V743.3h-1ZM184,712h1V741.9h-1ZM185,712h1V737.9h-1ZM186,712h1V743.9h-1ZM187,712h1V746.8h-1ZM188,712h1V748.0h-1ZM189,712h1V749.1h-1ZM190,712h1V750.3h-1ZM191,712h1V751.2h-1ZM192,712h1V751.7h-1ZM193,712h1V752.2h-1ZM194,712h1V752.7h-1ZM195,712h1V752.8h-1ZM196,712h1V751.8h-1ZM197,712h1V750.8h-1ZM198,712h1V749.1h-1ZM199,712h1V746.4h-1ZM200,712h1V743.2h-1ZM201,712h1V738.9h-1ZM202,712h1V734.4h-1ZM203,712h1V729.4h-1ZM204,712h1V724.4h-1ZM205,712h1V719.8h-1ZM206,712h1V715.2h-1ZM209,712h1V722.6h-1ZM210,712h1V727.6h-1ZM211,712h1V732.1h-1ZM212,712h1V733.1h-1ZM213,712h1V731.5h-1ZM214,712h1V728.8h-1ZM215,712h1V726.6h-1ZM216,712h1V724.6h-1ZM217,712h1V722.6h-1ZM218,712h1V720.6h-1ZM219,712h1V720.5h-1ZM220,712h1V723.2h-1ZM221,712h1V726.4h-1ZM222,712h1V730.9h-1ZM223,712h1V735.4h-1ZM224,712h1V740.0h-1ZM225,712h1V744.7h-1ZM226,712h1V748.2h-1ZM227,712h1V750.2h-1ZM228,712h1V752.2h-1ZM229,712h1V747.1h-1ZM230,712h1V737.1h-1ZM231,712h1V734.5h-1ZM232,712h1V739.5h-1ZM233,712h1V744.5h-1ZM234,712h1V749.5h-1ZM235,712h1V753.6h-1ZM236,712h1V755.6h-1ZM237,712h1V757.6h-1ZM238,712h1V749.2h-1ZM239,712h1V729.9h-1ZM243,712h1V712.4h-1ZM244,712h1V712.4h-1ZM245,712h1V712.4h-1ZM246,712h1V712.4h-1ZM249,712h1V712.4h-1ZM250,712h1V714.7h-1ZM251,712h1V718.9h-1ZM252,712h1V723.9h-1ZM253,712h1V724.1h-1ZM254,712h1V722.8h-1ZM255,712h1V721.6h-1ZM256,712h1V719.9h-1ZM257,712h1V718.2h-1ZM258,712h1V720.9h-1ZM259,712h1V724.2h-1ZM260,712h1V731.9h-1ZM261,712h1V738.0h-1ZM262,712h1V739.0h-1ZM263,712h1V737.4h-1ZM264,712h1V735.6h-1ZM265,712h1V733.9h-1ZM266,712h1V732.2h-1ZM267,712h1V730.5h-1ZM268,712h1V727.8h-1ZM269,712h1V725.1h-1ZM270,712h1V724.0h-1ZM271,712h1V722.9h-1ZM272,712h1V721.8h-1ZM273,712h1V719.4h-1ZM274,712h1V716.4h-1ZM275,712h1V714.6h-1ZM276,712h1V713.6h-1ZM279,712h1V713.6h-1ZM280,712h1V713.1h-1ZM281,712h1V715.1h-1ZM282,712h1V724.4h-1ZM283,712h1V731.3h-1ZM284,712h1V727.3h-1ZM285,712h1V721.9h-1ZM286,712h1V714.7h-1ZM290,712h1V713.8h-1ZM291,712h1V713.8h-1ZM292,712h1V713.7h-1ZM293,712h1V712.9h-1ZM294,712h1V714.7h-1ZM295,712h1V721.9h-1ZM296,712h1V731.7h-1ZM297,712h1V743.3h-1ZM298,712h1V750.3h-1ZM299,712h1V752.0h-1ZM300,712h1V752.8h-1ZM301,712h1V752.0h-1ZM302,712h1V751.3h-1ZM303,712h1V750.0h-1ZM304,712h1V748.2h-1ZM305,712h1V746.5h-1ZM306,712h1V744.8h-1ZM307,712h1V743.1h-1ZM308,712h1V741.8h-1ZM309,712h1V740.6h-1ZM310,712h1V739.4h-1ZM311,712h1V738.3h-1ZM312,712h1V737.2h-1ZM313,712h1V736.2h-1ZM314,712h1V735.2h-1ZM315,712h1V734.2h-1ZM316,712h1V732.2h-1ZM317,712h1V727.2h-1ZM318,712h1V722.2h-1ZM319,712h1V719.2h-1ZM320,712h1V718.7h-1ZM321,712h1V718.2h-1ZM322,712h1V717.6h-1ZM323,712h1V716.9h-1ZM324,712h1V717.1h-1ZM325,712h1V717.9h-1ZM326,712h1V716.9h-1ZM327,712h1V715.9h-1ZM328,712h1V714.5h-1ZM329,712h1V712.5h-1ZM330,712h1V724.5h-1ZM331,712h1V730.9h-1ZM332,712h1V731.4h-1ZM333,712h1V731.9h-1ZM334,712h1V732.6h-1ZM335,712h1V733.3h-1ZM336,712h1V734.1h-1ZM337,712h1V725.8h-1ZM338,712h1V716.8h-1ZM339,712h1V715.8h-1ZM340,712h1V716.4h-1ZM341,712h1V720.9h-1ZM342,712h1V728.2h-1ZM343,712h1V738.2h-1ZM344,712h1V746.0h-1ZM345,712h1V746.0h-1ZM346,712h1V744.9h-1ZM347,712h1V734.9h-1ZM348,712h1V725.0h-1ZM349,712h1V719.0h-1ZM350,712h1V713.0h-1ZM351,712h1V712.4h-1ZM352,712h1V716.3h-1ZM353,712h1V723.9h-1ZM354,712h1V728.9h-1ZM355,712h1V729.9h-1ZM356,712h1V730.9h-1ZM357,712h1V731.9h-1ZM358,712h1V734.4h-1ZM359,712h1V737.0h-1ZM360,712h1V739.6h-1ZM361,712h1V741.5h-1ZM362,712h1V742.3h-1ZM363,712h1V743.1h-1ZM364,712h1V743.9h-1ZM365,712h1V741.3h-1ZM366,712h1V738.3h-1ZM367,712h1V734.8h-1ZM368,712h1V726.5h-1ZM369,712h1V718.1h-1ZM370,712h1V714.1h-1ZM371,712h1V713.0h-1ZM372,712h1V713.8h-1ZM373,712h1V713.8h-1ZM374,712h1V713.8h-1ZM375,712h1V713.8h-1ZM376,712h1V713.8h-1ZM377,712h1V713.8h-1ZM378,712h1V717.0h-1ZM379,712h1V731.4h-1ZM380,712h1V738.4h-1ZM381,712h1V737.1h-1ZM382,712h1V735.7h-1ZM383,712h1V734.2h-1ZM384,712h1V732.7h-1ZM385,712h1V730.1h-1ZM386,712h1V726.8h-1ZM387,712h1V721.8h-1ZM388,712h1V715.2h-1ZM389,712h1V715.2h-1ZM390,712h1V715.2h-1ZM391,712h1V715.2h-1ZM392,712h1V715.2h-1ZM393,712h1V715.2h-1ZM394,712h1V715.2h-1ZM395,712h1V715.2h-1ZM396,712h1V715.2h-1ZM397,712h1V715.2h-1ZM400,712h1V721.6h-1ZM401,712h1V724.4h-1ZM402,712h1V726.0h-1ZM403,712h1V724.7h-1ZM404,712h1V723.2h-1ZM405,712h1V721.2h-1ZM406,712h1V719.2h-1ZM407,712h1V717.2h-1ZM408,712h1V715.2h-1ZM515,712h1V740.4h-1ZM516,712h1V751.6h-1ZM517,712h1V750.9h-1ZM518,712h1V750.3h-1ZM519,712h1V749.8h-1ZM520,712h1V749.3h-1ZM521,712h1V748.0h-1ZM522,712h1V742.8h-1ZM523,712h1V737.5h-1ZM524,712h1V734.1h-1ZM525,712h1V734.1h-1ZM526,712h1V734.5h-1ZM527,712h1V735.1h-1ZM528,712h1V735.9h-1ZM529,712h1V736.9h-1ZM530,712h1V739.5h-1ZM531,712h1V745.8h-1ZM532,712h1V752.1h-1ZM533,712h1V747.8h-1ZM534,712h1V741.5h-1ZM535,712h1V734.9h-1ZM536,712h1V727.9h-1ZM537,712h1V720.9h-1ZM538,712h1V718.0h-1ZM539,712h1V718.0h-1ZM540,712h1V719.0h-1ZM541,712h1V721.0h-1ZM542,712h1V723.0h-1ZM543,712h1V722.3h-1ZM544,712h1V720.3h-1ZM545,712h1V718.3h-1ZM548,712h1V746.6h-1ZM549,712h1V753.3h-1ZM550,712h1V753.5h-1ZM551,712h1V753.5h-1ZM552,712h1V752.5h-1ZM553,712h1V751.5h-1ZM554,712h1V750.5h-1ZM555,712h1V743.7h-1ZM556,712h1V735.2h-1ZM557,712h1V726.7h-1ZM558,712h1V731.5h-1ZM559,712h1V736.7h-1ZM560,712h1V741.0h-1ZM561,712h1V740.2h-1ZM562,712h1V739.4h-1ZM563,712h1V738.6h-1ZM564,712h1V734.9h-1ZM565,712h1V729.6h-1ZM566,712h1V724.4h-1ZM571,712h1V712.4h-1ZM572,712h1V712.4h-1ZM576,712h1V733.5h-1ZM577,712h1V734.7h-1ZM578,712h1V735.9h-1ZM579,712h1V737.1h-1ZM580,712h1V737.7h-1ZM581,712h1V737.9h-1ZM582,712h1V738.1h-1ZM583,712h1V738.4h-1ZM584,712h1V739.4h-1ZM585,712h1V740.4h-1ZM586,712h1V739.2h-1ZM587,712h1V737.9h-1ZM588,712h1V736.6h-1ZM589,712h1V735.3h-1ZM590,712h1V734.0h-1ZM591,712h1V727.2h-1ZM592,712h1V720.5h-1ZM593,712h1V715.2h-1ZM594,712h1V715.2h-1ZM595,712h1V717.1h-1ZM596,712h1V721.1h-1ZM597,712h1V721.1h-1ZM598,712h1V719.6h-1ZM599,712h1V718.1h-1ZM600,712h1V715.6h-1ZM601,712h1V712.9h-1ZM608,712h1V732.2h-1ZM609,712h1V737.4h-1ZM610,712h1V741.2h-1ZM611,712h1V743.2h-1ZM612,712h1V745.2h-1ZM613,712h1V745.4h-1ZM614,712h1V744.4h-1ZM615,712h1V743.4h-1ZM616,712h1V742.5h-1ZM617,712h1V741.7h-1ZM618,712h1V741.0h-1ZM619,712h1V740.1h-1ZM620,712h1V739.1h-1ZM621,712h1V738.1h-1ZM622,712h1V737.1h-1ZM623,712h1V733.0h-1ZM624,712h1V728.0h-1ZM625,712h1V723.0h-1ZM626,712h1V719.2h-1ZM627,712h1V718.6h-1ZM628,712h1V718.6h-1ZM629,712h1V721.8h-1ZM630,712h1V725.1h-1ZM631,712h1V726.7h-1ZM632,712h1V725.7h-1ZM633,712h1V724.9h-1ZM634,712h1V724.4h-1ZM635,712h1V723.9h-1ZM636,712h1V720.6h-1ZM639,712h1V712.4h-1ZM640,712h1V713.4h-1ZM641,712h1V713.8h-1ZM642,712h1V713.8h-1ZM643,712h1V713.5h-1ZM644,712h1V712.8h-1ZM645,712h1V712.4h-1ZM646,712h1V712.4h-1ZM649,712h1V714.5h-1ZM650,712h1V714.6h-1ZM651,712h1V713.3h-1ZM655,712h1V712.4h-1ZM656,712h1V712.4h-1ZM661,712h1V712.4h-1ZM666,712h1V727.6h-1ZM667,712h1V727.3h-1ZM668,712h1V725.8h-1ZM669,712h1V723.3h-1ZM670,712h1V719.3h-1ZM671,712h1V715.3h-1ZM674,712h1V714.5h-1ZM675,712h1V715.9h-1ZM676,712h1V717.4h-1ZM677,712h1V718.9h-1ZM678,712h1V719.7h-1ZM679,712h1V720.2h-1ZM680,712h1V720.7h-1ZM681,712h1V721.2h-1ZM682,712h1V721.9h-1ZM683,712h1V722.6h-1ZM684,712h1V723.4h-1ZM685,712h1V723.5h-1ZM686,712h1V723.3h-1ZM687,712h1V723.2h-1ZM688,712h1V723.0h-1ZM689,712h1V722.8h-1ZM690,712h1V722.4h-1ZM691,712h1V722.1h-1ZM692,712h1V721.8h-1ZM693,712h1V721.3h-1ZM694,712h1V720.5h-1ZM695,712h1V719.6h-1ZM696,712h1V718.8h-1ZM697,712h1V718.0h-1ZM698,712h1V717.1h-1ZM699,712h1V716.3h-1ZM700,712h1V715.5h-1ZM701,712h1V714.6h-1Z" fill="#6464dc"/></g><g clip-path="url(#c2)"><path d="M142,839.2h1V889.5h-1ZM143,835.0h1V889.8h-1ZM144,826.3h1V893.4h-1ZM145,812.3h1V895.0h-1ZM146,825.3h1V885.4h-1ZM147,834.4h1V878.4h-1ZM148,840.7h1V871.8h-1ZM149,847.7h1V859.0h-1ZM150,850.0h1V859.0h-1ZM151,814.7h1V900.9h-1ZM152,789.4h1V926.4h-1ZM153,805.9h1V908.2h-1ZM154,819.4h1V895.8h-1ZM155,830.8h1V888.8h-1ZM156,834.3h1V882.3h-1ZM157,832.3h1V879.7h-1ZM158,830.0h1V882.7h-1ZM159,827.8h1V877.7h-1ZM160,829.1h1V882.7h-1ZM161,827.0h1V886.0h-1ZM162,826.0h1V882.8h-1ZM163,824.3h1V884.0h-1ZM164,824.1h1V890.0h-1ZM165,825.7h1V891.5h-1ZM166,828.9h1V885.5h-1ZM167,832.9h1V882.8h-1ZM168,829.2h1V889.2h-1ZM169,823.2h1V893.8h-1ZM170,819.0h1V890.2h-1ZM171,817.6h1V886.0h-1ZM172,826.2h1V875.6h-1ZM173,835.0h1V859.0h-1ZM174,849.8h1V859.0h-1ZM175,858.0h1V859.0h-1ZM176,858.0h1V863.8h-1ZM177,858.0h1V870.5h-1ZM178,817.4h1V881.1h-1ZM179,837.5h1V869.1h-1ZM180,837.7h1V859.0h-1ZM181,805.9h1V859.0h-1ZM182,809.5h1V926.7h-1ZM183,807.5h1V926.7h-1ZM184,813.6h1V921.0h-1ZM185,821.0h1V909.8h-1ZM186,809.9h1V922.3h-1ZM187,793.3h1V926.7h-1ZM188,793.4h1V926.7h-1ZM189,794.2h1V926.7h-1ZM190,795.0h1V926.7h-1ZM191,794.7h1V926.2h-1ZM192,793.0h1V925.2h-1ZM193,791.3h1V924.2h-1ZM194,789.7h1V923.2h-1ZM195,789.1h1V922.8h-1ZM196,791.8h1V924.3h-1ZM197,794.6h1V925.8h-1ZM198,797.7h1V926.7h-1ZM199,801.5h1V926.7h-1ZM200,805.2h1V924.1h-1ZM201,815.9h1V916.5h-1ZM202,824.2h1V908.0h-1ZM203,831.2h1V897.0h-1ZM204,832.9h1V886.2h-1ZM205,839.9h1V876.2h-1ZM206,845.5h1V866.3h-1ZM207,852.8h1V859.0h-1ZM208,849.0h1V859.0h-1ZM209,838.2h1V879.7h-1ZM210,832.3h1V889.0h-1ZM211,829.0h1V897.2h-1ZM212,827.3h1V897.2h-1ZM213,824.5h1V896.8h-1ZM214,823.2h1V896.1h-1ZM215,825.1h1V890.9h-1ZM216,828.9h1V882.9h-1ZM217,832.7h1V878.9h-1ZM218,835.9h1V878.5h-1ZM219,835.5h1V879.1h-1ZM220,834.9h1V881.1h-1ZM221,832.6h1V884.1h-1ZM222,829.1h1V889.4h-1ZM223,821.2h1V894.6h-1ZM224,817.6h1V904.3h-1ZM225,808.7h1V918.3h-1ZM226,802.1h1V926.7h-1ZM227,796.1h1V926.7h-1ZM228,790.9h1V926.7h-1ZM229,787.4h1V916.3h-1ZM230,810.5h1V899.0h-1ZM231,821.7h1V892.6h-1ZM232,816.5h1V897.2h-1ZM233,811.6h1V905.1h-1ZM234,796.0h1V917.7h-1ZM235,787.0h1V926.7h-1ZM236,787.0h1V926.7h-1ZM237,787.0h1V926.7h-1ZM238,791.4h1V918.9h-1ZM239,805.6h1V902.9h-1ZM240,839.9h1V859.0h-1ZM241,853.3h1V859.0h-1ZM242,856.0h1V859.0h-1ZM243,854.6h1V862.6h-1ZM244,850.3h1V864.2h-1ZM245,845.5h1V867.4h-1ZM246,848.7h1V871.3h-1ZM247,852.8h1V859.0h-1ZM248,854.4h1V859.0h-1ZM249,854.5h1V860.5h-1ZM250,845.6h1V866.8h-1ZM251,830.6h1V877.7h-1ZM252,824.6h1V890.2h-1ZM253,828.0h1V891.1h-1ZM254,831.4h1V888.6h-1ZM255,834.8h1V886.1h-1ZM256,838.5h1V881.2h-1ZM257,841.9h1V876.2h-1ZM258,824.4h1V877.0h-1ZM259,823.9h1V878.6h-1ZM260,821.3h1V894.3h-1ZM261,820.3h1V912.1h-1ZM262,814.8h1V926.1h-1ZM263,812.7h1V923.8h-1ZM264,820.2h1V920.8h-1ZM265,828.1h1V916.8h-1ZM266,829.4h1V907.5h-1ZM267,832.3h1V898.4h-1ZM268,833.1h1V893.0h-1ZM269,833.9h1V887.7h-1ZM270,837.4h1V883.9h-1ZM271,840.7h1V880.3h-1ZM272,842.6h1V876.6h-1ZM273,845.3h1V872.5h-1ZM274,847.8h1V868.2h-1ZM275,851.0h1V864.9h-1ZM276,855.1h1V862.4h-1ZM277,847.2h1V859.0h-1ZM278,826.3h1V859.0h-1ZM279,818.8h1V879.7h-1ZM280,831.0h1V874.3h-1ZM281,839.8h1V870.7h-1ZM282,842.7h1V890.3h-1ZM283,824.3h1V904.6h-1ZM284,820.4h1V895.0h-1ZM285,828.7h1V883.1h-1ZM286,843.0h1V868.3h-1ZM287,855.4h1V859.0h-1ZM288,856.7h1V859.0h-1ZM289,846.1h1V859.0h-1ZM290,833.7h1V877.2h-1ZM291,842.2h1V870.9h-1ZM292,851.4h1V864.9h-1ZM293,850.8h1V863.3h-1ZM294,849.7h1V868.1h-1ZM295,841.9h1V886.5h-1ZM296,819.8h1V901.3h-1ZM297,805.6h1V913.3h-1ZM298,795.3h1V920.6h-1ZM299,793.7h1V922.6h-1ZM300,793.5h1V923.7h-1ZM301,795.8h1V923.2h-1ZM302,797.0h1V922.7h-1ZM303,795.0h1V918.7h-1ZM304,793.4h1V911.9h-1ZM305,793.7h1V905.2h-1ZM306,794.4h1V910.6h-1ZM307,804.9h1V920.0h-1ZM308,810.6h1V921.2h-1ZM309,814.3h1V918.2h-1ZM310,819.4h1V915.2h-1ZM311,821.1h1V912.2h-1ZM312,821.1h1V909.4h-1ZM313,823.3h1V906.9h-1ZM314,823.5h1V904.4h-1ZM315,825.5h1V901.9h-1ZM316,832.1h1V898.2h-1ZM317,839.6h1V890.7h-1ZM318,847.7h1V883.2h-1ZM319,852.2h1V878.5h-1ZM320,848.6h1V877.2h-1ZM321,843.2h1V876.0h-1ZM322,837.0h1V878.3h-1ZM323,832.4h1V882.6h-1ZM324,831.6h1V886.2h-1ZM325,830.1h1V887.8h-1ZM326,837.8h1V880.6h-1ZM327,845.9h1V873.3h-1ZM328,849.7h1V866.8h-1ZM329,854.2h1V861.8h-1ZM330,840.7h1V887.1h-1ZM331,826.3h1V901.6h-1ZM332,820.9h1V904.6h-1ZM333,816.6h1V907.6h-1ZM334,816.3h1V908.1h-1ZM335,811.8h1V907.6h-1ZM336,806.2h1V907.1h-1ZM337,828.0h1V889.8h-1ZM338,840.6h1V871.2h-1ZM339,844.7h1V867.5h-1ZM340,841.9h1V867.2h-1ZM341,831.7h1V880.4h-1ZM342,819.1h1V898.1h-1ZM343,801.1h1V914.1h-1ZM344,787.0h1V926.7h-1ZM345,787.0h1V926.7h-1ZM346,787.0h1V925.0h-1ZM347,797.1h1V910.4h-1ZM348,823.6h1V895.7h-1ZM349,842.1h1V879.7h-1ZM350,850.0h1V863.7h-1ZM351,853.0h1V877.6h-1ZM352,835.8h1V887.0h-1ZM353,831.1h1V889.0h-1ZM354,828.0h1V891.4h-1ZM355,827.5h1V894.2h-1ZM356,824.4h1V897.0h-1ZM357,823.8h1V899.8h-1ZM358,818.6h1V903.6h-1ZM359,815.6h1V907.6h-1ZM360,813.6h1V911.6h-1ZM361,809.8h1V915.0h-1ZM362,811.0h1V917.4h-1ZM363,809.2h1V919.8h-1ZM364,809.3h1V922.2h-1ZM365,812.5h1V915.8h-1ZM366,814.4h1V908.3h-1ZM367,818.4h1V900.2h-1ZM368,832.7h1V886.2h-1ZM369,847.8h1V872.2h-1ZM370,853.8h1V863.6h-1ZM371,839.0h1V866.5h-1ZM372,815.5h1V874.7h-1ZM373,831.5h1V870.4h-1ZM374,847.1h1V866.3h-1ZM375,848.8h1V865.0h-1ZM376,850.0h1V863.6h-1ZM377,836.4h1V882.0h-1ZM378,821.9h1V899.2h-1ZM379,810.6h1V911.2h-1ZM380,814.0h1V918.7h-1ZM381,819.0h1V921.0h-1ZM382,819.4h1V920.4h-1ZM383,824.1h1V914.9h-1ZM384,827.3h1V909.4h-1ZM385,833.6h1V901.4h-1ZM386,837.7h1V891.4h-1ZM387,844.1h1V879.1h-1ZM388,849.1h1V865.4h-1ZM389,849.5h1V871.4h-1ZM390,838.7h1V877.4h-1ZM391,835.5h1V876.9h-1ZM392,835.2h1V876.2h-1ZM393,833.8h1V875.8h-1ZM394,835.9h1V877.4h-1ZM395,835.0h1V878.8h-1ZM396,838.0h1V873.8h-1ZM397,845.0h1V868.9h-1ZM398,851.0h1V859.0h-1ZM399,845.3h1V859.0h-1ZM400,830.3h1V878.0h-1ZM401,825.8h1V886.4h-1ZM402,829.9h1V891.9h-1ZM403,829.7h1V890.6h-1ZM404,828.9h1V888.2h-1ZM405,830.9h1V881.2h-1ZM406,834.2h1V874.5h-1ZM407,837.1h1V871.5h-1ZM408,841.6h1V868.5h-1ZM409,847.6h1V859.0h-1ZM410,852.0h1V859.0h-1ZM411,854.8h1V859.4h-1ZM412,856.7h1V859.4h-1ZM413,858.0h1V859.4h-1ZM414,858.0h1V859.4h-1ZM415,857.8h1V859.4h-1ZM416,857.8h1V859.4h-1ZM417,857.8h1V859.4h-1ZM418,857.8h1V859.4h-1ZM419,857.8h1V859.4h-1ZM420,857.8h1V859.4h-1ZM421,857.8h1V859.4h-1ZM422,857.8h1V859.4h-1ZM423,857.8h1V859.4h-1ZM424,857.8h1V859.4h-1ZM425,857.8h1V859.4h-1ZM426,857.8h1V859.4h-1ZM427,857.8h1V859.4h-1ZM428,857.8h1V859.4h-1ZM429,857.8h1V859.4h-1ZM430,857.8h1V859.4h-1ZM431,857.8h1V859.4h-1ZM432,857.8h1V859.4h-1ZM433,857.8h1V859.4h-1ZM434,857.8h1V859.4h-1ZM435,857.8h1V859.4h-1ZM436,857.8h1V859.4h-1ZM437,857.8h1V859.4h-1ZM438,857.8h1V859.4h-1ZM439,857.8h1V859.4h-1ZM440,857.8h1V859.4h-1ZM441,857.8h1V859.4h-1ZM442,857.8h1V859.4h-1ZM443,857.8h1V859.4h-1ZM444,857.8h1V859.4h-1ZM445,857.8h1V859.4h-1ZM446,857.8h1V859.4h-1ZM447,857.8h1V859.4h-1ZM448,857.8h1V859.4h-1ZM449,857.8h1V859.4h-1ZM450,857.8h1V859.4h-1ZM451,857.8h1V859.4h-1ZM452,857.8h1V859.4h-1ZM453,857.8h1V859.4h-1ZM454,857.8h1V859.4h-1ZM455,857.8h1V859.4h-1ZM456,857.8h1V859.4h-1ZM457,857.8h1V859.4h-1ZM458,857.8h1V859.4h-1ZM459,857.8h1V859.4h-1ZM460,857.8h1V859.4h-1ZM461,857.8h1V859.4h-1ZM462,857.8h1V859.4h-1ZM463,857.8h1V859.4h-1ZM464,857.8h1V859.4h-1ZM465,857.8h1V859.4h-1ZM466,857.8h1V859.4h-1ZM467,857.8h1V859.4h-1ZM468,857.8h1V859.4h-1ZM469,857.8h1V859.4h-1ZM470,857.8h1V859.4h-1ZM471,857.8h1V859.4h-1ZM472,857.8h1V859.4h-1ZM473,857.8h1V859.4h-1ZM474,857.8h1V859.4h-1ZM475,857.8h1V859.4h-1ZM476,857.8h1V859.4h-1ZM477,857.8h1V859.4h-1ZM478,857.8h1V859.4h-1ZM479,857.8h1V859.4h-1ZM480,857.8h1V859.4h-1ZM481,857.8h1V859.4h-1ZM482,857.8h1V859.4h-1ZM483,857.8h1V859.4h-1ZM484,857.8h1V859.4h-1ZM485,857.8h1V859.4h-1ZM486,857.8h1V859.4h-1ZM487,857.8h1V859.4h-1ZM488,857.8h1V859.4h-1ZM489,857.8h1V859.4h-1ZM490,857.8h1V859.4h-1ZM491,857.8h1V859.4h-1ZM492,857.8h1V859.4h-1ZM493,857.8h1V859.4h-1ZM494,857.8h1V859.4h-1ZM495,857.8h1V859.4h-1ZM496,857.8h1V859.4h-1ZM497,857.8h1V859.4h-1ZM498,857.8h1V859.4h-1ZM499,857.8h1V859.4h-1ZM500,857.8h1V859.4h-1ZM501,857.8h1V859.4h-1ZM502,857.8h1V859.4h-1ZM503,857.8h1V859.4h-1ZM504,857.8h1V859.4h-1ZM505,857.8h1V859.4h-1ZM506,857.8h1V859.4h-1ZM507,857.8h1V859.4h-1ZM508,857.8h1V859.4h-1ZM509,857.8h1V859.4h-1ZM510,857.8h1V859.4h-1ZM511,858.0h1V859.4h-1ZM512,858.0h1V859.0h-1ZM513,823.1h1V859.0h-1ZM514,829.4h1V859.0h-1ZM515,823.6h1V916.9h-1ZM516,791.1h1V926.5h-1ZM517,789.9h1V923.1h-1ZM518,788.7h1V919.8h-1ZM519,787.5h1V918.7h-1ZM520,790.5h1V917.7h-1ZM521,796.7h1V916.5h-1ZM522,803.0h1V914.0h-1ZM523,812.2h1V911.5h-1ZM524,817.9h1V910.1h-1ZM525,823.6h1V910.9h-1ZM526,817.9h1V909.3h-1ZM527,815.2h1V905.3h-1ZM528,806.3h1V905.4h-1ZM529,807.1h1V911.7h-1ZM530,807.9h1V917.4h-1ZM531,802.6h1V921.7h-1ZM532,792.3h1V926.0h-1ZM533,790.8h1V917.5h-1ZM534,798.4h1V906.7h-1ZM535,809.1h1V896.6h-1ZM536,822.6h1V887.9h-1ZM537,831.5h1V879.1h-1ZM538,834.2h1V877.1h-1ZM539,831.9h1V879.8h-1ZM540,828.5h1V886.0h-1ZM541,822.9h1V896.0h-1ZM542,817.6h1V906.0h-1ZM543,812.2h1V902.9h-1ZM544,820.3h1V893.6h-1ZM545,828.9h1V884.4h-1ZM546,818.0h1V859.0h-1ZM547,801.5h1V859.0h-1ZM548,796.7h1V916.1h-1ZM549,794.7h1V926.3h-1ZM550,792.7h1V925.7h-1ZM551,791.6h1V923.7h-1ZM552,793.1h1V917.7h-1ZM553,794.6h1V911.7h-1ZM554,800.4h1V905.7h-1ZM555,811.1h1V898.5h-1ZM556,819.5h1V891.0h-1ZM557,825.5h1V883.5h-1ZM558,828.9h1V896.2h-1ZM559,823.2h1V909.7h-1ZM560,820.7h1V921.3h-1ZM561,820.1h1V922.9h-1ZM562,818.2h1V924.5h-1ZM563,819.0h1V926.1h-1ZM564,824.3h1V919.5h-1ZM565,829.9h1V908.5h-1ZM566,837.1h1V897.5h-1ZM567,849.1h1V859.0h-1ZM568,856.0h1V859.0h-1ZM569,856.8h1V859.0h-1ZM570,858.0h1V859.0h-1ZM571,858.0h1V867.5h-1ZM572,824.2h1V873.5h-1ZM573,833.8h1V859.0h-1ZM574,847.0h1V859.0h-1ZM575,849.6h1V859.0h-1ZM576,837.9h1V898.1h-1ZM577,828.7h1V902.3h-1ZM578,826.3h1V906.5h-1ZM579,824.3h1V910.7h-1ZM580,821.9h1V913.7h-1ZM581,819.5h1V915.7h-1ZM582,817.6h1V917.7h-1ZM583,816.4h1V919.8h-1ZM584,814.0h1V922.4h-1ZM585,811.6h1V925.1h-1ZM586,809.2h1V917.2h-1ZM587,810.8h1V908.5h-1ZM588,817.7h1V904.4h-1ZM589,822.6h1V901.1h-1ZM590,825.4h1V897.7h-1ZM591,828.5h1V888.5h-1ZM592,832.3h1V879.2h-1ZM593,838.4h1V871.8h-1ZM594,845.1h1V871.0h-1ZM595,849.4h1V875.9h-1ZM596,837.8h1V887.1h-1ZM597,828.3h1V888.1h-1ZM598,830.0h1V885.1h-1ZM599,833.0h1V882.1h-1ZM600,838.0h1V891.0h-1ZM601,844.8h1V868.7h-1ZM602,852.5h1V859.0h-1ZM603,857.2h1V859.0h-1ZM604,858.0h1V859.4h-1ZM605,858.0h1V859.0h-1ZM606,822.1h1V859.0h-1ZM607,804.4h1V859.0h-1ZM608,811.9h1V909.7h-1ZM609,820.9h1V912.0h-1ZM610,813.1h1V913.3h-1ZM611,798.9h1V913.0h-1ZM612,793.0h1V912.8h-1ZM613,801.9h1V911.7h-1ZM614,805.0h1V910.1h-1ZM615,807.9h1V908.5h-1ZM616,810.6h1V907.2h-1ZM617,809.7h1V908.2h-1ZM618,810.6h1V909.2h-1ZM619,811.6h1V908.7h-1ZM620,810.0h1V904.9h-1ZM621,811.4h1V901.1h-1ZM622,815.0h1V897.3h-1ZM623,822.0h1V894.2h-1ZM624,830.0h1V891.2h-1ZM625,836.9h1V888.2h-1ZM626,840.8h1V885.1h-1ZM627,845.6h1V881.8h-1ZM628,847.1h1V879.7h-1ZM629,837.7h1V883.5h-1ZM630,828.5h1V887.2h-1ZM631,824.7h1V891.4h-1ZM632,821.8h1V896.4h-1ZM633,823.7h1V898.7h-1ZM634,824.1h1V893.7h-1ZM635,826.9h1V888.7h-1ZM636,834.5h1V878.8h-1ZM637,847.8h1V859.0h-1ZM638,846.9h1V859.0h-1ZM639,823.2h1V860.8h-1ZM640,814.6h1V874.9h-1ZM641,832.1h1V876.0h-1ZM642,849.4h1V867.0h-1ZM643,849.9h1V862.7h-1ZM644,849.8h1V863.7h-1ZM645,849.7h1V863.7h-1ZM646,850.6h1V861.9h-1ZM647,852.1h1V859.0h-1ZM648,853.4h1V859.0h-1ZM649,840.9h1V882.3h-1ZM650,829.6h1V884.5h-1ZM651,841.8h1V871.8h-1ZM652,851.7h1V859.0h-1ZM653,855.2h1V859.0h-1ZM654,856.7h1V859.0h-1ZM655,853.1h1V862.1h-1ZM656,847.0h1V863.4h-1ZM657,847.2h1V859.0h-1ZM658,855.5h1V859.0h-1ZM659,854.4h1V859.9h-1ZM660,853.5h1V860.3h-1ZM661,853.4h1V860.7h-1ZM662,854.4h1V860.4h-1ZM663,855.4h1V859.0h-1ZM664,856.4h1V859.0h-1ZM665,843.4h1V859.0h-1ZM666,830.7h1V899.2h-1ZM667,829.2h1V898.4h-1ZM668,831.5h1V895.0h-1ZM669,838.0h1V888.5h-1ZM670,844.3h1V877.9h-1ZM671,849.4h1V867.3h-1ZM672,852.5h1V859.0h-1ZM673,852.5h1V859.0h-1ZM674,850.0h1V863.6h-1ZM675,847.0h1V866.8h-1ZM676,843.6h1V870.5h-1ZM677,840.7h1V874.3h-1ZM678,839.8h1V875.5h-1ZM679,841.1h1V875.5h-1ZM680,842.0h1V875.5h-1ZM681,841.4h1V875.5h-1ZM682,841.9h1V876.5h-1ZM683,840.8h1V878.5h-1ZM684,839.8h1V880.5h-1ZM685,837.0h1V880.8h-1ZM686,838.2h1V880.3h-1ZM687,838.5h1V879.8h-1ZM688,839.2h1V879.3h-1ZM689,837.2h1V879.1h-1ZM690,836.3h1V879.3h-1ZM691,835.5h1V879.4h-1ZM692,836.0h1V879.6h-1ZM693,835.6h1V879.3h-1ZM694,836.6h1V877.8h-1ZM695,838.2h1V876.3h-1ZM696,838.6h1V874.8h-1ZM697,838.9h1V873.3h-1ZM698,841.1h1V871.0h-1ZM699,845.4h1V868.6h-1ZM700,849.2h1V866.3h-1ZM701,851.2h1V864.0h-1ZM702,853.4h1V859.0h-1ZM703,854.8h1V859.0h-1ZM704,855.9h1V859.4h-1ZM705,857.0h1V859.4h-1ZM706,858.0h1V859.4h-1ZM707,858.0h1V859.4h-1ZM708,857.9h1V859.4h-1ZM709,857.9h1V859.4h-1ZM710,857.9h1V859.4h-1ZM711,857.9h1V859.4h-1ZM712,857.9h1V859.4h-1ZM713,857.9h1V859.4h-1ZM714,857.9h1V859.4h-1ZM715,857.9h1V859.4h-1ZM716,857.9h1V859.4h-1ZM717,857.9h1V859.4h-1ZM718,857.9h1V859.4h-1ZM719,857.9h1V859.4h-1ZM720,857.9h1V859.4h-1ZM721,857.9h1V859.4h-1ZM722,857.9h1V859.4h-1ZM723,857.9h1V859.4h-1ZM724,857.9h1V859.4h-1ZM725,857.9h1V859.4h-1ZM726,857.9h1V859.4h-1ZM727,857.9h1V859.4h-1ZM728,857.9h1V859.4h-1ZM729,857.9h1V859.4h-1ZM730,857.9h1V859.4h-1ZM731,857.9h1V859.4h-1ZM732,857.9h1V859.4h-1ZM733,857.9h1V859.4h-1ZM734,857.9h1V859.4h-1ZM735,857.9h1V859.4h-1ZM736,857.9h1V859.4h-1ZM737,857.9h1V859.4h-1ZM738,857.9h1V859.4h-1ZM739,857.9h1V859.4h-1ZM740,857.9h1V859.4h-1ZM741,857.9h1V859.4h-1ZM742,857.9h1V859.4h-1ZM743,857.9h1V859.4h-1ZM744,857.9h1V859.4h-1ZM745,857.9h1V859.4h-1ZM746,857.9h1V859.4h-1ZM747,857.9h1V859.4h-1ZM748,857.9h1V859.4h-1ZM749,857.9h1V859.4h-1ZM750,857.9h1V859.4h-1ZM751,857.9h1V859.4h-1ZM752,857.9h1V859.4h-1ZM753,857.9h1V859.4h-1ZM754,857.9h1V859.4h-1ZM755,857.9h1V859.4h-1ZM756,857.9h1V859.4h-1ZM757,857.9h1V859.4h-1ZM758,857.9h1V859.4h-1ZM759,857.9h1V859.4h-1ZM760,857.9h1V859.4h-1ZM761,857.9h1V859.4h-1ZM762,857.9h1V859.4h-1ZM763,857.9h1V859.4h-1ZM764,857.9h1V859.4h-1ZM765,858.0h1V859.0h-1ZM766,858.0h1V859.0h-1Z" fill="#3232c8"/><path d="M142,847.3h1V872.0h-1ZM143,846.2h1V870.5h-1ZM144,843.8h1V868.8h-1ZM145,844.5h1V868.5h-1ZM146,847.5h1V866.7h-1ZM147,850.0h1V865.2h-1ZM148,852.2h1V863.2h-1ZM149,854.4h1V859.0h-1ZM150,855.4h1V859.0h-1ZM151,844.4h1V865.9h-1ZM152,821.0h1V875.4h-1ZM153,826.6h1V878.8h-1ZM154,833.7h1V880.4h-1ZM155,841.7h1V878.3h-1ZM156,846.5h1V870.0h-1ZM157,847.8h1V865.0h-1ZM158,848.5h1V866.5h-1ZM159,848.1h1V865.0h-1ZM160,847.7h1V866.2h-1ZM161,847.3h1V867.0h-1ZM162,846.6h1V866.6h-1ZM163,845.8h1V866.4h-1ZM164,845.0h1V866.4h-1ZM165,845.2h1V866.2h-1ZM166,847.2h1V865.5h-1ZM167,849.2h1V864.9h-1ZM168,845.5h1V864.6h-1ZM169,838.7h1V865.3h-1ZM170,838.1h1V870.9h-1ZM171,837.9h1V875.9h-1ZM172,844.3h1V870.3h-1ZM173,850.3h1V859.0h-1ZM174,855.5h1V859.0h-1ZM175,858.0h1V859.0h-1ZM176,858.0h1V859.4h-1ZM177,858.0h1V860.3h-1ZM178,846.8h1V862.1h-1ZM179,851.6h1V861.1h-1ZM180,844.8h1V859.0h-1ZM181,820.4h1V859.0h-1ZM182,822.0h1V889.2h-1ZM183,823.8h1V890.3h-1ZM184,826.5h1V888.9h-1ZM185,828.6h1V884.9h-1ZM186,820.6h1V890.9h-1ZM187,812.6h1V893.8h-1ZM188,813.0h1V895.0h-1ZM189,813.8h1V896.1h-1ZM190,814.6h1V897.3h-1ZM191,814.5h1V898.2h-1ZM192,813.3h1V898.7h-1ZM193,812.2h1V899.2h-1ZM194,811.0h1V899.7h-1ZM195,810.7h1V899.8h-1ZM196,812.9h1V898.8h-1ZM197,815.2h1V897.8h-1ZM198,817.7h1V896.1h-1ZM199,820.7h1V893.4h-1ZM200,823.7h1V890.2h-1ZM201,828.6h1V885.9h-1ZM202,834.6h1V881.4h-1ZM203,838.0h1V876.4h-1ZM204,839.6h1V871.4h-1ZM205,845.6h1V866.8h-1ZM206,851.6h1V862.2h-1ZM207,855.1h1V859.0h-1ZM208,851.6h1V859.0h-1ZM209,843.9h1V869.6h-1ZM210,838.5h1V874.6h-1ZM211,835.2h1V879.1h-1ZM212,832.8h1V880.1h-1ZM213,831.8h1V878.5h-1ZM214,830.8h1V875.8h-1ZM215,833.2h1V873.6h-1ZM216,837.6h1V871.6h-1ZM217,842.0h1V869.6h-1ZM218,845.7h1V867.6h-1ZM219,844.1h1V867.5h-1ZM220,842.5h1V870.2h-1ZM221,840.9h1V873.4h-1ZM222,836.5h1V877.9h-1ZM223,830.3h1V882.4h-1ZM224,824.1h1V887.0h-1ZM225,818.3h1V891.7h-1ZM226,816.3h1V895.2h-1ZM227,814.3h1V897.2h-1ZM228,813.1h1V899.2h-1ZM229,813.6h1V894.1h-1ZM230,825.3h1V884.1h-1ZM231,830.5h1V881.5h-1ZM232,827.9h1V886.5h-1ZM233,822.8h1V891.5h-1ZM234,814.2h1V896.5h-1ZM235,808.0h1V900.6h-1ZM236,808.0h1V902.6h-1ZM237,808.0h1V904.6h-1ZM238,818.3h1V896.2h-1ZM239,838.5h1V876.9h-1ZM240,850.5h1V859.0h-1ZM241,855.4h1V859.0h-1ZM242,857.1h1V859.0h-1ZM243,856.8h1V859.4h-1ZM244,855.0h1V859.4h-1ZM245,853.3h1V859.4h-1ZM246,853.9h1V859.4h-1ZM247,855.2h1V859.0h-1ZM248,855.7h1V859.0h-1ZM249,855.7h1V859.4h-1ZM250,850.3h1V861.7h-1ZM251,841.0h1V865.9h-1ZM252,836.8h1V870.9h-1ZM253,838.3h1V871.1h-1ZM254,839.8h1V869.8h-1ZM255,842.3h1V868.6h-1ZM256,845.3h1V866.9h-1ZM257,848.3h1V865.2h-1ZM258,836.9h1V867.9h-1ZM259,833.4h1V871.2h-1ZM260,829.9h1V878.9h-1ZM261,827.6h1V885.0h-1ZM262,827.6h1V886.0h-1ZM263,828.0h1V884.4h-1ZM264,829.3h1V882.6h-1ZM265,831.0h1V880.9h-1ZM266,834.5h1V879.2h-1ZM267,838.0h1V877.5h-1ZM268,841.7h1V874.8h-1ZM269,845.7h1V872.1h-1ZM270,847.9h1V871.0h-1ZM271,850.1h1V869.9h-1ZM272,852.2h1V868.8h-1ZM273,853.7h1V866.4h-1ZM274,855.1h1V863.4h-1ZM275,856.3h1V861.6h-1ZM276,857.3h1V860.6h-1ZM277,856.0h1V859.0h-1ZM278,852.3h1V859.0h-1ZM279,851.6h1V860.6h-1ZM280,855.6h1V860.1h-1ZM281,856.1h1V862.1h-1ZM282,853.6h1V871.4h-1ZM283,842.0h1V878.3h-1ZM284,839.0h1V874.3h-1ZM285,845.0h1V868.9h-1ZM286,851.1h1V861.7h-1ZM287,857.3h1V859.0h-1ZM288,857.7h1V859.0h-1ZM289,857.2h1V859.0h-1ZM290,856.2h1V860.8h-1ZM291,855.2h1V860.8h-1ZM292,854.2h1V860.7h-1ZM293,853.7h1V859.9h-1ZM294,853.2h1V861.7h-1ZM295,849.9h1V868.9h-1ZM296,838.9h1V878.7h-1ZM297,827.0h1V890.3h-1ZM298,818.9h1V897.3h-1ZM299,815.3h1V899.0h-1ZM300,813.5h1V899.8h-1ZM301,815.2h1V899.0h-1ZM302,816.9h1V898.3h-1ZM303,818.5h1V897.0h-1ZM304,820.6h1V895.2h-1ZM305,825.0h1V893.5h-1ZM306,829.0h1V891.8h-1ZM307,827.5h1V890.1h-1ZM308,826.0h1V888.8h-1ZM309,825.2h1V887.6h-1ZM310,826.7h1V886.4h-1ZM311,828.2h1V885.3h-1ZM312,829.4h1V884.2h-1ZM313,830.2h1V883.2h-1ZM314,831.0h1V882.2h-1ZM315,831.8h1V881.2h-1ZM316,838.7h1V879.2h-1ZM317,846.0h1V874.2h-1ZM318,852.5h1V869.2h-1ZM319,855.0h1V866.2h-1ZM320,854.2h1V865.7h-1ZM321,852.2h1V865.2h-1ZM322,850.2h1V864.6h-1ZM323,848.7h1V863.9h-1ZM324,848.7h1V864.1h-1ZM325,848.9h1V864.9h-1ZM326,850.2h1V863.9h-1ZM327,851.5h1V862.9h-1ZM328,853.5h1V861.5h-1ZM329,855.5h1V859.5h-1ZM330,846.7h1V871.5h-1ZM331,837.0h1V877.9h-1ZM332,834.5h1V878.4h-1ZM333,833.5h1V878.9h-1ZM334,832.5h1V879.6h-1ZM335,832.2h1V880.3h-1ZM336,831.9h1V881.1h-1ZM337,843.9h1V872.8h-1ZM338,850.4h1V863.8h-1ZM339,851.1h1V862.8h-1ZM340,850.2h1V863.4h-1ZM341,847.2h1V867.9h-1ZM342,841.4h1V875.2h-1ZM343,829.4h1V885.2h-1ZM344,820.1h1V893.0h-1ZM345,820.8h1V893.0h-1ZM346,821.6h1V891.9h-1ZM347,827.2h1V881.9h-1ZM348,839.9h1V872.0h-1ZM349,849.9h1V866.0h-1ZM350,853.9h1V860.0h-1ZM351,855.8h1V859.4h-1ZM352,849.8h1V863.3h-1ZM353,845.1h1V870.9h-1ZM354,840.6h1V875.9h-1ZM355,836.1h1V876.9h-1ZM356,835.1h1V877.9h-1ZM357,834.1h1V878.9h-1ZM358,832.8h1V881.4h-1ZM359,830.3h1V884.0h-1ZM360,827.8h1V886.6h-1ZM361,825.8h1V888.5h-1ZM362,824.6h1V889.3h-1ZM363,823.4h1V890.1h-1ZM364,822.2h1V890.9h-1ZM365,824.7h1V888.3h-1ZM366,827.7h1V885.3h-1ZM367,831.4h1V881.8h-1ZM368,842.1h1V873.5h-1ZM369,852.7h1V865.1h-1ZM370,855.8h1V861.1h-1ZM371,855.3h1V860.0h-1ZM372,853.0h1V860.8h-1ZM373,853.7h1V860.8h-1ZM374,854.3h1V860.8h-1ZM375,854.3h1V860.8h-1ZM376,854.3h1V860.8h-1ZM377,845.7h1V860.8h-1ZM378,837.0h1V864.0h-1ZM379,829.8h1V878.4h-1ZM380,830.0h1V885.4h-1ZM381,830.3h1V884.1h-1ZM382,831.2h1V882.7h-1ZM383,833.2h1V881.2h-1ZM384,835.2h1V879.7h-1ZM385,838.9h1V877.1h-1ZM386,843.9h1V873.8h-1ZM387,848.9h1V868.8h-1ZM388,852.4h1V862.2h-1ZM389,852.8h1V862.2h-1ZM390,848.8h1V862.2h-1ZM391,849.3h1V862.2h-1ZM392,850.0h1V862.2h-1ZM393,849.9h1V862.2h-1ZM394,849.7h1V862.2h-1ZM395,849.5h1V862.2h-1ZM396,850.2h1V862.2h-1ZM397,852.4h1V862.2h-1ZM398,854.7h1V859.0h-1ZM399,850.5h1V859.0h-1ZM400,841.0h1V868.6h-1ZM401,839.1h1V871.4h-1ZM402,840.4h1V873.0h-1ZM403,840.8h1V871.7h-1ZM404,840.4h1V870.2h-1ZM405,841.5h1V868.2h-1ZM406,844.0h1V866.2h-1ZM407,846.5h1V864.2h-1ZM408,849.6h1V862.2h-1ZM409,852.9h1V859.0h-1ZM410,855.2h1V859.0h-1ZM411,856.7h1V859.4h-1ZM412,857.6h1V859.4h-1ZM413,858.0h1V859.4h-1ZM414,858.0h1V859.4h-1ZM415,858.0h1V859.4h-1ZM416,858.0h1V859.4h-1ZM417,858.0h1V859.4h-1ZM418,858.0h1V859.4h-1ZM419,858.0h1V859.4h-1ZM420,858.0h1V859.4h-1ZM421,858.0h1V859.4h-1ZM422,858.0h1V859.4h-1ZM423,858.0h1V859.4h-1ZM424,858.0h1V859.4h-1ZM425,858.0h1V859.4h-1ZM426,858.0h1V859.4h-1ZM427,858.0h1V859.4h-1ZM428,858.0h1V859.4h-1ZM429,858.0h1V859.4h-1ZM430,858.0h1V859.4h-1ZM431,858.0h1V859.4h-1ZM432,858.0h1V859.4h-1ZM433,858.0h1V859.4h-1ZM434,858.0h1V859.4h-1ZM435,858.0h1V859.4h-1ZM436,858.0h1V859.4h-1ZM437,858.0h1V859.4h-1ZM438,858.0h1V859.4h-1ZM439,858.0h1V859.4h-1ZM440,858.0h1V859.4h-1ZM441,858.0h1V859.4h-1ZM442,858.0h1V859.4h-1ZM443,858.0h1V859.4h-1ZM444,858.0h1V859.4h-1ZM445,858.0h1V859.4h-1ZM446,858.0h1V859.4h-1ZM447,858.0h1V859.4h-1ZM448,858.0h1V859.4h-1ZM449,858.0h1V859.4h-1ZM450,858.0h1V859.4h-1ZM451,858.0h1V859.4h-1ZM452,858.0h1V859.4h-1ZM453,858.0h1V859.4h-1ZM454,858.0h1V859.4h-1ZM455,858.0h1V859.4h-1ZM456,858.0h1V859.4h-1ZM457,858.0h1V859.4h-1ZM458,858.0h1V859.4h-1ZM459,858.0h1V859.4h-1ZM460,858.0h1V859.4h-1ZM461,858.0h1V859.4h-1ZM462,858.0h1V859.4h-1ZM463,858.0h1V859.4h-1ZM464,858.0h1V859.4h-1ZM465,858.0h1V859.4h-1ZM466,858.0h1V859.4h-1ZM467,858.0h1V859.4h-1ZM468,858.0h1V859.4h-1ZM469,858.0h1V859.4h-1ZM470,858.0h1V859.4h-1ZM471,858.0h1V859.4h-1ZM472,858.0h1V859.4h-1ZM473,858.0h1V859.4h-1ZM474,858.0h1V859.4h-1ZM475,858.0h1V859.4h-1ZM476,858.0h1V859.4h-1ZM477,858.0h1V859.4h-1ZM478,858.0h1V859.4h-1ZM479,858.0h1V859.4h-1ZM480,858.0h1V859.4h-1ZM481,858.0h1V859.4h-1ZM482,858.0h1V859.4h-1ZM483,858.0h1V859.4h-1ZM484,858.0h1V859.4h-1ZM485,858.0h1V859.4h-1ZM486,858.0h1V859.4h-1ZM487,858.0h1V859.4h-1ZM488,858.0h1V859.4h-1ZM489,858.0h1V859.4h-1ZM490,858.0h1V859.4h-1ZM491,858.0h1V859.4h-1ZM492,858.0h1V859.4h-1ZM493,858.0h1V859.4h-1ZM494,858.0h1V859.4h-1ZM495,858.0h1V859.4h-1ZM496,858.0h1V859.4h-1ZM497,858.0h1V859.4h-1ZM498,858.0h1V859.4h-1ZM499,858.0h1V859.4h-1ZM500,858.0h1V859.4h-1ZM501,858.0h1V859.4h-1ZM502,858.0h1V859.4h-1ZM503,858.0h1V859.4h-1ZM504,858.0h1V859.4h-1ZM505,858.0h1V859.4h-1ZM506,858.0h1V859.4h-1ZM507,858.0h1V859.4h-1ZM508,858.0h1V859.4h-1ZM509,858.0h1V859.4h-1ZM510,858.0h1V859.4h-1ZM511,858.0h1V859.4h-1ZM512,858.0h1V859.0h-1ZM513,850.8h1V859.0h-1ZM514,847.9h1V859.0h-1ZM515,836.1h1V887.4h-1ZM516,815.1h1V898.6h-1ZM517,815.7h1V897.9h-1ZM518,816.3h1V897.3h-1ZM519,816.9h1V896.8h-1ZM520,818.5h1V896.3h-1ZM521,821.0h1V895.0h-1ZM522,823.5h1V889.8h-1ZM523,826.2h1V884.5h-1ZM524,829.0h1V881.1h-1ZM525,831.7h1V881.1h-1ZM526,831.4h1V881.5h-1ZM527,831.0h1V882.1h-1ZM528,830.6h1V882.9h-1ZM529,830.0h1V883.9h-1ZM530,829.3h1V886.5h-1ZM531,824.9h1V892.8h-1ZM532,817.9h1V899.1h-1ZM533,815.8h1V894.8h-1ZM534,818.8h1V888.5h-1ZM535,823.5h1V881.9h-1ZM536,830.8h1V874.9h-1ZM537,838.6h1V867.9h-1ZM538,847.6h1V865.0h-1ZM539,847.3h1V865.0h-1ZM540,845.8h1V866.0h-1ZM541,844.5h1V868.0h-1ZM542,845.2h1V870.0h-1ZM543,845.9h1V869.3h-1ZM544,847.8h1V867.3h-1ZM545,849.8h1V865.3h-1ZM546,840.7h1V859.0h-1ZM547,830.0h1V859.0h-1ZM548,824.2h1V893.6h-1ZM549,819.8h1V900.3h-1ZM550,815.4h1V900.5h-1ZM551,812.5h1V900.5h-1ZM552,813.5h1V899.5h-1ZM553,814.5h1V898.5h-1ZM554,820.6h1V897.5h-1ZM555,832.6h1V890.7h-1ZM556,840.3h1V882.2h-1ZM557,840.3h1V873.7h-1ZM558,838.9h1V878.5h-1ZM559,833.9h1V883.7h-1ZM560,828.9h1V888.0h-1ZM561,826.7h1V887.2h-1ZM562,827.7h1V886.4h-1ZM563,828.7h1V885.6h-1ZM564,833.0h1V881.9h-1ZM565,839.0h1V876.6h-1ZM566,845.7h1V871.4h-1ZM567,853.1h1V859.0h-1ZM568,857.3h1V859.0h-1ZM569,857.6h1V859.0h-1ZM570,858.0h1V859.0h-1ZM571,858.0h1V859.4h-1ZM572,854.5h1V859.4h-1ZM573,854.8h1V859.0h-1ZM574,855.4h1V859.0h-1ZM575,851.8h1V859.0h-1ZM576,843.2h1V880.5h-1ZM577,836.4h1V881.7h-1ZM578,833.4h1V882.9h-1ZM579,830.4h1V884.1h-1ZM580,829.0h1V884.7h-1ZM581,829.0h1V884.9h-1ZM582,829.0h1V885.1h-1ZM583,829.0h1V885.4h-1ZM584,827.4h1V886.4h-1ZM585,825.8h1V887.4h-1ZM586,824.2h1V886.2h-1ZM587,824.8h1V884.9h-1ZM588,827.3h1V883.6h-1ZM589,829.8h1V882.3h-1ZM590,833.7h1V881.0h-1ZM591,838.2h1V874.2h-1ZM592,842.7h1V867.5h-1ZM593,846.3h1V862.2h-1ZM594,849.8h1V862.2h-1ZM595,852.4h1V864.1h-1ZM596,848.4h1V868.1h-1ZM597,844.5h1V868.1h-1ZM598,846.0h1V866.6h-1ZM599,847.5h1V865.1h-1ZM600,849.4h1V862.6h-1ZM601,852.6h1V859.9h-1ZM602,855.9h1V859.0h-1ZM603,857.9h1V859.0h-1ZM604,858.0h1V859.4h-1ZM605,858.0h1V859.0h-1ZM606,846.1h1V859.0h-1ZM607,837.6h1V859.0h-1ZM608,831.6h1V879.2h-1ZM609,826.0h1V884.4h-1ZM610,823.5h1V888.2h-1ZM611,821.0h1V890.2h-1ZM612,819.8h1V892.2h-1ZM613,821.5h1V892.4h-1ZM614,823.3h1V891.4h-1ZM615,824.2h1V890.4h-1ZM616,824.4h1V889.5h-1ZM617,824.6h1V888.7h-1ZM618,824.8h1V888.0h-1ZM619,826.8h1V887.1h-1ZM620,828.8h1V886.1h-1ZM621,830.8h1V885.1h-1ZM622,833.0h1V884.1h-1ZM623,835.4h1V880.0h-1ZM624,837.8h1V875.0h-1ZM625,840.2h1V870.0h-1ZM626,843.7h1V866.2h-1ZM627,847.2h1V865.6h-1ZM628,849.3h1V865.6h-1ZM629,845.3h1V868.8h-1ZM630,841.3h1V872.1h-1ZM631,838.4h1V873.7h-1ZM632,837.0h1V872.7h-1ZM633,836.5h1V871.9h-1ZM634,838.0h1V871.4h-1ZM635,839.5h1V870.9h-1ZM636,844.0h1V867.6h-1ZM637,852.0h1V859.0h-1ZM638,857.0h1V859.0h-1ZM639,856.6h1V859.4h-1ZM640,856.1h1V860.4h-1ZM641,855.1h1V860.8h-1ZM642,854.2h1V860.8h-1ZM643,853.8h1V860.5h-1ZM644,853.4h1V859.8h-1ZM645,853.0h1V859.4h-1ZM646,853.5h1V859.4h-1ZM647,854.5h1V859.0h-1ZM648,855.5h1V859.0h-1ZM649,847.8h1V861.5h-1ZM650,840.4h1V861.6h-1ZM651,848.4h1V860.3h-1ZM652,854.4h1V859.0h-1ZM653,856.6h1V859.0h-1ZM654,857.4h1V859.0h-1ZM655,856.7h1V859.4h-1ZM656,856.1h1V859.4h-1ZM657,855.9h1V859.0h-1ZM658,856.2h1V859.0h-1ZM659,855.4h1V859.4h-1ZM660,854.7h1V859.4h-1ZM661,854.7h1V859.4h-1ZM662,855.5h1V859.4h-1ZM663,856.3h1V859.0h-1ZM664,857.1h1V859.0h-1ZM665,847.9h1V859.0h-1ZM666,838.5h1V874.6h-1ZM667,838.6h1V874.3h-1ZM668,840.0h1V872.8h-1ZM669,843.9h1V870.3h-1ZM670,848.6h1V866.3h-1ZM671,851.4h1V862.3h-1ZM672,853.4h1V859.0h-1ZM673,853.5h1V859.0h-1ZM674,852.2h1V861.5h-1ZM675,851.0h1V862.9h-1ZM676,850.0h1V864.4h-1ZM677,849.0h1V865.9h-1ZM678,848.5h1V866.7h-1ZM679,848.3h1V867.2h-1ZM680,848.0h1V867.7h-1ZM681,847.5h1V868.2h-1ZM682,847.0h1V868.9h-1ZM683,846.6h1V869.6h-1ZM684,846.6h1V870.4h-1ZM685,846.6h1V870.5h-1ZM686,846.1h1V870.3h-1ZM687,845.6h1V870.2h-1ZM688,845.0h1V870.0h-1ZM689,844.3h1V869.8h-1ZM690,843.5h1V869.4h-1ZM691,843.2h1V869.1h-1ZM692,843.6h1V868.8h-1ZM693,844.0h1V868.3h-1ZM694,844.4h1V867.5h-1ZM695,845.1h1V866.6h-1ZM696,845.9h1V865.8h-1ZM697,846.7h1V865.0h-1ZM698,848.0h1V864.1h-1ZM699,850.0h1V863.3h-1ZM700,851.8h1V862.5h-1ZM701,853.3h1V861.6h-1ZM702,854.8h1V859.0h-1ZM703,856.0h1V859.0h-1ZM704,856.8h1V859.4h-1ZM705,857.5h1V859.4h-1ZM706,858.0h1V859.4h-1ZM707,858.0h1V859.4h-1ZM708,858.0h1V859.4h-1ZM709,858.0h1V859.4h-1ZM710,858.0h1V859.4h-1ZM711,858.0h1V859.4h-1ZM712,858.0h1V859.4h-1ZM713,858.0h1V859.4h-1ZM714,858.0h1V859.4h-1ZM715,858.0h1V859.4h-1ZM716,858.0h1V859.4h-1ZM717,858.0h1V859.4h-1ZM718,858.0h1V859.4h-1ZM719,858.0h1V859.4h-1ZM720,858.0h1V859.4h-1ZM721,858.0h1V859.4h-1ZM722,858.0h1V859.4h-1ZM723,858.0h1V859.4h-1ZM724,858.0h1V859.4h-1ZM725,858.0h1V859.4h-1ZM726,858.0h1V859.4h-1ZM727,858.0h1V859.4h-1ZM728,858.0h1V859.4h-1ZM729,858.0h1V859.4h-1ZM730,858.0h1V859.4h-1ZM731,858.0h1V859.4h-1ZM732,858.0h1V859.4h-1ZM733,858.0h1V859.4h-1ZM734,858.0h1V859.4h-1ZM735,858.0h1V859.4h-1ZM736,858.0h1V859.4h-1ZM737,858.0h1V859.4h-1ZM738,858.0h1V859.4h-1ZM739,858.0h1V859.4h-1ZM740,858.0h1V859.4h-1ZM741,858.0h1V859.4h-1ZM742,858.0h1V859.4h-1ZM743,858.0h1V859.4h-1ZM744,858.0h1V859.4h-1ZM745,858.0h1V859.4h-1ZM746,858.0h1V859.4h-1ZM747,858.0h1V859.4h-1ZM748,858.0h1V859.4h-1ZM749,858.0h1V859.4h-1ZM750,858.0h1V859.4h-1ZM751,858.0h1V859.4h-1ZM752,858.0h1V859.4h-1ZM753,858.0h1V859.4h-1ZM754,858.0h1V859.4h-1ZM755,858.0h1V859.4h-1ZM756,858.0h1V859.4h-1ZM757,858.0h1V859.4h-1ZM758,858.0h1V859.4h-1ZM759,858.0h1V859.4h-1ZM760,858.0h1V859.4h-1ZM761,858.0h1V859.4h-1ZM762,858.0h1V859.4h-1ZM763,858.0h1V859.4h-1ZM764,858.0h1V859.4h-1ZM765,858.0h1V859.0h-1ZM766,858.0h1V859.0h-1Z" fill="#6464dc"/><rect x="142" y="858" width="625" height="1" fill="#3232c8"/></g></svg>
<div class="r" style="left:824px;top:712px;width:1px;height:68px;background:#c81e28"></div>
<div class="r" style="left:824px;top:787px;width:1px;height:142.7px;background:#c81e28"></div>
<div class="r" style="left:903.8px;top:712px;width:2.2px;height:221px;background:#111"></div>
<div class="r" style="left:906px;top:712px;width:1.5px;height:221px;background:#f0f0a0"></div>
<div class="r" style="left:907.5px;top:712px;width:2.5px;height:221px;background:#d8d8a0"></div>
<div class="r" style="left:4px;top:933.8px;width:906px;height:28.4px;background:#a8a8a8"></div>
<div class="r" style="left:697px;top:958.8px;width:186px;height:3.2px;background:#f47840"></div>
<div class="r" style="left:907px;top:775px;width:3px;height:187px;background:#f07840"></div>
<div class="r" style="left:910px;top:762px;width:10px;height:20px;background:#8a8a88;border-radius:2px"></div>
<div class="r" style="left:4px;top:962px;width:906px;height:57px;background:#f8f8f6"></div>
<div class="r" style="left:8px;top:966px;width:4px;height:1px;background:#8c8c8c"></div><div class="r" style="left:8px;top:970px;width:4px;height:1px;background:#8c8c8c"></div><div class="r" style="left:8px;top:974px;width:4px;height:1px;background:#8c8c8c"></div><div class="r" style="left:8px;top:978px;width:4px;height:1px;background:#8c8c8c"></div><div class="r" style="left:8px;top:982px;width:4px;height:1px;background:#8c8c8c"></div><div class="r" style="left:8px;top:986px;width:4px;height:1px;background:#8c8c8c"></div><div class="r" style="left:8px;top:990px;width:4px;height:1px;background:#8c8c8c"></div><div class="r" style="left:8px;top:994px;width:4px;height:1px;background:#8c8c8c"></div><div class="r" style="left:8px;top:998px;width:4px;height:1px;background:#8c8c8c"></div><div class="r" style="left:8px;top:1002px;width:4px;height:1px;background:#8c8c8c"></div><div class="r" style="left:8px;top:1006px;width:4px;height:1px;background:#8c8c8c"></div><div class="r" style="left:8px;top:1010px;width:4px;height:1px;background:#8c8c8c"></div>
<div class="r" style="left:14px;top:962px;width:1px;height:56px;background:#a4a4a4"></div>
<div class="t" style="left:16.5px;top:969.03px;font-size:13px;line-height:14.52px;color:#4c4c4c;font-weight:400;font-family:'Liberation Sans', sans-serif;transform:scaleX(1.0091);transform-origin:0 0;">Projet à :</div>
<div class="t" style="left:139.0px;top:969.03px;font-size:13px;line-height:14.52px;color:#4c4c4c;font-weight:400;font-family:'Liberation Sans', sans-serif;transform:scaleX(1.0336);transform-origin:0 0;">Aligner à :</div>
<div class="t" style="left:266.0px;top:969.03px;font-size:13px;line-height:14.52px;color:#4c4c4c;font-weight:400;font-family:'Liberation Sans', sans-serif;transform:scaleX(1.0419);transform-origin:0 0;">Début de la sélection</div>
<div class="r" style="left:431.5px;top:969px;width:14px;height:14px;border-radius:50%;background:radial-gradient(circle,#7a3a20 0,#7a3a20 28%,#f08050 32%,#e86a3a 100%);box-shadow:0 0 0 0.5px #c05020"></div>
<div class="t" style="left:452.5px;top:969.03px;font-size:13px;line-height:14.52px;color:#4c4c4c;font-weight:400;font-family:'Liberation Sans', sans-serif;transform:scaleX(0.9413);transform-origin:0 0;">Fin</div>
<div class="r" style="left:480px;top:969.3px;width:13.5px;height:13.5px;border-radius:50%;box-sizing:border-box;border:1px solid #a8a8a4;background:#fff"></div>
<div class="t" style="left:501.0px;top:969.03px;font-size:13px;line-height:14.52px;color:#4c4c4c;font-weight:400;font-family:'Liberation Sans', sans-serif;">Durée</div>
<div class="t" style="left:599.0px;top:969.03px;font-size:13px;line-height:14.52px;color:#4c4c4c;font-weight:400;font-family:'Liberation Sans', sans-serif;transform:scaleX(1.0124);transform-origin:0 0;">Position audio :</div>
<div class="r" style="left:17.5px;top:990px;width:77px;height:23.5px;box-sizing:border-box;border:1px solid #c4c4c0;border-radius:4px;background:#fff"></div>
<div class="r" style="left:69px;top:991px;width:1px;height:22px;background:#d8d8d4"></div>
<div class="r" style="left:70px;top:991px;width:24px;height:21.5px;background:#f2f2f0;border-radius:0 4px 4px 0"></div>
<svg class="r" style="left:77px;top:999px" width="10" height="6"><path d="M0.5,0.5 H8.5 L4.5,5Z" fill="#555"/></svg>
<div class="t" style="left:21.3px;top:995.24px;font-size:13px;line-height:14.52px;color:#4c4c4c;font-weight:400;font-family:'Liberation Sans', sans-serif;transform:scaleX(1.0650);transform-origin:0 0;">44100</div>
<div class="r" style="left:132px;top:990px;width:1px;height:24px;background:#dcdcd8"></div>
<div class="r" style="left:140px;top:990.5px;width:118px;height:24px;box-sizing:border-box;border:1px solid #c4c4c0;border-radius:4px;background:linear-gradient(#fbfbfa,#efefed)"></div>
<div class="t" style="left:146.0px;top:995.24px;font-size:13px;line-height:14.52px;color:#4c4c4c;font-weight:400;font-family:'Liberation Sans', sans-serif;transform:scaleX(1.0679);transform-origin:0 0;">Éteint</div>
<svg class="r" style="left:243px;top:996px" width="10" height="15"><path d="M1.5,5.5 L5,1.5 L8.5,5.5Z M1.5,9.5 L5,13.5 L8.5,9.5Z" fill="#666"/></svg>
<div class="r" style="left:267.3px;top:992.3px;width:154px;height:21.2px;box-sizing:border-box;border:1px solid #a8a49c;border-radius:3px;background:#d6d6d6"></div><div class="r" style="left:411.3px;top:993.5px;width:8.5px;height:18.5px;background:#dedede;border-left:1px solid #f4f4f4"></div><svg class="r" style="left:411.8px;top:999px" width="9" height="7"><path d="M0.5,0.5 H8.5 L4.5,5.5Z" fill="#111"/></svg>
<div class="r" style="left:430.3px;top:992.3px;width:154px;height:21.2px;box-sizing:border-box;border:1px solid #a8a49c;border-radius:3px;background:#d6d6d6"></div><div class="r" style="left:574.3px;top:993.5px;width:8.5px;height:18.5px;background:#dedede;border-left:1px solid #f4f4f4"></div><svg class="r" style="left:574.8px;top:999px" width="9" height="7"><path d="M0.5,0.5 H8.5 L4.5,5.5Z" fill="#111"/></svg>
<div class="r" style="left:600.3px;top:992.3px;width:154px;height:21.2px;box-sizing:border-box;border:1px solid #a8a49c;border-radius:3px;background:#d6d6d6"></div><div class="r" style="left:744.3px;top:993.5px;width:8.5px;height:18.5px;background:#dedede;border-left:1px solid #f4f4f4"></div><svg class="r" style="left:744.8px;top:999px" width="9" height="7"><path d="M0.5,0.5 H8.5 L4.5,5.5Z" fill="#111"/></svg>
<div class="t" style="left:271.5px;top:995.78px;font-size:13.5px;line-height:15.08px;color:#1c1cc0;font-weight:400;font-family:'Liberation Sans', sans-serif;transform:scaleX(1.1054);transform-origin:0 0;">0</div><div class="t" style="left:281.6px;top:995.78px;font-size:13.5px;line-height:15.08px;color:#1c1cc0;font-weight:400;font-family:'Liberation Sans', sans-serif;transform:scaleX(1.1054);transform-origin:0 0;">0</div><div class="t" style="left:294.4px;top:995.78px;font-size:13.5px;line-height:15.08px;color:#111;font-weight:400;font-family:'Liberation Sans', sans-serif;transform:scaleX(0.9856);transform-origin:0 0;">h</div><div class="t" style="left:307.7px;top:995.78px;font-size:13.5px;line-height:15.08px;color:#1c1cc0;font-weight:400;font-family:'Liberation Sans', sans-serif;transform:scaleX(1.1054);transform-origin:0 0;">0</div><div class="t" style="left:318.0px;top:995.78px;font-size:13.5px;line-height:15.08px;color:#1c1cc0;font-weight:400;font-family:'Liberation Sans', sans-serif;transform:scaleX(1.1054);transform-origin:0 0;">0</div><div class="t" style="left:330.4px;top:995.78px;font-size:13.5px;line-height:15.08px;color:#111;font-weight:400;font-family:'Liberation Sans', sans-serif;transform:scaleX(1.0670);transform-origin:0 0;">m</div><div class="t" style="left:347.5px;top:995.78px;font-size:13.5px;line-height:15.08px;color:#1c1cc0;font-weight:400;font-family:'Liberation Sans', sans-serif;transform:scaleX(1.1054);transform-origin:0 0;">0</div><div class="t" style="left:357.7px;top:995.78px;font-size:13.5px;line-height:15.08px;color:#1c1cc0;font-weight:400;font-family:'Liberation Sans', sans-serif;transform:scaleX(1.1054);transform-origin:0 0;">0</div><div class="t" style="left:367.5px;top:995.78px;font-size:13.5px;line-height:15.08px;color:#1c1cc0;font-weight:400;font-family:'Liberation Sans', sans-serif;transform:scaleX(0.9599);transform-origin:0 0;">.</div><div class="t" style="left:371.5px;top:995.78px;font-size:13.5px;line-height:15.08px;color:#1c1cc0;font-weight:400;font-family:'Liberation Sans', sans-serif;transform:scaleX(1.1054);transform-origin:0 0;">0</div><div class="t" style="left:381.6px;top:995.78px;font-size:13.5px;line-height:15.08px;color:#1c1cc0;font-weight:400;font-family:'Liberation Sans', sans-serif;transform:scaleX(1.1054);transform-origin:0 0;">0</div><div class="t" style="left:391.5px;top:995.78px;font-size:13.5px;line-height:15.08px;color:#1c1cc0;font-weight:400;font-family:'Liberation Sans', sans-serif;transform:scaleX(1.1054);transform-origin:0 0;">0</div><div class="t" style="left:403.4px;top:995.78px;font-size:13.5px;line-height:15.08px;color:#111;font-weight:400;font-family:'Liberation Sans', sans-serif;transform:scaleX(1.1259);transform-origin:0 0;">s</div>
<div class="t" style="left:434.5px;top:995.78px;font-size:13.5px;line-height:15.08px;color:#1c1cc0;font-weight:400;font-family:'Liberation Sans', sans-serif;transform:scaleX(1.1054);transform-origin:0 0;">0</div><div class="t" style="left:444.6px;top:995.78px;font-size:13.5px;line-height:15.08px;color:#1c1cc0;font-weight:400;font-family:'Liberation Sans', sans-serif;transform:scaleX(1.1054);transform-origin:0 0;">0</div><div class="t" style="left:457.4px;top:995.78px;font-size:13.5px;line-height:15.08px;color:#111;font-weight:400;font-family:'Liberation Sans', sans-serif;transform:scaleX(0.9856);transform-origin:0 0;">h</div><div class="t" style="left:470.7px;top:995.78px;font-size:13.5px;line-height:15.08px;color:#1c1cc0;font-weight:400;font-family:'Liberation Sans', sans-serif;transform:scaleX(1.1054);transform-origin:0 0;">0</div><div class="t" style="left:481.0px;top:995.78px;font-size:13.5px;line-height:15.08px;color:#1c1cc0;font-weight:400;font-family:'Liberation Sans', sans-serif;transform:scaleX(1.1054);transform-origin:0 0;">0</div><div class="t" style="left:493.4px;top:995.78px;font-size:13.5px;line-height:15.08px;color:#111;font-weight:400;font-family:'Liberation Sans', sans-serif;transform:scaleX(1.0670);transform-origin:0 0;">m</div><div class="t" style="left:510.5px;top:995.78px;font-size:13.5px;line-height:15.08px;color:#1c1cc0;font-weight:400;font-family:'Liberation Sans', sans-serif;transform:scaleX(1.1054);transform-origin:0 0;">0</div><div class="t" style="left:520.7px;top:995.78px;font-size:13.5px;line-height:15.08px;color:#1c1cc0;font-weight:400;font-family:'Liberation Sans', sans-serif;transform:scaleX(1.1054);transform-origin:0 0;">0</div><div class="t" style="left:530.5px;top:995.78px;font-size:13.5px;line-height:15.08px;color:#1c1cc0;font-weight:400;font-family:'Liberation Sans', sans-serif;transform:scaleX(0.9599);transform-origin:0 0;">.</div><div class="t" style="left:534.5px;top:995.78px;font-size:13.5px;line-height:15.08px;color:#1c1cc0;font-weight:400;font-family:'Liberation Sans', sans-serif;transform:scaleX(1.1054);transform-origin:0 0;">0</div><div class="t" style="left:544.6px;top:995.78px;font-size:13.5px;line-height:15.08px;color:#1c1cc0;font-weight:400;font-family:'Liberation Sans', sans-serif;transform:scaleX(1.1054);transform-origin:0 0;">0</div><div class="t" style="left:554.5px;top:995.78px;font-size:13.5px;line-height:15.08px;color:#1c1cc0;font-weight:400;font-family:'Liberation Sans', sans-serif;transform:scaleX(1.1054);transform-origin:0 0;">0</div><div class="t" style="left:566.4px;top:995.78px;font-size:13.5px;line-height:15.08px;color:#111;font-weight:400;font-family:'Liberation Sans', sans-serif;transform:scaleX(1.1259);transform-origin:0 0;">s</div>
<div class="t" style="left:604.5px;top:995.78px;font-size:13.5px;line-height:15.08px;color:#1c1cc0;font-weight:400;font-family:'Liberation Sans', sans-serif;transform:scaleX(1.1054);transform-origin:0 0;">0</div><div class="t" style="left:614.6px;top:995.78px;font-size:13.5px;line-height:15.08px;color:#1c1cc0;font-weight:400;font-family:'Liberation Sans', sans-serif;transform:scaleX(1.1054);transform-origin:0 0;">0</div><div class="t" style="left:627.4px;top:995.78px;font-size:13.5px;line-height:15.08px;color:#111;font-weight:400;font-family:'Liberation Sans', sans-serif;transform:scaleX(0.9856);transform-origin:0 0;">h</div><div class="t" style="left:640.7px;top:995.78px;font-size:13.5px;line-height:15.08px;color:#1c1cc0;font-weight:400;font-family:'Liberation Sans', sans-serif;transform:scaleX(1.1054);transform-origin:0 0;">0</div><div class="t" style="left:651.0px;top:995.78px;font-size:13.5px;line-height:15.08px;color:#1c1cc0;font-weight:400;font-family:'Liberation Sans', sans-serif;transform:scaleX(1.1054);transform-origin:0 0;">0</div><div class="t" style="left:663.4px;top:995.78px;font-size:13.5px;line-height:15.08px;color:#111;font-weight:400;font-family:'Liberation Sans', sans-serif;transform:scaleX(1.0670);transform-origin:0 0;">m</div><div class="t" style="left:680.5px;top:995.78px;font-size:13.5px;line-height:15.08px;color:#1c1cc0;font-weight:400;font-family:'Liberation Sans', sans-serif;transform:scaleX(1.1054);transform-origin:0 0;">3</div><div class="t" style="left:690.7px;top:995.78px;font-size:13.5px;line-height:15.08px;color:#1c1cc0;font-weight:400;font-family:'Liberation Sans', sans-serif;transform:scaleX(1.1054);transform-origin:0 0;">4</div><div class="t" style="left:700.5px;top:995.78px;font-size:13.5px;line-height:15.08px;color:#1c1cc0;font-weight:400;font-family:'Liberation Sans', sans-serif;transform:scaleX(0.9599);transform-origin:0 0;">.</div><div class="t" style="left:704.5px;top:995.78px;font-size:13.5px;line-height:15.08px;color:#1c1cc0;font-weight:400;font-family:'Liberation Sans', sans-serif;transform:scaleX(1.1054);transform-origin:0 0;">1</div><div class="t" style="left:714.6px;top:995.78px;font-size:13.5px;line-height:15.08px;color:#1c1cc0;font-weight:400;font-family:'Liberation Sans', sans-serif;transform:scaleX(1.1054);transform-origin:0 0;">1</div><div class="t" style="left:724.5px;top:995.78px;font-size:13.5px;line-height:15.08px;color:#1c1cc0;font-weight:400;font-family:'Liberation Sans', sans-serif;transform:scaleX(1.1054);transform-origin:0 0;">7</div><div class="t" style="left:736.4px;top:995.78px;font-size:13.5px;line-height:15.08px;color:#111;font-weight:400;font-family:'Liberation Sans', sans-serif;transform:scaleX(1.1259);transform-origin:0 0;">s</div>
<div class="r" style="left:423px;top:990px;width:1px;height:24px;background:#dcdcd8"></div>
<div class="r" style="left:592px;top:990px;width:1px;height:24px;background:#dcdcd8"></div>
<div class="r" style="left:4px;top:1018px;width:906px;height:1px;background:#c8c8c4"></div>
<div class="r" style="left:4px;top:1019px;width:906px;height:23px;background:#f2f1f0"></div>
<div class="t" style="left:9.3px;top:1024.33px;font-size:14px;line-height:15.64px;color:#4c4c4c;font-weight:400;font-family:'Liberation Sans', sans-serif;transform:scaleX(1.1232);transform-origin:0 0;">Enregistrement.</div>
<div class="t" style="left:216.0px;top:1024.33px;font-size:14px;line-height:15.64px;color:#4c4c4c;font-weight:400;font-family:'Liberation Sans', sans-serif;transform:scaleX(1.0899);transform-origin:0 0;">Espace disque restant pour l&#x27;enregistrement : 34 heures et 33 minutes</div>
<div class="t" style="left:738.0px;top:1024.33px;font-size:14px;line-height:15.64px;color:#4c4c4c;font-weight:400;font-family:'Liberation Sans', sans-serif;transform:scaleX(1.0459);transform-origin:0 0;">Taux actuel : 44100</div>
</div></body></html>
